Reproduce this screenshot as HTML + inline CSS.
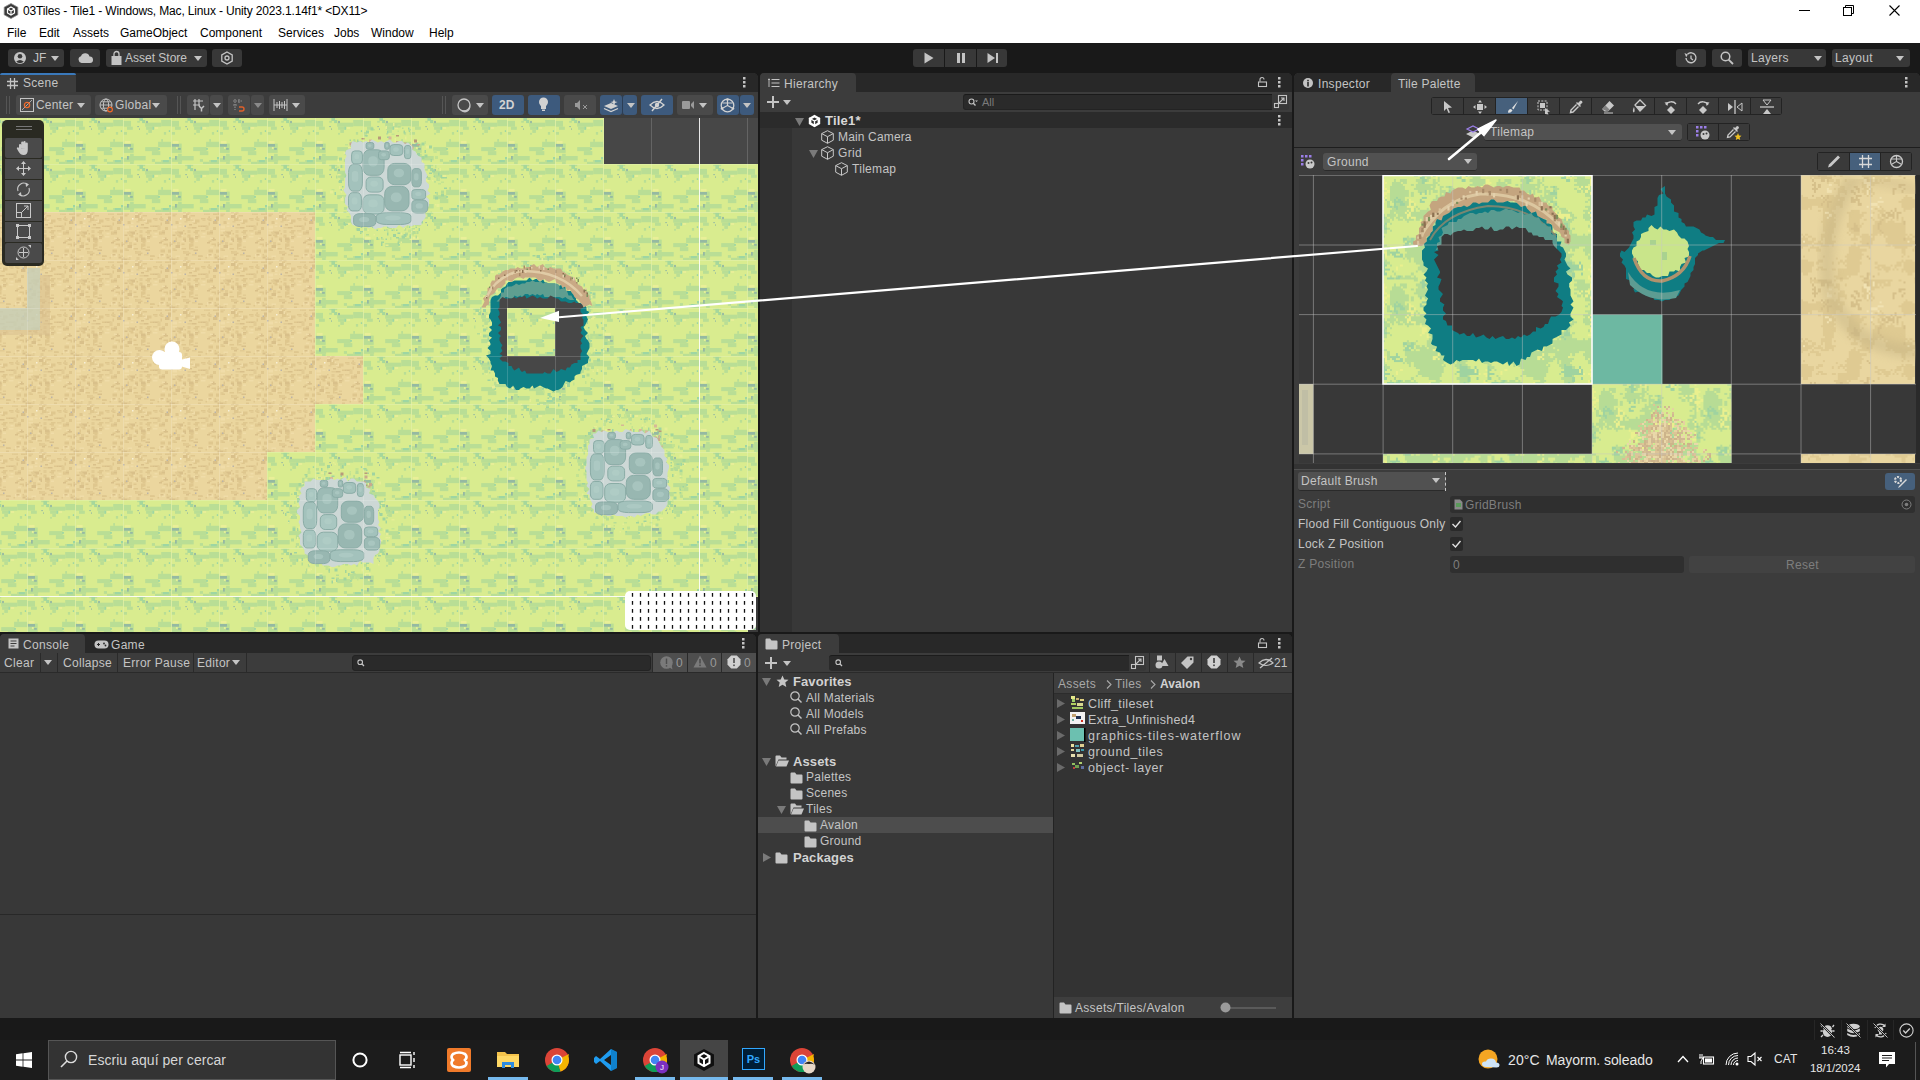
<!DOCTYPE html><html><head><meta charset="utf-8"><style>
*{margin:0;padding:0;box-sizing:border-box}
html,body{width:1920px;height:1080px;overflow:hidden;background:#191919;font-family:"Liberation Sans",sans-serif;font-size:12px;color:#c4c4c4}
.a{position:absolute}
.t{position:absolute;white-space:nowrap;line-height:1}
svg.i{position:absolute;overflow:visible}
.panel{position:absolute;background:#383838;border-radius:5px 5px 0 0;overflow:hidden}
.tabstrip{position:absolute;left:0;top:0;right:0;height:19px;background:#282828}
.tab{position:absolute;top:0;height:19px;background:#3c3c3c;border-radius:4px 4px 0 0}
.ptool{position:absolute;left:0;right:0;background:#3c3c3c}
.tbtn{position:absolute;background:#383838;border-radius:3px}
.sbtn{position:absolute;background:#4a4a4a;border-radius:3px}
.blue{background:#3d5a7d !important}
.dd{position:absolute;background:#515151;border-radius:3px}
.sf{position:absolute;background:#2a2a2a;border-radius:3px;border:1px solid #212121}
</style></head><body>
<div class="a" style="left:0px;top:0px;width:1920px;height:43px;background:#ffffff;"></div>
<svg class="i" style="left:3px;top:3px;" width="16" height="16" viewBox="0 0 16 16"><polygon points="8,0.5 14.8,4.2 14.8,11.8 8,15.5 1.2,11.8 1.2,4.2" fill="#3a3a3a" stroke="#8a8a8a" stroke-width="0.8"/><path d="M8 4 L11.5 6 L11.5 10 L8 12 L4.5 10 L4.5 6Z" fill="none" stroke="#fff" stroke-width="1.2"/><path d="M8 8 L8 12 M8 8 L11.5 6 M8 8 L4.5 6" stroke="#fff" stroke-width="1.1"/></svg>
<div class="t" style="left:23px;top:5px;font-size:12px;color:#000;font-weight:400;letter-spacing:-0.15px;">03Tiles - Tile1 - Windows, Mac, Linux - Unity 2023.1.14f1* &lt;DX11&gt;</div>
<svg class="i" style="left:1799px;top:10px;" width="11" height="1" viewBox="0 0 11 1"><rect width="11" height="1" fill="#000"/></svg>
<svg class="i" style="left:1843px;top:5px;" width="11" height="11" viewBox="0 0 11 11"><rect x="0.5" y="2.5" width="8" height="8" fill="none" stroke="#000"/><path d="M2.5 2.5V0.5H10.5V8.5H8.5" fill="none" stroke="#000"/></svg>
<svg class="i" style="left:1889px;top:5px;" width="11" height="11" viewBox="0 0 11 11"><path d="M0.5 0.5L10.5 10.5M10.5 0.5L0.5 10.5" stroke="#000" stroke-width="1.1"/></svg>
<div class="t" style="left:7px;top:27px;font-size:12px;color:#000;font-weight:400;letter-spacing:0px;">File</div>
<div class="t" style="left:39px;top:27px;font-size:12px;color:#000;font-weight:400;letter-spacing:0px;">Edit</div>
<div class="t" style="left:73px;top:27px;font-size:12px;color:#000;font-weight:400;letter-spacing:0px;">Assets</div>
<div class="t" style="left:120px;top:27px;font-size:12px;color:#000;font-weight:400;letter-spacing:0px;">GameObject</div>
<div class="t" style="left:200px;top:27px;font-size:12px;color:#000;font-weight:400;letter-spacing:0px;">Component</div>
<div class="t" style="left:278px;top:27px;font-size:12px;color:#000;font-weight:400;letter-spacing:0px;">Services</div>
<div class="t" style="left:334px;top:27px;font-size:12px;color:#000;font-weight:400;letter-spacing:0px;">Jobs</div>
<div class="t" style="left:371px;top:27px;font-size:12px;color:#000;font-weight:400;letter-spacing:0px;">Window</div>
<div class="t" style="left:429px;top:27px;font-size:12px;color:#000;font-weight:400;letter-spacing:0px;">Help</div>
<div class="a" style="left:0px;top:43px;width:1920px;height:30px;background:#191919;"></div>
<div class="tbtn" style="left:8px;top:49px;width:56px;height:18px"></div>
<div class="tbtn" style="left:70px;top:49px;width:30px;height:18px"></div>
<div class="tbtn" style="left:106px;top:49px;width:101px;height:18px"></div>
<div class="tbtn" style="left:212px;top:49px;width:30px;height:18px"></div>
<svg class="i" style="left:13px;top:51px;" width="14" height="14" viewBox="0 0 14 14"><circle cx="7" cy="7" r="6" fill="#c4c4c4"/><circle cx="7" cy="5.2" r="2.3" fill="#383838"/><path d="M3.2 10.8 Q7 7.2 10.8 10.8 Q7 13.5 3.2 10.8Z" fill="#383838"/></svg>
<div class="t" style="left:33px;top:52px;font-size:12px;color:#c4c4c4;font-weight:400;letter-spacing:0px;">JF</div>
<svg class="i" style="left:51px;top:56px;" width="8" height="5" viewBox="0 0 8 5"><path d="M0 0H8L4 5Z" fill="#c4c4c4"/></svg>
<svg class="i" style="left:78px;top:53px;" width="15" height="10" viewBox="0 0 15 10"><path d="M3.5 10 A3.5 3.5 0 0 1 3 3.2 A4.5 4.5 0 0 1 11.5 3.5 A3.2 3.2 0 0 1 12 10Z" fill="#c4c4c4"/></svg>
<svg class="i" style="left:111px;top:51px;" width="11" height="14" viewBox="0 0 11 14"><path d="M3 5V3A2.5 2.5 0 0 1 8 3V5" fill="none" stroke="#c4c4c4" stroke-width="1.3"/><rect x="0.5" y="5" width="10" height="9" fill="#c4c4c4"/></svg>
<div class="t" style="left:125px;top:52px;font-size:12px;color:#c4c4c4;font-weight:400;letter-spacing:0px;">Asset Store</div>
<svg class="i" style="left:194px;top:56px;" width="8" height="5" viewBox="0 0 8 5"><path d="M0 0H8L4 5Z" fill="#c4c4c4"/></svg>
<svg class="i" style="left:220px;top:51px;" width="14" height="14" viewBox="0 0 14 14"><polygon points="7,1 12.2,4 12.2,10 7,13 1.8,10 1.8,4" fill="none" stroke="#c4c4c4" stroke-width="1.3"/><circle cx="7" cy="7" r="2" fill="none" stroke="#c4c4c4" stroke-width="1.3"/></svg>
<div class="a" style="left:913px;top:49px;width:94px;height:18px;background:#383838;border-radius:3px"></div>
<div class="a" style="left:944px;top:49px;width:1px;height:18px;background:#191919;"></div>
<div class="a" style="left:976px;top:49px;width:1px;height:18px;background:#191919;"></div>
<svg class="i" style="left:924px;top:52px;" width="10" height="12" viewBox="0 0 10 12"><path d="M0.5 0.5L9.5 6L0.5 11.5Z" fill="#c4c4c4"/></svg>
<svg class="i" style="left:956px;top:52px;" width="10" height="12" viewBox="0 0 10 12"><rect x="1" y="1" width="3" height="10" fill="#c4c4c4"/><rect x="6" y="1" width="3" height="10" fill="#c4c4c4"/></svg>
<svg class="i" style="left:987px;top:52px;" width="12" height="12" viewBox="0 0 12 12"><path d="M0.5 1L8 6L0.5 11Z" fill="#c4c4c4"/><rect x="9" y="1" width="2" height="10" fill="#c4c4c4"/></svg>
<div class="tbtn" style="left:1676px;top:49px;width:30px;height:18px"></div>
<div class="tbtn" style="left:1712px;top:49px;width:30px;height:18px"></div>
<div class="tbtn" style="left:1748px;top:49px;width:78px;height:18px"></div>
<div class="tbtn" style="left:1832px;top:49px;width:78px;height:18px"></div>
<svg class="i" style="left:1683px;top:51px;" width="15" height="14" viewBox="0 0 15 14"><path d="M3 7 A5 5 0 1 0 4.5 3.2" fill="none" stroke="#c4c4c4" stroke-width="1.4"/><path d="M1.5 2 L4.8 3.4 L3.2 6.2Z" fill="#c4c4c4"/><path d="M8 4.5V7.5L10 9" fill="none" stroke="#c4c4c4" stroke-width="1.3"/></svg>
<svg class="i" style="left:1720px;top:51px;" width="14" height="14" viewBox="0 0 14 14"><circle cx="5.5" cy="5.5" r="4.3" fill="none" stroke="#c4c4c4" stroke-width="1.5"/><path d="M8.6 8.6L13 13" stroke="#c4c4c4" stroke-width="1.8"/></svg>
<div class="t" style="left:1751px;top:52px;font-size:12px;color:#c4c4c4;font-weight:400;letter-spacing:0.3px;">Layers</div>
<svg class="i" style="left:1814px;top:56px;" width="8" height="5" viewBox="0 0 8 5"><path d="M0 0H8L4 5Z" fill="#c4c4c4"/></svg>
<div class="t" style="left:1835px;top:52px;font-size:12px;color:#c4c4c4;font-weight:400;letter-spacing:0.3px;">Layout</div>
<svg class="i" style="left:1896px;top:56px;" width="8" height="5" viewBox="0 0 8 5"><path d="M0 0H8L4 5Z" fill="#c4c4c4"/></svg>
<div class="panel" style="left:0;top:73px;width:758px;height:559px;"><div class="tabstrip"></div></div>
<div class="a" style="left:0px;top:73px;width:76px;height:19px;background:#3c3c3c;border-radius:4px 4px 0 0"></div>
<div class="a" style="left:0px;top:73px;width:76px;height:2px;background:#3a79bb;border-radius:4px 4px 0 0"></div>
<svg class="i" style="left:7px;top:78px;" width="11" height="11" viewBox="0 0 11 11"><path d="M3.5 0V11M7.5 0V11M0 3.5H11M0 7.5H11" stroke="#c4c4c4" stroke-width="1.3"/></svg>
<div class="t" style="left:23px;top:77px;font-size:12px;color:#c4c4c4;font-weight:400;letter-spacing:0.3px;">Scene</div>
<svg class="i" style="left:743px;top:77px;" width="3" height="11" viewBox="0 0 3 11"><rect x="0" y="0" width="2.5" height="2.5" fill="#c4c4c4"/><rect x="0" y="4" width="2.5" height="2.5" fill="#c4c4c4"/><rect x="0" y="8" width="2.5" height="2.5" fill="#c4c4c4"/></svg>
<div class="a" style="left:0px;top:92px;width:758px;height:26px;background:#3c3c3c;"></div>
<div class="a" style="left:6px;top:96px;width:1px;height:18px;background:#555;"></div>
<div class="a" style="left:9px;top:96px;width:1px;height:18px;background:#555;"></div>
<div class="a" style="left:177px;top:96px;width:1px;height:18px;background:#555;"></div>
<div class="a" style="left:180px;top:96px;width:1px;height:18px;background:#555;"></div>
<div class="a" style="left:442px;top:96px;width:1px;height:18px;background:#555;"></div>
<div class="a" style="left:445px;top:96px;width:1px;height:18px;background:#555;"></div>
<div class="sbtn" style="left:16px;top:95px;width:75px;height:20px"></div>
<div class="sbtn" style="left:95px;top:95px;width:72px;height:20px"></div>
<svg class="i" style="left:20px;top:98px;" width="14" height="14" viewBox="0 0 14 14"><rect x="0.5" y="0.5" width="13" height="13" fill="none" stroke="#c4c4c4"/><path d="M2 12L12 2" stroke="#c4c4c4" stroke-width="0.8"/><circle cx="7" cy="7" r="2.6" fill="none" stroke="#f06a2a" stroke-width="1.3"/></svg>
<div class="t" style="left:36px;top:99px;font-size:12px;color:#c4c4c4;font-weight:400;letter-spacing:0.2px;">Center</div>
<svg class="i" style="left:77px;top:103px;" width="8" height="5" viewBox="0 0 8 5"><path d="M0 0H8L4 5Z" fill="#c4c4c4"/></svg>
<svg class="i" style="left:99px;top:98px;" width="15" height="15" viewBox="0 0 15 15"><circle cx="7" cy="7" r="6" fill="none" stroke="#c4c4c4" stroke-width="1"/><ellipse cx="7" cy="7" rx="2.6" ry="6" fill="none" stroke="#c4c4c4" stroke-width="1"/><path d="M1 7H13M2 3.8H12M2 10.2H12" stroke="#c4c4c4" stroke-width="0.9"/><circle cx="11" cy="11.5" r="2.4" fill="#4a4a4a" stroke="#f06a2a" stroke-width="1.2"/></svg>
<div class="t" style="left:115px;top:99px;font-size:12px;color:#c4c4c4;font-weight:400;letter-spacing:0.3px;">Global</div>
<svg class="i" style="left:152px;top:103px;" width="8" height="5" viewBox="0 0 8 5"><path d="M0 0H8L4 5Z" fill="#c4c4c4"/></svg>
<div class="sbtn" style="left:187px;top:95px;width:22px;height:20px"></div>
<div class="sbtn" style="left:210px;top:95px;width:13px;height:20px"></div>
<div class="sbtn" style="left:228px;top:95px;width:22px;height:20px"></div>
<div class="sbtn" style="left:251px;top:95px;width:13px;height:20px"></div>
<div class="sbtn" style="left:269px;top:95px;width:36px;height:20px"></div>
<svg class="i" style="left:192px;top:98px;" width="13" height="14" viewBox="0 0 13 14"><path d="M3 1V12M7 1V8M1 3H11M1 7H8" stroke="#c4c4c4" stroke-width="1.2"/><path d="M7 8L9.5 10.5L12 8M9.5 10.5V13.5" fill="none" stroke="#c4c4c4" stroke-width="1.5"/></svg>
<svg class="i" style="left:213px;top:103px;" width="8" height="5" viewBox="0 0 8 5"><path d="M0 0H8L4 5Z" fill="#c4c4c4"/></svg>
<svg class="i" style="left:232px;top:98px;" width="13" height="14" viewBox="0 0 13 14"><path d="M3 1V12M7 1V6M1 3H11M1 7H5" stroke="#8a8a8a" stroke-width="1.2" stroke-dasharray="1.5 1"/><path d="M7 9H10A2 2 0 0 1 10 13H7" fill="none" stroke="#e0602a" stroke-width="1.4"/></svg>
<svg class="i" style="left:254px;top:103px;" width="8" height="5" viewBox="0 0 8 5"><path d="M0 0H8L4 5Z" fill="#8a8a8a"/></svg>
<svg class="i" style="left:273px;top:98px;" width="15" height="14" viewBox="0 0 15 14"><path d="M1 1V13M14 1V13M1 7H14M4 4V10M6.5 3V11M9 4V10M11.5 3V11" stroke="#c4c4c4" stroke-width="1"/></svg>
<svg class="i" style="left:292px;top:103px;" width="8" height="5" viewBox="0 0 8 5"><path d="M0 0H8L4 5Z" fill="#c4c4c4"/></svg>
<div class="sbtn" style="left:452px;top:95px;width:36px;height:20px"></div>
<div class="sbtn blue" style="left:492px;top:95px;width:32px;height:20px"></div>
<div class="sbtn blue" style="left:528px;top:95px;width:32px;height:20px"></div>
<div class="sbtn" style="left:564px;top:95px;width:32px;height:20px"></div>
<div class="sbtn blue" style="left:600px;top:95px;width:22px;height:20px"></div>
<div class="sbtn blue" style="left:623px;top:95px;width:14px;height:20px"></div>
<div class="sbtn blue" style="left:641px;top:95px;width:32px;height:20px"></div>
<div class="sbtn" style="left:677px;top:95px;width:36px;height:20px"></div>
<div class="sbtn blue" style="left:717px;top:95px;width:22px;height:20px"></div>
<div class="sbtn blue" style="left:740px;top:95px;width:14px;height:20px"></div>
<div class="a" style="left:622px;top:95px;width:1px;height:20px;background:#2c3e55;"></div>
<div class="a" style="left:739px;top:95px;width:1px;height:20px;background:#2c3e55;"></div>
<svg class="i" style="left:457px;top:98px;" width="15" height="14" viewBox="0 0 15 14"><circle cx="7" cy="7" r="6" fill="none" stroke="#c4c4c4" stroke-width="1.3"/><path d="M3 11A6 6 0 0 0 13 7A4.5 4.5 0 0 1 3 11Z" fill="#c4c4c4"/></svg>
<svg class="i" style="left:476px;top:103px;" width="8" height="5" viewBox="0 0 8 5"><path d="M0 0H8L4 5Z" fill="#c4c4c4"/></svg>
<div class="t" style="left:499px;top:99px;font-size:12px;color:#d2d2d2;font-weight:700;letter-spacing:0px;">2D</div>
<svg class="i" style="left:538px;top:97px;" width="11" height="15" viewBox="0 0 11 15"><circle cx="5.5" cy="5" r="4.5" fill="#d2d2d2"/><rect x="3" y="9" width="5" height="3" fill="#d2d2d2"/><rect x="4" y="12.5" width="3" height="1.5" fill="#d2d2d2"/></svg>
<svg class="i" style="left:574px;top:99px;" width="16" height="12" viewBox="0 0 16 12"><path d="M1 4H3L6 1V11L3 8H1Z" fill="#9a9a9a"/><path d="M9 6L13 10M13 6L9 10" stroke="#9a9a9a" stroke-width="1"/></svg>
<svg class="i" style="left:603px;top:98px;" width="16" height="14" viewBox="0 0 16 14"><path d="M1 8L8 5L15 8L8 11Z" fill="#d2d2d2"/><path d="M1 10.5L8 13.5L15 10.5" fill="none" stroke="#d2d2d2" stroke-width="1.3"/><path d="M11 1L12 3.5L14.5 4L12 5L11 7.5L10 5L7.5 4L10 3.5Z" fill="#d2d2d2"/></svg>
<svg class="i" style="left:627px;top:103px;" width="8" height="5" viewBox="0 0 8 5"><path d="M0 0H8L4 5Z" fill="#c4c4c4"/></svg>
<svg class="i" style="left:649px;top:98px;" width="16" height="14" viewBox="0 0 16 14"><path d="M1 7Q8 0 15 7Q8 14 1 7Z" fill="none" stroke="#d2d2d2" stroke-width="1.3"/><circle cx="8" cy="7" r="2.2" fill="#d2d2d2"/><path d="M3 13L13 1" stroke="#d2d2d2" stroke-width="1.4"/></svg>
<svg class="i" style="left:682px;top:100px;" width="13" height="10" viewBox="0 0 13 10"><rect x="0" y="1" width="8" height="8" rx="1" fill="#9a9a9a"/><path d="M9 4L12 1V9L9 6Z" fill="#9a9a9a"/></svg>
<svg class="i" style="left:699px;top:103px;" width="8" height="5" viewBox="0 0 8 5"><path d="M0 0H8L4 5Z" fill="#c4c4c4"/></svg>
<svg class="i" style="left:720px;top:98px;" width="15" height="15" viewBox="0 0 15 15"><circle cx="7.5" cy="7.5" r="6.3" fill="none" stroke="#d2d2d2" stroke-width="1.3"/><path d="M7.5 1.5V7.5L2 10.5M7.5 7.5L13 10.5M2.5 5H12.5" fill="none" stroke="#d2d2d2" stroke-width="1.2"/><circle cx="7.5" cy="1.5" r="1.3" fill="#d2d2d2"/><circle cx="2" cy="10.5" r="1.3" fill="#d2d2d2"/><circle cx="13" cy="10.5" r="1.3" fill="#d2d2d2"/></svg>
<svg class="i" style="left:743px;top:103px;" width="8" height="5" viewBox="0 0 8 5"><path d="M0 0H8L4 5Z" fill="#c4c4c4"/></svg>
<svg class="i" style="left:0;top:118px;overflow:hidden" width="758" height="514" viewBox="0 118 758 514"><defs><pattern id="grass" patternUnits="userSpaceOnUse" x="27" y="20" width="48" height="48"><rect width="48" height="48" fill="#d9ec8f"/><rect x="14.2" y="0.9" width="8.0" height="1.3" fill="#b9de95"/><rect x="16.4" y="0.9" width="3.6" height="4.0" fill="#a6d79b"/><rect x="19.1" y="4.0" width="3.1" height="3.1" fill="#a6d79b"/><rect x="14.2" y="4.9" width="2.7" height="1.8" fill="#b9de95"/><rect x="0.9" y="4.9" width="7.1" height="5.8" fill="#b9de95"/><rect x="4.0" y="10.7" width="5.8" height="3.1" fill="#b9de95"/><rect x="22.2" y="6.7" width="16.0" height="4.0" fill="#b9de95"/><rect x="23.1" y="10.7" width="6.2" height="3.1" fill="#b9de95"/><rect x="25.3" y="13.8" width="3.6" height="3.1" fill="#b9de95"/><rect x="38.2" y="4.0" width="9.8" height="6.2" fill="#b9de95"/><rect x="29.3" y="10.7" width="1.8" height="3.1" fill="#9dd6a3"/><rect x="32.0" y="11.1" width="3.1" height="1.8" fill="#e9ef98"/><rect x="23.1" y="4.9" width="1.8" height="2.2" fill="#95b9a2"/><rect x="14.2" y="10.2" width="1.8" height="0.9" fill="#95b9a2"/><rect x="16.0" y="12.4" width="0.9" height="1.4" fill="#95b9a2"/><rect x="0.9" y="16.0" width="3.1" height="2.7" fill="#b9de95"/><rect x="23.1" y="16.9" width="1.8" height="1.8" fill="#b9de95"/><rect x="40.9" y="16.0" width="2.2" height="2.7" fill="#b9de95"/><rect x="45.8" y="14.2" width="1.3" height="1.8" fill="#9dd6a3"/><rect x="38.2" y="23.1" width="1.8" height="2.7" fill="#b9de95"/><rect x="35.1" y="25.8" width="12.9" height="5.3" fill="#b9de95"/><rect x="22.2" y="31.1" width="13.4" height="4.0" fill="#b9de95"/><rect x="28.9" y="35.1" width="8.4" height="4.0" fill="#b9de95"/><rect x="35.1" y="32.0" width="1.8" height="1.8" fill="#9dd6a3"/><rect x="0.9" y="27.6" width="9.8" height="9.3" fill="#b9de95"/><rect x="1.8" y="24.9" width="5.8" height="2.7" fill="#e9ef98"/><rect x="0.9" y="28.0" width="7.1" height="2.7" fill="#95b9a2"/><rect x="7.1" y="32.0" width="2.7" height="1.8" fill="#95b9a2"/><rect x="4.9" y="31.1" width="1.8" height="1.8" fill="#e9ef98"/><rect x="4.9" y="40.0" width="17.8" height="4.4" fill="#b9de95"/><rect x="0.9" y="42.2" width="10.2" height="3.6" fill="#b9de95"/><rect x="7.1" y="37.8" width="3.6" height="2.2" fill="#b9de95"/><rect x="4.0" y="40.0" width="1.8" height="3.6" fill="#95b9a2"/><rect x="28.9" y="43.1" width="3.1" height="2.7" fill="#b9de95"/><rect x="38.2" y="44.0" width="9.8" height="4.0" fill="#b9de95"/><rect x="40.0" y="44.0" width="5.8" height="2.2" fill="#9dd6a3"/><rect x="46.0" y="41.0" width="2.0" height="2.5" fill="#9dd6a3"/><rect x="32.0" y="45.8" width="6.2" height="2.2" fill="#b9de95"/><rect x="7.1" y="45.8" width="3.6" height="2.2" fill="#b9de95"/></pattern><pattern id="sand" patternUnits="userSpaceOnUse" x="27" y="20" width="48" height="48"><rect width="48" height="48" fill="#ebd69e"/><rect x="30.0" y="13.5" width="1.5" height="1.5" fill="#d9c08a"/><rect x="9.0" y="34.5" width="1.5" height="3" fill="#f0dca8"/><rect x="19.5" y="3.0" width="4.5" height="1.5" fill="#dfc78e"/><rect x="6.0" y="22.5" width="4.5" height="1.5" fill="#dfc78e"/><rect x="10.5" y="21.0" width="1.5" height="3" fill="#f0dca8"/><rect x="37.5" y="4.5" width="1.5" height="3" fill="#dfc78e"/><rect x="12.0" y="27.0" width="3" height="3" fill="#d9c08a"/><rect x="10.5" y="28.5" width="3" height="1.5" fill="#f0dca8"/><rect x="18.0" y="34.5" width="1.5" height="3" fill="#dfc78e"/><rect x="4.5" y="19.5" width="4.5" height="1.5" fill="#d9c08a"/><rect x="43.5" y="43.5" width="3" height="1.5" fill="#e2cb93"/><rect x="16.5" y="22.5" width="3" height="3" fill="#dfc78e"/><rect x="46.5" y="31.5" width="3" height="3" fill="#d9c08a"/><rect x="6.0" y="10.5" width="4.5" height="1.5" fill="#f0dca8"/><rect x="31.5" y="13.5" width="4.5" height="1.5" fill="#d9c08a"/><rect x="6.0" y="30.0" width="3" height="3" fill="#e2cb93"/><rect x="46.5" y="43.5" width="1.5" height="1.5" fill="#dfc78e"/><rect x="45.0" y="6.0" width="3" height="3" fill="#dfc78e"/><rect x="42.0" y="27.0" width="3" height="1.5" fill="#d9c08a"/><rect x="43.5" y="33.0" width="1.5" height="1.5" fill="#dfc78e"/><rect x="4.5" y="19.5" width="3" height="3" fill="#e2cb93"/><rect x="22.5" y="37.5" width="4.5" height="1.5" fill="#d9c08a"/><rect x="15.0" y="42.0" width="3" height="1.5" fill="#d9c08a"/><rect x="40.5" y="25.5" width="3" height="3" fill="#d9c08a"/><rect x="36.0" y="21.0" width="1.5" height="1.5" fill="#dfc78e"/><rect x="13.5" y="21.0" width="1.5" height="1.5" fill="#dfc78e"/><rect x="16.5" y="24.0" width="1.5" height="1.5" fill="#e2cb93"/><rect x="39.0" y="34.5" width="3" height="1.5" fill="#f0dca8"/><rect x="4.5" y="43.5" width="4.5" height="1.5" fill="#f0dca8"/><rect x="37.5" y="37.5" width="4.5" height="3" fill="#dfc78e"/><rect x="37.5" y="4.5" width="1.5" height="1.5" fill="#dfc78e"/><rect x="42.0" y="15.0" width="3" height="3" fill="#dfc78e"/><rect x="4.5" y="9.0" width="3" height="3" fill="#dfc78e"/><rect x="9.0" y="34.5" width="1.5" height="1.5" fill="#f0dca8"/><rect x="19.5" y="36.0" width="3" height="1.5" fill="#dfc78e"/><rect x="34.5" y="45.0" width="1.5" height="1.5" fill="#dfc78e"/><rect x="43.5" y="45.0" width="3" height="1.5" fill="#d9c08a"/><rect x="13.5" y="9.0" width="3" height="1.5" fill="#e2cb93"/><rect x="15.0" y="1.5" width="3" height="1.5" fill="#dfc78e"/><rect x="1.5" y="28.5" width="3" height="3" fill="#dfc78e"/><rect x="34.5" y="15.0" width="3" height="3" fill="#e2cb93"/><rect x="31.5" y="21.0" width="3" height="1.5" fill="#f0dca8"/><rect x="37.5" y="21.0" width="4.5" height="1.5" fill="#dfc78e"/><rect x="1.5" y="1.5" width="4.5" height="1.5" fill="#e2cb93"/><rect x="18.0" y="33.0" width="3" height="1.5" fill="#d9c08a"/><rect x="7.5" y="21.0" width="3" height="1.5" fill="#dfc78e"/><rect x="18.0" y="31.5" width="4.5" height="3" fill="#dfc78e"/><rect x="0.0" y="45.0" width="1.5" height="3" fill="#e2cb93"/><rect x="10.5" y="36.0" width="4.5" height="1.5" fill="#dfc78e"/><rect x="40.5" y="31.5" width="4.5" height="1.5" fill="#dfc78e"/><rect x="37.5" y="7.5" width="3" height="1.5" fill="#dfc78e"/><rect x="1.5" y="13.5" width="4.5" height="3" fill="#f0dca8"/><rect x="13.5" y="45.0" width="3" height="3" fill="#e2cb93"/><rect x="12.0" y="1.5" width="1.5" height="3" fill="#dfc78e"/><rect x="12.0" y="40.5" width="3" height="1.5" fill="#dfc78e"/><rect x="24.0" y="19.5" width="3" height="3" fill="#e2cb93"/><rect x="30.0" y="24.0" width="4.5" height="1.5" fill="#f0dca8"/><rect x="4.5" y="33.0" width="4.5" height="3" fill="#d9c08a"/><rect x="12.0" y="13.5" width="1.5" height="1.5" fill="#f0dca8"/><rect x="16.5" y="0.0" width="3" height="1.5" fill="#dfc78e"/><rect x="45.0" y="10.5" width="1.5" height="1.5" fill="#f0dca8"/><rect x="45.0" y="9.0" width="1.5" height="1.5" fill="#f0dca8"/><rect x="18.0" y="25.5" width="1.5" height="3" fill="#dfc78e"/><rect x="42.0" y="1.5" width="4.5" height="1.5" fill="#dfc78e"/><rect x="18.0" y="25.5" width="4.5" height="3" fill="#d9c08a"/><rect x="22.5" y="24.0" width="3" height="1.5" fill="#f0dca8"/><rect x="12.0" y="39.0" width="4.5" height="1.5" fill="#dfc78e"/><rect x="30.0" y="6.0" width="4.5" height="1.5" fill="#dfc78e"/><rect x="19.5" y="28.5" width="3" height="3" fill="#dfc78e"/><rect x="34.5" y="13.5" width="3" height="1.5" fill="#e2cb93"/><rect x="21.0" y="9.0" width="4.5" height="1.5" fill="#d9c08a"/><rect x="21.0" y="15.0" width="4.5" height="1.5" fill="#d9c08a"/><rect x="39.0" y="18.0" width="3" height="1.5" fill="#e2cb93"/><rect x="34.5" y="1.5" width="4.5" height="1.5" fill="#e2cb93"/><rect x="1.5" y="36.0" width="3" height="3" fill="#e2cb93"/><rect x="6.0" y="10.5" width="1.5" height="1.5" fill="#dfc78e"/><rect x="24.0" y="25.5" width="3" height="1.5" fill="#dfc78e"/><rect x="12.0" y="40.5" width="4.5" height="1.5" fill="#e2cb93"/><rect x="46.5" y="30.0" width="3" height="1.5" fill="#dfc78e"/><rect x="16.5" y="40.5" width="3" height="1.5" fill="#dfc78e"/><rect x="7.5" y="24.0" width="3" height="1.5" fill="#dfc78e"/><rect x="24.0" y="10.5" width="1.5" height="1.5" fill="#d9c08a"/><rect x="39.0" y="25.5" width="3" height="1.5" fill="#f0dca8"/><rect x="22.5" y="10.5" width="3" height="1.5" fill="#dfc78e"/><rect x="16.5" y="18.0" width="3" height="3" fill="#e2cb93"/><rect x="19.5" y="27.0" width="3" height="1.5" fill="#d9c08a"/><rect x="33.0" y="1.5" width="1.5" height="1.5" fill="#e2cb93"/><rect x="1.5" y="18.0" width="4.5" height="1.5" fill="#f0dca8"/><rect x="42.0" y="9.0" width="4.5" height="3" fill="#d9c08a"/><rect x="37.5" y="28.5" width="3" height="1.5" fill="#dfc78e"/><rect x="18.0" y="12.0" width="3" height="1.5" fill="#d9c08a"/><rect x="12.0" y="0.0" width="3" height="1.5" fill="#dfc78e"/><rect x="15.0" y="4.5" width="4.5" height="3" fill="#dfc78e"/><rect x="27.0" y="22.5" width="1.5" height="1.5" fill="#e2cb93"/><rect x="16.5" y="15.0" width="4.5" height="1.5" fill="#e2cb93"/><rect x="24.0" y="34.5" width="3" height="1.5" fill="#e2cb93"/><rect x="3.0" y="28.5" width="3" height="1.5" fill="#dfc78e"/><rect x="0.0" y="31.5" width="1.5" height="1.5" fill="#d9c08a"/><rect x="25.5" y="18.0" width="1.5" height="1.5" fill="#dfc78e"/><rect x="24.0" y="7.5" width="4.5" height="3" fill="#dfc78e"/><rect x="3.0" y="37.5" width="3" height="1.5" fill="#dfc78e"/><rect x="21.0" y="7.5" width="3" height="3" fill="#f0dca8"/><rect x="36.0" y="30.0" width="3" height="1.5" fill="#d9c08a"/><rect x="13.5" y="3.0" width="4.5" height="3" fill="#f0dca8"/><rect x="12.0" y="1.5" width="3" height="1.5" fill="#f0dca8"/><rect x="1.5" y="3.0" width="3" height="1.5" fill="#dfc78e"/><rect x="36.0" y="42.0" width="1.5" height="3" fill="#f0dca8"/><rect x="1.5" y="22.5" width="3" height="1.5" fill="#d9c08a"/><rect x="43.5" y="6.0" width="1.5" height="3" fill="#f0dca8"/><rect x="6.0" y="45.0" width="1.5" height="1.5" fill="#e2cb93"/><rect x="22.5" y="19.5" width="4.5" height="1.5" fill="#dfc78e"/><rect x="36.0" y="6.0" width="3" height="1.5" fill="#d9c08a"/><rect x="18.0" y="6.0" width="3" height="1.5" fill="#f0dca8"/><rect x="24.0" y="28.5" width="3" height="1.5" fill="#f0dca8"/><rect x="45.0" y="4.5" width="3" height="3" fill="#d9c08a"/><rect x="9.0" y="19.5" width="3" height="3" fill="#d9c08a"/><rect x="27.0" y="43.5" width="4.5" height="1.5" fill="#d9c08a"/><rect x="18.0" y="28.5" width="4.5" height="1.5" fill="#dfc78e"/><rect x="27.0" y="43.5" width="4.5" height="1.5" fill="#dfc78e"/><rect x="36.0" y="19.5" width="1.5" height="3" fill="#dfc78e"/><rect x="7.5" y="13.5" width="3" height="1.5" fill="#f0dca8"/><rect x="12.0" y="25.5" width="3" height="1.5" fill="#dfc78e"/><rect x="46.5" y="46.5" width="1.5" height="1.5" fill="#d9c08a"/><rect x="0.0" y="46.5" width="4.5" height="1.5" fill="#d9c08a"/><rect x="13.5" y="39.0" width="4.5" height="1.5" fill="#e2cb93"/><rect x="10.5" y="31.5" width="3" height="1.5" fill="#dfc78e"/><rect x="37.5" y="10.5" width="1.5" height="3" fill="#dfc78e"/><rect x="27.0" y="24.0" width="1.5" height="1.5" fill="#e2cb93"/><rect x="36.0" y="6.0" width="4.5" height="1.5" fill="#e2cb93"/><rect x="4.5" y="25.5" width="1.5" height="3" fill="#dfc78e"/><rect x="27.0" y="13.5" width="3" height="1.5" fill="#dfc78e"/><rect x="30.0" y="18.0" width="4.5" height="1.5" fill="#e2cb93"/><rect x="37.5" y="19.5" width="1.5" height="3" fill="#dfc78e"/><rect x="39.0" y="42.0" width="3" height="3" fill="#f0dca8"/><rect x="27.0" y="46.5" width="3" height="1.5" fill="#dfc78e"/><rect x="45.0" y="39.0" width="3" height="1.5" fill="#e2cb93"/><rect x="24.0" y="24.0" width="3" height="1.5" fill="#d9c08a"/><rect x="45.0" y="37.5" width="3" height="3" fill="#dfc78e"/><rect x="15.0" y="6.0" width="4.5" height="3" fill="#dfc78e"/><rect x="21.0" y="42.0" width="4.5" height="1.5" fill="#e2cb93"/><rect x="12.0" y="18.0" width="1.5" height="1.5" fill="#dfc78e"/><rect x="31.5" y="7.5" width="3" height="1.5" fill="#e2cb93"/><rect x="24.0" y="18.0" width="4.5" height="1.5" fill="#dfc78e"/><rect x="39.0" y="19.5" width="3" height="1.5" fill="#d9c08a"/><rect x="4.5" y="46.5" width="3" height="1.5" fill="#e2cb93"/><rect x="19.5" y="7.5" width="3" height="1.5" fill="#e2cb93"/><rect x="37.5" y="42.0" width="3" height="1.5" fill="#d9c08a"/><rect x="12.0" y="3.0" width="4.5" height="3" fill="#d9c08a"/><rect x="46.5" y="0.0" width="4.5" height="3" fill="#dfc78e"/><rect x="43.5" y="42.0" width="1.5" height="1.5" fill="#dfc78e"/><rect x="13.5" y="13.5" width="1.5" height="1.5" fill="#b9b3a8"/><rect x="43.5" y="7.5" width="1.5" height="1.5" fill="#b9b3a8"/><rect x="0.0" y="12.0" width="1.5" height="1.5" fill="#b9b3a8"/><rect x="3.0" y="28.5" width="1.5" height="1.5" fill="#b9b3a8"/><rect x="24.0" y="40.5" width="1.5" height="1.5" fill="#b9b3a8"/><rect x="9.0" y="6.0" width="1.5" height="1.5" fill="#f8f0d8"/></pattern><radialGradient id="rk" cx="50%" cy="50%" r="50%"><stop offset="0" stop-color="#a3c1bb"/><stop offset="0.8" stop-color="#a8c4be"/><stop offset="1" stop-color="#b9d2b4"/></radialGradient></defs><rect x="0" y="118" width="758" height="514" fill="url(#grass)"/><path d="M0 212H315V356H363V404H315V452H267V500H0Z" fill="url(#sand)"/><path d="M27 268H40V330H0V308H27Z" fill="#c6cdb6" opacity="0.8"/><path d="M40 275H50V335H0V330H40Z" fill="#d8bd8e" opacity="0.5"/><rect x="604" y="118" width="154" height="46" fill="#474747"/><rect x="412.5" y="231.0" width="3" height="1.5" fill="#9fd3a0"/><rect x="432.0" y="180.0" width="1.5" height="1.5" fill="#e6ee96"/><rect x="394.5" y="145.5" width="3" height="1.5" fill="#e6ee96"/><rect x="418.5" y="228.0" width="1.5" height="3" fill="#a3d59c"/><rect x="438.0" y="183.0" width="3" height="1.5" fill="#c3e391"/><rect x="432.0" y="169.5" width="3" height="1.5" fill="#b5dc96"/><rect x="417.0" y="231.0" width="1.5" height="3" fill="#b5dc96"/><rect x="414.0" y="231.0" width="3" height="1.5" fill="#c3e391"/><rect x="400.5" y="220.5" width="1.5" height="1.5" fill="#a3d59c"/><rect x="400.5" y="241.5" width="1.5" height="1.5" fill="#e6ee96"/><rect x="342.0" y="165.0" width="1.5" height="3" fill="#c3e391"/><rect x="435.0" y="156.0" width="3" height="3" fill="#c3e391"/><rect x="432.0" y="169.5" width="3" height="3" fill="#9fd3a0"/><rect x="381.0" y="241.5" width="3" height="1.5" fill="#a3d59c"/><rect x="339.0" y="186.0" width="1.5" height="3" fill="#e6ee96"/><rect x="340.5" y="165.0" width="1.5" height="3" fill="#a3d59c"/><rect x="408.0" y="144.0" width="3" height="1.5" fill="#d2b494"/><rect x="417.0" y="208.5" width="3" height="3" fill="#a3d59c"/><rect x="406.5" y="217.5" width="1.5" height="3" fill="#e6ee96"/><rect x="421.5" y="162.0" width="1.5" height="3" fill="#e6ee96"/><rect x="342.0" y="186.0" width="1.5" height="1.5" fill="#a3d59c"/><rect x="345.0" y="165.0" width="3" height="1.5" fill="#c3e391"/><rect x="406.5" y="150.0" width="3" height="1.5" fill="#9fd3a0"/><rect x="351.0" y="204.0" width="3" height="1.5" fill="#b5dc96"/><rect x="438.0" y="177.0" width="1.5" height="3" fill="#c3e391"/><rect x="418.5" y="225.0" width="1.5" height="1.5" fill="#c3e391"/><rect x="421.5" y="156.0" width="3" height="3" fill="#a3d59c"/><rect x="331.5" y="189.0" width="3" height="1.5" fill="#c3e391"/><rect x="345.0" y="174.0" width="3" height="1.5" fill="#b5dc96"/><rect x="421.5" y="172.5" width="3" height="1.5" fill="#e6ee96"/><rect x="415.5" y="142.5" width="3" height="1.5" fill="#9fd3a0"/><rect x="412.5" y="214.5" width="1.5" height="1.5" fill="#b5dc96"/><rect x="354.0" y="139.5" width="1.5" height="3" fill="#b5dc96"/><rect x="420.0" y="220.5" width="3" height="3" fill="#9fd3a0"/><rect x="424.5" y="150.0" width="1.5" height="3" fill="#a3d59c"/><rect x="402.0" y="237.0" width="1.5" height="1.5" fill="#b5dc96"/><rect x="345.0" y="222.0" width="1.5" height="1.5" fill="#c3e391"/><rect x="385.5" y="238.5" width="1.5" height="1.5" fill="#9fd3a0"/><rect x="354.0" y="213.0" width="3" height="1.5" fill="#9fd3a0"/><rect x="351.0" y="172.5" width="3" height="3" fill="#e6ee96"/><rect x="373.5" y="234.0" width="1.5" height="1.5" fill="#e6ee96"/><rect x="354.0" y="153.0" width="3" height="1.5" fill="#a3d59c"/><rect x="363.0" y="238.5" width="1.5" height="1.5" fill="#b5dc96"/><rect x="349.5" y="142.5" width="1.5" height="3" fill="#c3e391"/><rect x="340.5" y="192.0" width="1.5" height="1.5" fill="#c3e391"/><rect x="436.5" y="192.0" width="1.5" height="3" fill="#b5dc96"/><rect x="372.0" y="129.0" width="3" height="1.5" fill="#c3e391"/><rect x="352.5" y="211.5" width="1.5" height="1.5" fill="#a3d59c"/><rect x="340.5" y="190.5" width="1.5" height="3" fill="#e6ee96"/><rect x="349.5" y="144.0" width="3" height="1.5" fill="#e6ee96"/><rect x="340.5" y="189.0" width="3" height="1.5" fill="#9fd3a0"/><rect x="408.0" y="220.5" width="1.5" height="1.5" fill="#c3e391"/><rect x="351.0" y="169.5" width="3" height="3" fill="#9fd3a0"/><rect x="444.0" y="177.0" width="3" height="1.5" fill="#a3d59c"/><rect x="367.5" y="141.0" width="1.5" height="3" fill="#e6ee96"/><rect x="418.5" y="202.5" width="3" height="1.5" fill="#e6ee96"/><rect x="424.5" y="154.5" width="3" height="3" fill="#a3d59c"/><rect x="411.0" y="223.5" width="3" height="3" fill="#c3e391"/><rect x="355.5" y="153.0" width="3" height="3" fill="#a3d59c"/><rect x="432.0" y="219.0" width="1.5" height="3" fill="#a3d59c"/><rect x="408.0" y="127.5" width="1.5" height="1.5" fill="#9fd3a0"/><rect x="349.5" y="183.0" width="3" height="3" fill="#e6ee96"/><rect x="388.5" y="222.0" width="1.5" height="1.5" fill="#e6ee96"/><rect x="426.0" y="175.5" width="1.5" height="3" fill="#9fd3a0"/><rect x="411.0" y="228.0" width="1.5" height="3" fill="#c3e391"/><rect x="403.5" y="228.0" width="1.5" height="1.5" fill="#e6ee96"/><rect x="339.0" y="157.5" width="3" height="1.5" fill="#e6ee96"/><rect x="366.0" y="150.0" width="1.5" height="1.5" fill="#c3e391"/><rect x="436.5" y="204.0" width="3" height="3" fill="#e6ee96"/><rect x="364.5" y="135.0" width="3" height="1.5" fill="#a3d59c"/><rect x="361.5" y="219.0" width="1.5" height="1.5" fill="#b5dc96"/><rect x="402.0" y="220.5" width="3" height="3" fill="#a3d59c"/><rect x="363.0" y="217.5" width="3" height="3" fill="#e6ee96"/><rect x="366.0" y="135.0" width="1.5" height="1.5" fill="#a3d59c"/><rect x="391.5" y="229.5" width="3" height="1.5" fill="#9fd3a0"/><rect x="367.5" y="132.0" width="3" height="1.5" fill="#e6ee96"/><rect x="367.5" y="222.0" width="1.5" height="3" fill="#e6ee96"/><rect x="348.0" y="150.0" width="1.5" height="3" fill="#a3d59c"/><rect x="346.5" y="184.5" width="1.5" height="3" fill="#c3e391"/><rect x="369.0" y="144.0" width="1.5" height="3" fill="#d2b494"/><rect x="343.5" y="222.0" width="1.5" height="3" fill="#9fd3a0"/><rect x="406.5" y="223.5" width="3" height="1.5" fill="#b5dc96"/><rect x="409.5" y="238.5" width="3" height="1.5" fill="#e6ee96"/><rect x="393.0" y="234.0" width="3" height="3" fill="#9fd3a0"/><rect x="421.5" y="160.5" width="1.5" height="3" fill="#e6ee96"/><rect x="334.5" y="169.5" width="1.5" height="1.5" fill="#9fd3a0"/><rect x="435.0" y="151.5" width="1.5" height="1.5" fill="#b5dc96"/><rect x="397.5" y="232.5" width="3" height="1.5" fill="#9fd3a0"/><rect x="412.5" y="229.5" width="3" height="3" fill="#e6ee96"/><rect x="387.0" y="130.5" width="1.5" height="3" fill="#9fd3a0"/><rect x="405.0" y="145.5" width="3" height="1.5" fill="#c3e391"/><rect x="342.0" y="172.5" width="3" height="3" fill="#b5dc96"/><rect x="403.5" y="130.5" width="1.5" height="3" fill="#a3d59c"/><rect x="409.5" y="214.5" width="3" height="3" fill="#e6ee96"/><rect x="400.5" y="225.0" width="3" height="1.5" fill="#e6ee96"/><rect x="441.0" y="193.5" width="3" height="3" fill="#a3d59c"/><rect x="343.5" y="195.0" width="1.5" height="3" fill="#c3e391"/><rect x="387.0" y="136.5" width="3" height="1.5" fill="#9fd3a0"/><rect x="423.0" y="165.0" width="1.5" height="3" fill="#9fd3a0"/><rect x="387.0" y="225.0" width="1.5" height="3" fill="#9fd3a0"/><rect x="358.5" y="144.0" width="3" height="3" fill="#a3d59c"/><rect x="396.0" y="237.0" width="3" height="1.5" fill="#9fd3a0"/><rect x="400.5" y="222.0" width="3" height="3" fill="#b5dc96"/><rect x="435.0" y="204.0" width="1.5" height="1.5" fill="#e6ee96"/><rect x="349.5" y="156.0" width="3" height="3" fill="#e6ee96"/><rect x="354.0" y="144.0" width="1.5" height="3" fill="#9fd3a0"/><rect x="349.5" y="211.5" width="1.5" height="3" fill="#c3e391"/><rect x="396.0" y="145.5" width="3" height="1.5" fill="#c9ab8c"/><rect x="394.5" y="124.5" width="3" height="3" fill="#b5dc96"/><rect x="406.5" y="216.0" width="3" height="3" fill="#9fd3a0"/><rect x="369.0" y="241.5" width="1.5" height="1.5" fill="#c3e391"/><rect x="415.5" y="226.5" width="1.5" height="1.5" fill="#a3d59c"/><rect x="411.0" y="229.5" width="1.5" height="1.5" fill="#c3e391"/><rect x="402.0" y="235.5" width="1.5" height="1.5" fill="#e6ee96"/><rect x="394.5" y="141.0" width="1.5" height="1.5" fill="#e6ee96"/><rect x="400.5" y="232.5" width="1.5" height="3" fill="#e6ee96"/><rect x="372.0" y="226.5" width="3" height="1.5" fill="#9fd3a0"/><rect x="354.0" y="165.0" width="3" height="1.5" fill="#c3e391"/><rect x="435.0" y="196.5" width="3" height="3" fill="#9fd3a0"/><rect x="348.0" y="175.5" width="3" height="3" fill="#9fd3a0"/><rect x="361.5" y="144.0" width="3" height="1.5" fill="#d2b494"/><rect x="423.0" y="217.5" width="3" height="1.5" fill="#c3e391"/><rect x="387.0" y="141.0" width="3" height="1.5" fill="#9fd3a0"/><rect x="381.0" y="237.0" width="1.5" height="3" fill="#a3d59c"/><rect x="385.5" y="126.0" width="1.5" height="3" fill="#e6ee96"/><rect x="397.5" y="241.5" width="1.5" height="3" fill="#a3d59c"/><rect x="352.5" y="145.5" width="1.5" height="1.5" fill="#c3e391"/><rect x="351.0" y="202.5" width="1.5" height="1.5" fill="#b5dc96"/><rect x="415.5" y="235.5" width="1.5" height="3" fill="#b5dc96"/><rect x="387.0" y="229.5" width="1.5" height="3" fill="#c3e391"/><rect x="370.5" y="127.5" width="3" height="3" fill="#a3d59c"/><rect x="414.0" y="220.5" width="3" height="1.5" fill="#a3d59c"/><rect x="417.0" y="153.0" width="3" height="3" fill="#9fd3a0"/><rect x="409.5" y="132.0" width="1.5" height="3" fill="#c3e391"/><rect x="421.5" y="162.0" width="1.5" height="1.5" fill="#e6ee96"/><rect x="424.5" y="141.0" width="1.5" height="3" fill="#c3e391"/><rect x="357.0" y="139.5" width="1.5" height="3" fill="#a3d59c"/><rect x="345.0" y="223.5" width="3" height="1.5" fill="#a3d59c"/><rect x="409.5" y="213.0" width="1.5" height="3" fill="#b5dc96"/><rect x="421.5" y="214.5" width="3" height="1.5" fill="#b5dc96"/><rect x="408.0" y="229.5" width="3" height="3" fill="#c3e391"/><rect x="393.0" y="123.0" width="1.5" height="3" fill="#e6ee96"/><rect x="357.0" y="228.0" width="3" height="3" fill="#9fd3a0"/><rect x="417.0" y="153.0" width="1.5" height="3" fill="#9fd3a0"/><rect x="358.5" y="141.0" width="1.5" height="1.5" fill="#a3d59c"/><rect x="376.5" y="238.5" width="3" height="1.5" fill="#b5dc96"/><rect x="408.0" y="223.5" width="1.5" height="1.5" fill="#a3d59c"/><rect x="399.0" y="142.5" width="1.5" height="1.5" fill="#e6ee96"/><rect x="414.0" y="139.5" width="1.5" height="1.5" fill="#a3d59c"/><rect x="411.0" y="232.5" width="3" height="3" fill="#c3e391"/><rect x="396.0" y="229.5" width="1.5" height="1.5" fill="#9fd3a0"/><rect x="373.5" y="225.0" width="1.5" height="1.5" fill="#c3e391"/><rect x="345.0" y="144.0" width="3" height="1.5" fill="#c3e391"/><rect x="405.0" y="232.5" width="3" height="3" fill="#b5dc96"/><rect x="430.5" y="211.5" width="1.5" height="1.5" fill="#c3e391"/><rect x="360.0" y="157.5" width="1.5" height="3" fill="#d2b494"/><rect x="336.0" y="175.5" width="1.5" height="3" fill="#b5dc96"/><rect x="424.5" y="208.5" width="3" height="3" fill="#e6ee96"/><rect x="345.0" y="186.0" width="3" height="1.5" fill="#e6ee96"/><rect x="369.0" y="240.0" width="1.5" height="3" fill="#a3d59c"/><rect x="358.5" y="141.0" width="3" height="1.5" fill="#9fd3a0"/><rect x="354.0" y="220.5" width="1.5" height="1.5" fill="#b5dc96"/><rect x="342.0" y="196.5" width="1.5" height="3" fill="#e6ee96"/><rect x="379.5" y="226.5" width="3" height="3" fill="#e6ee96"/><rect x="348.0" y="147.0" width="3" height="1.5" fill="#e6ee96"/><rect x="349.5" y="139.5" width="1.5" height="1.5" fill="#9fd3a0"/><rect x="433.5" y="175.5" width="1.5" height="1.5" fill="#a3d59c"/><rect x="381.0" y="238.5" width="3" height="1.5" fill="#c3e391"/><rect x="348.0" y="183.0" width="1.5" height="3" fill="#e6ee96"/><rect x="352.5" y="168.0" width="1.5" height="1.5" fill="#e6ee96"/><rect x="339.0" y="180.0" width="3" height="3" fill="#a3d59c"/><rect x="441.0" y="181.5" width="3" height="1.5" fill="#c3e391"/><rect x="354.0" y="199.5" width="3" height="3" fill="#9fd3a0"/><rect x="403.5" y="234.0" width="3" height="3" fill="#9fd3a0"/><rect x="376.5" y="237.0" width="1.5" height="3" fill="#a3d59c"/><rect x="385.5" y="244.5" width="3" height="1.5" fill="#e6ee96"/><rect x="382.5" y="225.0" width="1.5" height="1.5" fill="#a3d59c"/><rect x="360.0" y="232.5" width="1.5" height="1.5" fill="#a3d59c"/><rect x="367.5" y="229.5" width="1.5" height="1.5" fill="#e6ee96"/><rect x="438.0" y="168.0" width="1.5" height="1.5" fill="#c3e391"/><rect x="429.0" y="172.5" width="3" height="1.5" fill="#9fd3a0"/><rect x="426.0" y="178.5" width="3" height="3" fill="#e6ee96"/><rect x="414.0" y="232.5" width="3" height="1.5" fill="#c3e391"/><rect x="367.5" y="145.5" width="1.5" height="1.5" fill="#e6ee96"/><rect x="420.0" y="214.5" width="3" height="3" fill="#b5dc96"/><rect x="336.0" y="166.5" width="3" height="1.5" fill="#c3e391"/><rect x="408.0" y="129.0" width="3" height="1.5" fill="#b5dc96"/><rect x="357.0" y="222.0" width="1.5" height="3" fill="#9fd3a0"/><rect x="346.5" y="216.0" width="3" height="1.5" fill="#c3e391"/><rect x="343.5" y="211.5" width="3" height="1.5" fill="#b5dc96"/><rect x="345.0" y="192.0" width="3" height="1.5" fill="#e6ee96"/><rect x="397.5" y="124.5" width="3" height="3" fill="#c3e391"/><rect x="429.0" y="145.5" width="3" height="3" fill="#a3d59c"/><rect x="409.5" y="145.5" width="3" height="3" fill="#d2b494"/><rect x="435.0" y="192.0" width="1.5" height="1.5" fill="#9fd3a0"/><rect x="433.5" y="150.0" width="3" height="3" fill="#c3e391"/><rect x="367.5" y="222.0" width="1.5" height="1.5" fill="#9fd3a0"/><rect x="409.5" y="234.0" width="1.5" height="3" fill="#b5dc96"/><rect x="354.0" y="147.0" width="3" height="3" fill="#e6ee96"/><rect x="423.0" y="214.5" width="1.5" height="3" fill="#a3d59c"/><rect x="435.0" y="165.0" width="1.5" height="3" fill="#c3e391"/><rect x="399.0" y="141.0" width="1.5" height="1.5" fill="#d2b494"/><rect x="412.5" y="231.0" width="3" height="3" fill="#b5dc96"/><rect x="343.5" y="151.5" width="1.5" height="3" fill="#e6ee96"/><rect x="379.5" y="223.5" width="3" height="1.5" fill="#e6ee96"/><rect x="366.0" y="130.5" width="3" height="3" fill="#a3d59c"/><rect x="354.0" y="202.5" width="3" height="1.5" fill="#c3e391"/><rect x="441.0" y="190.5" width="3" height="3" fill="#b5dc96"/><rect x="366.0" y="234.0" width="3" height="1.5" fill="#b5dc96"/><rect x="384.0" y="229.5" width="1.5" height="1.5" fill="#a3d59c"/><rect x="439.5" y="168.0" width="1.5" height="3" fill="#e6ee96"/><rect x="346.5" y="180.0" width="1.5" height="1.5" fill="#e6ee96"/><rect x="427.5" y="177.0" width="3" height="3" fill="#b5dc96"/><rect x="334.5" y="192.0" width="1.5" height="3" fill="#9fd3a0"/><rect x="438.0" y="172.5" width="1.5" height="3" fill="#9fd3a0"/><rect x="394.5" y="225.0" width="3" height="1.5" fill="#c3e391"/><rect x="423.0" y="184.5" width="1.5" height="1.5" fill="#9fd3a0"/><rect x="409.5" y="235.5" width="1.5" height="3" fill="#a3d59c"/><rect x="430.5" y="159.0" width="1.5" height="3" fill="#a3d59c"/><rect x="412.5" y="147.0" width="1.5" height="1.5" fill="#d2b494"/><rect x="361.5" y="147.0" width="3" height="3" fill="#c9ab8c"/><rect x="358.5" y="220.5" width="1.5" height="3" fill="#e6ee96"/><rect x="412.5" y="154.5" width="3" height="1.5" fill="#d2b494"/><rect x="337.5" y="174.0" width="3" height="1.5" fill="#e6ee96"/><rect x="360.0" y="147.0" width="1.5" height="1.5" fill="#a3d59c"/><rect x="339.0" y="157.5" width="3" height="3" fill="#a3d59c"/><rect x="340.5" y="198.0" width="3" height="3" fill="#e6ee96"/><rect x="370.5" y="144.0" width="1.5" height="3" fill="#e6ee96"/><rect x="330.0" y="190.5" width="3" height="3" fill="#e6ee96"/><rect x="381.0" y="243.0" width="1.5" height="3" fill="#9fd3a0"/><rect x="387.0" y="232.5" width="1.5" height="3" fill="#a3d59c"/><rect x="360.0" y="231.0" width="3" height="1.5" fill="#9fd3a0"/><rect x="441.0" y="177.0" width="3" height="1.5" fill="#9fd3a0"/><rect x="405.0" y="136.5" width="1.5" height="3" fill="#e6ee96"/><rect x="411.0" y="153.0" width="1.5" height="3" fill="#a3d59c"/><rect x="426.0" y="145.5" width="3" height="3" fill="#e6ee96"/><rect x="354.0" y="214.5" width="3" height="3" fill="#a3d59c"/><rect x="337.5" y="159.0" width="1.5" height="3" fill="#e6ee96"/><rect x="351.0" y="222.0" width="1.5" height="1.5" fill="#9fd3a0"/><rect x="366.0" y="151.5" width="3" height="1.5" fill="#9fd3a0"/><rect x="402.0" y="127.5" width="1.5" height="1.5" fill="#b5dc96"/><rect x="390.0" y="237.0" width="1.5" height="3" fill="#c3e391"/><rect x="408.0" y="220.5" width="1.5" height="1.5" fill="#c3e391"/><rect x="397.5" y="130.5" width="1.5" height="1.5" fill="#c3e391"/><rect x="342.0" y="189.0" width="1.5" height="1.5" fill="#e6ee96"/><rect x="397.5" y="126.0" width="3" height="1.5" fill="#b5dc96"/><rect x="394.5" y="138.0" width="1.5" height="3" fill="#e6ee96"/><rect x="406.5" y="225.0" width="1.5" height="3" fill="#c3e391"/><rect x="391.5" y="133.5" width="3" height="1.5" fill="#c3e391"/><rect x="334.5" y="208.5" width="3" height="3" fill="#a3d59c"/><rect x="357.0" y="145.5" width="3" height="3" fill="#b5dc96"/><rect x="349.5" y="219.0" width="1.5" height="3" fill="#b5dc96"/><rect x="393.0" y="228.0" width="1.5" height="3" fill="#c3e391"/><rect x="444.0" y="187.5" width="3" height="1.5" fill="#9fd3a0"/><rect x="421.5" y="142.5" width="3" height="3" fill="#a3d59c"/><rect x="418.5" y="217.5" width="3" height="1.5" fill="#a3d59c"/><rect x="402.0" y="235.5" width="3" height="3" fill="#a3d59c"/><rect x="345.0" y="181.5" width="1.5" height="1.5" fill="#e6ee96"/><rect x="438.0" y="196.5" width="3" height="1.5" fill="#b5dc96"/><rect x="376.5" y="229.5" width="1.5" height="1.5" fill="#9fd3a0"/><rect x="388.5" y="136.5" width="3" height="3" fill="#d6b898"/><rect x="369.0" y="141.0" width="3" height="1.5" fill="#d6b898"/><rect x="369.0" y="139.5" width="3" height="1.5" fill="#d6b898"/><rect x="414.0" y="139.5" width="3" height="3" fill="#b89a7a"/><rect x="378.0" y="136.5" width="3" height="3" fill="#b89a7a"/><rect x="396.0" y="142.5" width="3" height="1.5" fill="#c9ab8c"/><rect x="396.0" y="141.0" width="3" height="3" fill="#c9ab8c"/><rect x="409.5" y="147.0" width="3" height="3" fill="#b89a7a"/><rect x="361.5" y="138.0" width="3" height="1.5" fill="#b89a7a"/><rect x="417.0" y="144.0" width="3" height="1.5" fill="#c9ab8c"/><rect x="349.5" y="142.5" width="3" height="3" fill="#c9ab8c"/><rect x="399.0" y="144.0" width="3" height="3" fill="#b89a7a"/><rect x="403.5" y="142.5" width="3" height="1.5" fill="#c9ab8c"/><rect x="381.0" y="145.5" width="3" height="3" fill="#c9ab8c"/><rect x="387.0" y="144.0" width="3" height="3" fill="#c9ab8c"/><rect x="396.0" y="135.0" width="3" height="1.5" fill="#b89a7a"/><path d="M346.5 156.0 L345.0 153.0 L346.5 150.0 L351.0 148.5 L351.0 144.0 L352.5 141.0 L357.0 142.5 L360.0 141.0 L363.0 142.5 L366.0 141.0 L369.0 142.5 L372.0 139.5 L375.0 141.0 L378.0 142.5 L381.0 141.0 L384.0 142.5 L387.0 141.0 L390.0 139.5 L393.0 142.5 L396.0 142.5 L399.0 141.0 L402.0 141.0 L405.0 144.0 L408.0 142.5 L409.5 144.0 L412.5 147.0 L412.5 150.0 L415.5 151.5 L417.0 154.5 L418.5 156.0 L421.5 157.5 L421.5 162.0 L424.5 163.5 L424.5 166.5 L424.5 169.5 L426.0 172.5 L427.5 175.5 L426.0 178.5 L426.0 181.5 L429.0 184.5 L429.0 187.5 L427.5 190.5 L430.5 193.5 L426.0 196.5 L429.0 199.5 L429.0 202.5 L429.0 205.5 L427.5 208.5 L424.5 211.5 L426.0 216.0 L424.5 219.0 L421.5 222.0 L421.5 225.0 L417.0 225.0 L414.0 225.0 L411.0 226.5 L408.0 225.0 L405.0 226.5 L403.5 228.0 L399.0 225.0 L396.0 228.0 L393.0 228.0 L390.0 228.0 L387.0 226.5 L384.0 226.5 L381.0 228.0 L378.0 228.0 L375.0 229.5 L372.0 226.5 L369.0 228.0 L366.0 226.5 L363.0 226.5 L360.0 226.5 L357.0 226.5 L352.5 225.0 L351.0 222.0 L351.0 219.0 L351.0 216.0 L349.5 213.0 L346.5 210.0 L348.0 207.0 L345.0 204.0 L345.0 201.0 L345.0 198.0 L346.5 195.0 L343.5 190.5 L345.0 187.5 L345.0 184.5 L345.0 181.5 L345.0 178.5 L346.5 175.5 L345.0 172.5 L345.0 168.0 L345.0 165.0 L345.0 162.0 L345.0 159.0Z" fill="#cdd8d6"/><rect x="348.5" y="164.5" width="13.9" height="26.6" rx="4.2" ry="8.0" fill="#a3c2bc" stroke="#8aaca6" stroke-width="1"/><rect x="351.9" y="171.1" width="6.3" height="10.6" rx="2.8" fill="#b4cfc9" opacity="0.55"/><rect x="363.0" y="149.8" width="21.1" height="25.5" rx="6.3" ry="7.7" fill="#9cbbb5" stroke="#8aaca6" stroke-width="1"/><rect x="368.3" y="156.2" width="9.5" height="10.2" rx="4.2" fill="#b4cfc9" opacity="0.55"/><rect x="366.1" y="177.0" width="17.0" height="15.1" rx="5.1" ry="4.5" fill="#a9c7c1" stroke="#8aaca6" stroke-width="1"/><rect x="370.3" y="180.8" width="7.7" height="6.0" rx="3.4" fill="#b4cfc9" opacity="0.55"/><rect x="387.8" y="163.4" width="23.2" height="21.3" rx="7.0" ry="6.4" fill="#98b7b1" stroke="#8aaca6" stroke-width="1"/><rect x="393.7" y="168.8" width="10.4" height="8.5" rx="4.6" fill="#b4cfc9" opacity="0.55"/><rect x="389.9" y="144.6" width="12.9" height="10.9" rx="3.9" ry="3.3" fill="#a3c2bc" stroke="#8aaca6" stroke-width="1"/><rect x="393.1" y="147.3" width="5.8" height="4.4" rx="2.6" fill="#b4cfc9" opacity="0.55"/><rect x="378.5" y="150.9" width="10.8" height="8.8" rx="3.2" ry="2.6" fill="#9cbbb5" stroke="#8aaca6" stroke-width="1"/><rect x="381.2" y="153.1" width="4.9" height="3.5" rx="2.2" fill="#b4cfc9" opacity="0.55"/><rect x="363.0" y="194.8" width="21.1" height="19.2" rx="6.3" ry="5.8" fill="#a9c7c1" stroke="#8aaca6" stroke-width="1"/><rect x="368.3" y="199.6" width="9.5" height="7.7" rx="4.2" fill="#b4cfc9" opacity="0.55"/><rect x="384.7" y="186.4" width="24.3" height="24.5" rx="7.3" ry="7.3" fill="#98b7b1" stroke="#8aaca6" stroke-width="1"/><rect x="390.8" y="192.5" width="10.9" height="9.8" rx="4.9" fill="#b4cfc9" opacity="0.55"/><rect x="411.7" y="189.6" width="13.9" height="9.8" rx="4.2" ry="2.9" fill="#a3c2bc" stroke="#8aaca6" stroke-width="1"/><rect x="415.2" y="192.0" width="6.3" height="3.9" rx="2.8" fill="#b4cfc9" opacity="0.55"/><rect x="411.7" y="200.0" width="16.0" height="13.0" rx="4.8" ry="3.9" fill="#9cbbb5" stroke="#8aaca6" stroke-width="1"/><rect x="415.7" y="203.3" width="7.2" height="5.2" rx="3.2" fill="#b4cfc9" opacity="0.55"/><rect x="348.5" y="192.7" width="12.9" height="18.2" rx="3.9" ry="5.5" fill="#a9c7c1" stroke="#8aaca6" stroke-width="1"/><rect x="351.7" y="197.3" width="5.8" height="7.3" rx="2.6" fill="#b4cfc9" opacity="0.55"/><rect x="353.6" y="213.6" width="22.2" height="13.0" rx="6.7" ry="3.9" fill="#98b7b1" stroke="#8aaca6" stroke-width="1"/><rect x="359.2" y="216.9" width="10.0" height="5.2" rx="4.4" fill="#b4cfc9" opacity="0.55"/><rect x="376.4" y="212.6" width="34.6" height="11.9" rx="10.4" ry="3.6" fill="#a3c2bc" stroke="#8aaca6" stroke-width="1"/><rect x="385.1" y="215.6" width="15.6" height="4.8" rx="6.9" fill="#b4cfc9" opacity="0.55"/><rect x="366.1" y="142.5" width="7.7" height="6.7" rx="2.3" ry="2.0" fill="#9cbbb5" stroke="#8aaca6" stroke-width="1"/><rect x="368.0" y="144.2" width="3.5" height="2.7" rx="1.5" fill="#b4cfc9" opacity="0.55"/><rect x="351.6" y="150.9" width="10.8" height="13.0" rx="3.2" ry="3.9" fill="#a9c7c1" stroke="#8aaca6" stroke-width="1"/><rect x="354.3" y="154.1" width="4.9" height="5.2" rx="2.2" fill="#b4cfc9" opacity="0.55"/><rect x="411.7" y="168.6" width="9.7" height="18.2" rx="2.9" ry="5.5" fill="#98b7b1" stroke="#8aaca6" stroke-width="1"/><rect x="414.1" y="173.2" width="4.4" height="7.3" rx="1.9" fill="#b4cfc9" opacity="0.55"/><rect x="404.4" y="145.6" width="6.6" height="13.0" rx="2.0" ry="3.9" fill="#a3c2bc" stroke="#8aaca6" stroke-width="1"/><rect x="406.1" y="148.9" width="3.0" height="5.2" rx="1.3" fill="#b4cfc9" opacity="0.55"/><rect x="384.7" y="142.5" width="4.6" height="6.7" rx="1.4" ry="2.0" fill="#9cbbb5" stroke="#8aaca6" stroke-width="1"/><rect x="385.9" y="144.2" width="2.1" height="2.7" rx="0.9" fill="#b4cfc9" opacity="0.55"/><rect x="678.0" y="445.5" width="1.5" height="3" fill="#b5dc96"/><rect x="586.5" y="495.0" width="1.5" height="3" fill="#a3d59c"/><rect x="589.5" y="487.5" width="1.5" height="1.5" fill="#c3e391"/><rect x="672.0" y="499.5" width="1.5" height="3" fill="#c3e391"/><rect x="604.5" y="502.5" width="3" height="1.5" fill="#b5dc96"/><rect x="588.0" y="432.0" width="3" height="3" fill="#9fd3a0"/><rect x="606.0" y="435.0" width="3" height="1.5" fill="#b5dc96"/><rect x="618.0" y="423.0" width="1.5" height="1.5" fill="#c3e391"/><rect x="642.0" y="424.5" width="1.5" height="1.5" fill="#e6ee96"/><rect x="667.5" y="496.5" width="3" height="3" fill="#e6ee96"/><rect x="646.5" y="432.0" width="3" height="3" fill="#9fd3a0"/><rect x="663.0" y="442.5" width="3" height="1.5" fill="#a3d59c"/><rect x="669.0" y="507.0" width="1.5" height="3" fill="#c3e391"/><rect x="574.5" y="456.0" width="1.5" height="3" fill="#e6ee96"/><rect x="655.5" y="523.5" width="3" height="3" fill="#b5dc96"/><rect x="679.5" y="480.0" width="1.5" height="1.5" fill="#b5dc96"/><rect x="573.0" y="457.5" width="3" height="1.5" fill="#b5dc96"/><rect x="670.5" y="465.0" width="1.5" height="1.5" fill="#a3d59c"/><rect x="624.0" y="522.0" width="3" height="1.5" fill="#c3e391"/><rect x="667.5" y="499.5" width="1.5" height="3" fill="#a3d59c"/><rect x="660.0" y="496.5" width="3" height="3" fill="#b5dc96"/><rect x="603.0" y="433.5" width="3" height="1.5" fill="#a3d59c"/><rect x="609.0" y="420.0" width="3" height="3" fill="#a3d59c"/><rect x="583.5" y="502.5" width="1.5" height="3" fill="#e6ee96"/><rect x="666.0" y="505.5" width="3" height="1.5" fill="#9fd3a0"/><rect x="652.5" y="517.5" width="1.5" height="1.5" fill="#9fd3a0"/><rect x="670.5" y="433.5" width="3" height="1.5" fill="#c3e391"/><rect x="609.0" y="505.5" width="3" height="1.5" fill="#a3d59c"/><rect x="637.5" y="435.0" width="3" height="3" fill="#c9ab8c"/><rect x="670.5" y="459.0" width="3" height="1.5" fill="#9fd3a0"/><rect x="586.5" y="465.0" width="1.5" height="1.5" fill="#b5dc96"/><rect x="658.5" y="435.0" width="1.5" height="3" fill="#d2b494"/><rect x="595.5" y="445.5" width="3" height="3" fill="#9fd3a0"/><rect x="642.0" y="430.5" width="1.5" height="3" fill="#9fd3a0"/><rect x="681.0" y="487.5" width="3" height="3" fill="#c3e391"/><rect x="612.0" y="429.0" width="1.5" height="3" fill="#9fd3a0"/><rect x="663.0" y="504.0" width="3" height="3" fill="#b5dc96"/><rect x="664.5" y="474.0" width="1.5" height="3" fill="#b5dc96"/><rect x="679.5" y="487.5" width="1.5" height="3" fill="#9fd3a0"/><rect x="583.5" y="451.5" width="1.5" height="3" fill="#b5dc96"/><rect x="595.5" y="442.5" width="1.5" height="1.5" fill="#b5dc96"/><rect x="682.5" y="463.5" width="1.5" height="1.5" fill="#a3d59c"/><rect x="598.5" y="445.5" width="3" height="3" fill="#c9ab8c"/><rect x="661.5" y="445.5" width="1.5" height="1.5" fill="#d2b494"/><rect x="589.5" y="442.5" width="1.5" height="1.5" fill="#9fd3a0"/><rect x="604.5" y="505.5" width="1.5" height="3" fill="#a3d59c"/><rect x="679.5" y="469.5" width="3" height="3" fill="#a3d59c"/><rect x="588.0" y="463.5" width="3" height="3" fill="#e6ee96"/><rect x="670.5" y="433.5" width="3" height="3" fill="#a3d59c"/><rect x="670.5" y="468.0" width="3" height="3" fill="#b5dc96"/><rect x="604.5" y="507.0" width="1.5" height="1.5" fill="#e6ee96"/><rect x="610.5" y="516.0" width="3" height="3" fill="#b5dc96"/><rect x="589.5" y="480.0" width="3" height="1.5" fill="#c3e391"/><rect x="663.0" y="462.0" width="3" height="1.5" fill="#9fd3a0"/><rect x="592.5" y="499.5" width="1.5" height="3" fill="#c3e391"/><rect x="643.5" y="433.5" width="1.5" height="3" fill="#c3e391"/><rect x="673.5" y="466.5" width="3" height="3" fill="#b5dc96"/><rect x="627.0" y="526.5" width="3" height="3" fill="#c3e391"/><rect x="678.0" y="463.5" width="1.5" height="1.5" fill="#9fd3a0"/><rect x="598.5" y="448.5" width="3" height="1.5" fill="#e6ee96"/><rect x="667.5" y="451.5" width="3" height="1.5" fill="#a3d59c"/><rect x="591.0" y="435.0" width="1.5" height="1.5" fill="#e6ee96"/><rect x="658.5" y="427.5" width="3" height="3" fill="#9fd3a0"/><rect x="579.0" y="496.5" width="3" height="3" fill="#e6ee96"/><rect x="663.0" y="463.5" width="1.5" height="1.5" fill="#e6ee96"/><rect x="607.5" y="418.5" width="3" height="3" fill="#b5dc96"/><rect x="669.0" y="508.5" width="1.5" height="1.5" fill="#b5dc96"/><rect x="618.0" y="414.0" width="3" height="3" fill="#b5dc96"/><rect x="585.0" y="459.0" width="1.5" height="1.5" fill="#b5dc96"/><rect x="607.5" y="438.0" width="1.5" height="3" fill="#d2b494"/><rect x="673.5" y="492.0" width="3" height="1.5" fill="#a3d59c"/><rect x="592.5" y="445.5" width="3" height="1.5" fill="#b5dc96"/><rect x="603.0" y="441.0" width="1.5" height="3" fill="#d2b494"/><rect x="594.0" y="426.0" width="3" height="1.5" fill="#e6ee96"/><rect x="651.0" y="441.0" width="3" height="1.5" fill="#9fd3a0"/><rect x="648.0" y="435.0" width="1.5" height="1.5" fill="#d2b494"/><rect x="657.0" y="519.0" width="3" height="1.5" fill="#b5dc96"/><rect x="645.0" y="426.0" width="1.5" height="1.5" fill="#e6ee96"/><rect x="622.5" y="523.5" width="1.5" height="1.5" fill="#e6ee96"/><rect x="585.0" y="469.5" width="3" height="3" fill="#a3d59c"/><rect x="633.0" y="432.0" width="1.5" height="3" fill="#a3d59c"/><rect x="597.0" y="438.0" width="1.5" height="1.5" fill="#a3d59c"/><rect x="603.0" y="516.0" width="1.5" height="1.5" fill="#b5dc96"/><rect x="667.5" y="492.0" width="1.5" height="3" fill="#b5dc96"/><rect x="643.5" y="435.0" width="3" height="1.5" fill="#9fd3a0"/><rect x="577.5" y="484.5" width="3" height="1.5" fill="#9fd3a0"/><rect x="645.0" y="417.0" width="3" height="3" fill="#b5dc96"/><rect x="591.0" y="510.0" width="1.5" height="1.5" fill="#a3d59c"/><rect x="682.5" y="486.0" width="1.5" height="1.5" fill="#9fd3a0"/><rect x="657.0" y="430.5" width="3" height="1.5" fill="#9fd3a0"/><rect x="595.5" y="495.0" width="3" height="1.5" fill="#9fd3a0"/><rect x="592.5" y="445.5" width="1.5" height="1.5" fill="#9fd3a0"/><rect x="669.0" y="438.0" width="1.5" height="3" fill="#e6ee96"/><rect x="577.5" y="480.0" width="3" height="1.5" fill="#b5dc96"/><rect x="622.5" y="513.0" width="1.5" height="3" fill="#e6ee96"/><rect x="579.0" y="498.0" width="1.5" height="3" fill="#a3d59c"/><rect x="625.5" y="531.0" width="1.5" height="1.5" fill="#a3d59c"/><rect x="585.0" y="475.5" width="3" height="3" fill="#c3e391"/><rect x="582.0" y="459.0" width="3" height="3" fill="#b5dc96"/><rect x="585.0" y="442.5" width="1.5" height="1.5" fill="#b5dc96"/><rect x="657.0" y="499.5" width="3" height="1.5" fill="#c3e391"/><rect x="604.5" y="504.0" width="3" height="3" fill="#9fd3a0"/><rect x="582.0" y="448.5" width="1.5" height="3" fill="#c3e391"/><rect x="670.5" y="441.0" width="1.5" height="1.5" fill="#9fd3a0"/><rect x="621.0" y="417.0" width="3" height="1.5" fill="#c3e391"/><rect x="654.0" y="499.5" width="3" height="1.5" fill="#9fd3a0"/><rect x="591.0" y="462.0" width="1.5" height="3" fill="#a3d59c"/><rect x="663.0" y="438.0" width="3" height="3" fill="#b5dc96"/><rect x="583.5" y="444.0" width="3" height="3" fill="#9fd3a0"/><rect x="589.5" y="466.5" width="3" height="3" fill="#e6ee96"/><rect x="637.5" y="433.5" width="3" height="1.5" fill="#a3d59c"/><rect x="654.0" y="442.5" width="3" height="1.5" fill="#c9ab8c"/><rect x="622.5" y="528.0" width="1.5" height="1.5" fill="#a3d59c"/><rect x="601.5" y="438.0" width="3" height="1.5" fill="#a3d59c"/><rect x="670.5" y="462.0" width="1.5" height="1.5" fill="#a3d59c"/><rect x="660.0" y="489.0" width="3" height="1.5" fill="#a3d59c"/><rect x="625.5" y="433.5" width="3" height="3" fill="#c3e391"/><rect x="664.5" y="433.5" width="3" height="1.5" fill="#a3d59c"/><rect x="633.0" y="432.0" width="1.5" height="1.5" fill="#b5dc96"/><rect x="672.0" y="510.0" width="1.5" height="3" fill="#a3d59c"/><rect x="582.0" y="463.5" width="1.5" height="1.5" fill="#e6ee96"/><rect x="591.0" y="459.0" width="3" height="1.5" fill="#9fd3a0"/><rect x="591.0" y="454.5" width="1.5" height="3" fill="#e6ee96"/><rect x="630.0" y="414.0" width="1.5" height="3" fill="#e6ee96"/><rect x="601.5" y="504.0" width="3" height="3" fill="#9fd3a0"/><rect x="613.5" y="525.0" width="1.5" height="1.5" fill="#c3e391"/><rect x="679.5" y="492.0" width="3" height="3" fill="#c3e391"/><rect x="661.5" y="448.5" width="1.5" height="1.5" fill="#b5dc96"/><rect x="643.5" y="523.5" width="1.5" height="3" fill="#e6ee96"/><rect x="594.0" y="456.0" width="1.5" height="3" fill="#9fd3a0"/><rect x="648.0" y="427.5" width="1.5" height="3" fill="#a3d59c"/><rect x="642.0" y="433.5" width="3" height="1.5" fill="#c9ab8c"/><rect x="612.0" y="415.5" width="3" height="1.5" fill="#e6ee96"/><rect x="639.0" y="511.5" width="1.5" height="3" fill="#a3d59c"/><rect x="624.0" y="414.0" width="1.5" height="3" fill="#c3e391"/><rect x="667.5" y="478.5" width="3" height="1.5" fill="#e6ee96"/><rect x="579.0" y="447.0" width="3" height="1.5" fill="#a3d59c"/><rect x="586.5" y="448.5" width="1.5" height="1.5" fill="#c3e391"/><rect x="645.0" y="420.0" width="3" height="1.5" fill="#c3e391"/><rect x="663.0" y="499.5" width="3" height="3" fill="#e6ee96"/><rect x="663.0" y="495.0" width="1.5" height="3" fill="#9fd3a0"/><rect x="601.5" y="523.5" width="3" height="3" fill="#b5dc96"/><rect x="613.5" y="528.0" width="1.5" height="1.5" fill="#a3d59c"/><rect x="646.5" y="505.5" width="3" height="1.5" fill="#b5dc96"/><rect x="636.0" y="522.0" width="3" height="1.5" fill="#a3d59c"/><rect x="604.5" y="510.0" width="1.5" height="3" fill="#b5dc96"/><rect x="604.5" y="516.0" width="1.5" height="3" fill="#c3e391"/><rect x="628.5" y="432.0" width="3" height="1.5" fill="#c9ab8c"/><rect x="649.5" y="522.0" width="3" height="1.5" fill="#c3e391"/><rect x="597.0" y="447.0" width="3" height="3" fill="#e6ee96"/><rect x="591.0" y="445.5" width="1.5" height="3" fill="#d2b494"/><rect x="666.0" y="475.5" width="1.5" height="1.5" fill="#b5dc96"/><rect x="613.5" y="522.0" width="3" height="1.5" fill="#b5dc96"/><rect x="679.5" y="472.5" width="3" height="3" fill="#c3e391"/><rect x="633.0" y="429.0" width="1.5" height="3" fill="#9fd3a0"/><rect x="654.0" y="510.0" width="3" height="1.5" fill="#9fd3a0"/><rect x="661.5" y="511.5" width="1.5" height="3" fill="#c3e391"/><rect x="666.0" y="450.0" width="1.5" height="1.5" fill="#c3e391"/><rect x="618.0" y="436.5" width="1.5" height="1.5" fill="#9fd3a0"/><rect x="592.5" y="456.0" width="3" height="3" fill="#e6ee96"/><rect x="664.5" y="505.5" width="3" height="1.5" fill="#c3e391"/><rect x="576.0" y="474.0" width="3" height="3" fill="#c3e391"/><rect x="624.0" y="415.5" width="3" height="3" fill="#c3e391"/><rect x="664.5" y="465.0" width="1.5" height="1.5" fill="#c3e391"/><rect x="595.5" y="517.5" width="3" height="1.5" fill="#b5dc96"/><rect x="652.5" y="430.5" width="1.5" height="3" fill="#e6ee96"/><rect x="643.5" y="520.5" width="3" height="1.5" fill="#9fd3a0"/><rect x="640.5" y="418.5" width="1.5" height="1.5" fill="#9fd3a0"/><rect x="615.0" y="508.5" width="1.5" height="1.5" fill="#e6ee96"/><rect x="666.0" y="477.0" width="3" height="1.5" fill="#e6ee96"/><rect x="583.5" y="472.5" width="3" height="3" fill="#c3e391"/><rect x="648.0" y="432.0" width="1.5" height="1.5" fill="#e6ee96"/><rect x="591.0" y="463.5" width="3" height="1.5" fill="#e6ee96"/><rect x="640.5" y="513.0" width="1.5" height="3" fill="#c3e391"/><rect x="586.5" y="471.0" width="1.5" height="1.5" fill="#b5dc96"/><rect x="646.5" y="433.5" width="3" height="3" fill="#c3e391"/><rect x="676.5" y="463.5" width="1.5" height="1.5" fill="#9fd3a0"/><rect x="630.0" y="423.0" width="1.5" height="1.5" fill="#c3e391"/><rect x="673.5" y="453.0" width="1.5" height="1.5" fill="#c3e391"/><rect x="583.5" y="462.0" width="1.5" height="3" fill="#a3d59c"/><rect x="592.5" y="480.0" width="3" height="1.5" fill="#9fd3a0"/><rect x="585.0" y="474.0" width="3" height="1.5" fill="#b5dc96"/><rect x="619.5" y="514.5" width="3" height="1.5" fill="#e6ee96"/><rect x="679.5" y="492.0" width="1.5" height="1.5" fill="#a3d59c"/><rect x="603.0" y="423.0" width="3" height="3" fill="#c3e391"/><rect x="592.5" y="481.5" width="1.5" height="3" fill="#b5dc96"/><rect x="595.5" y="445.5" width="1.5" height="3" fill="#a3d59c"/><rect x="606.0" y="525.0" width="1.5" height="3" fill="#b5dc96"/><rect x="586.5" y="441.0" width="1.5" height="1.5" fill="#e6ee96"/><rect x="630.0" y="429.0" width="1.5" height="1.5" fill="#d2b494"/><rect x="583.5" y="504.0" width="3" height="3" fill="#a3d59c"/><rect x="598.5" y="427.5" width="3" height="3" fill="#9fd3a0"/><rect x="606.0" y="510.0" width="3" height="1.5" fill="#a3d59c"/><rect x="667.5" y="435.0" width="1.5" height="1.5" fill="#c3e391"/><rect x="658.5" y="433.5" width="1.5" height="1.5" fill="#c3e391"/><rect x="613.5" y="433.5" width="3" height="3" fill="#a3d59c"/><rect x="657.0" y="438.0" width="3" height="3" fill="#c9ab8c"/><rect x="591.0" y="448.5" width="3" height="3" fill="#d2b494"/><rect x="603.0" y="510.0" width="3" height="1.5" fill="#b5dc96"/><rect x="601.5" y="508.5" width="3" height="1.5" fill="#b5dc96"/><rect x="672.0" y="444.0" width="3" height="3" fill="#c3e391"/><rect x="619.5" y="531.0" width="1.5" height="1.5" fill="#e6ee96"/><rect x="628.5" y="430.5" width="3" height="3" fill="#d2b494"/><rect x="655.5" y="442.5" width="3" height="3" fill="#e6ee96"/><rect x="588.0" y="505.5" width="3" height="1.5" fill="#e6ee96"/><rect x="679.5" y="486.0" width="1.5" height="3" fill="#b5dc96"/><rect x="682.5" y="459.0" width="3" height="3" fill="#a3d59c"/><rect x="585.0" y="490.5" width="1.5" height="1.5" fill="#a3d59c"/><rect x="631.5" y="513.0" width="1.5" height="3" fill="#9fd3a0"/><rect x="679.5" y="478.5" width="1.5" height="3" fill="#e6ee96"/><rect x="675.0" y="468.0" width="3" height="3" fill="#b5dc96"/><rect x="582.0" y="493.5" width="1.5" height="1.5" fill="#e6ee96"/><rect x="658.5" y="501.0" width="1.5" height="3" fill="#e6ee96"/><rect x="586.5" y="460.5" width="1.5" height="3" fill="#9fd3a0"/><rect x="679.5" y="475.5" width="1.5" height="3" fill="#e6ee96"/><rect x="604.5" y="442.5" width="1.5" height="3" fill="#a3d59c"/><rect x="654.0" y="436.5" width="3" height="3" fill="#c9ab8c"/><rect x="591.0" y="435.0" width="3" height="3" fill="#9fd3a0"/><rect x="627.0" y="516.0" width="1.5" height="1.5" fill="#e6ee96"/><rect x="603.0" y="511.5" width="1.5" height="1.5" fill="#a3d59c"/><rect x="655.5" y="516.0" width="3" height="3" fill="#a3d59c"/><rect x="673.5" y="496.5" width="3" height="3" fill="#a3d59c"/><rect x="652.5" y="442.5" width="1.5" height="1.5" fill="#9fd3a0"/><rect x="595.5" y="502.5" width="1.5" height="1.5" fill="#e6ee96"/><rect x="604.5" y="444.0" width="1.5" height="1.5" fill="#e6ee96"/><rect x="583.5" y="495.0" width="3" height="1.5" fill="#a3d59c"/><rect x="592.5" y="483.0" width="3" height="1.5" fill="#c3e391"/><rect x="576.0" y="493.5" width="1.5" height="3" fill="#c3e391"/><rect x="663.0" y="447.0" width="1.5" height="1.5" fill="#b5dc96"/><rect x="672.0" y="474.0" width="1.5" height="3" fill="#a3d59c"/><rect x="606.0" y="418.5" width="3" height="3" fill="#9fd3a0"/><rect x="630.0" y="516.0" width="1.5" height="1.5" fill="#e6ee96"/><rect x="592.5" y="465.0" width="3" height="3" fill="#e6ee96"/><rect x="585.0" y="435.0" width="1.5" height="1.5" fill="#a3d59c"/><rect x="666.0" y="508.5" width="1.5" height="1.5" fill="#b5dc96"/><rect x="645.0" y="522.0" width="1.5" height="1.5" fill="#e6ee96"/><rect x="663.0" y="460.5" width="3" height="1.5" fill="#a3d59c"/><rect x="643.5" y="418.5" width="3" height="1.5" fill="#9fd3a0"/><rect x="666.0" y="480.0" width="3" height="3" fill="#9fd3a0"/><rect x="585.0" y="460.5" width="1.5" height="3" fill="#9fd3a0"/><rect x="679.5" y="454.5" width="3" height="3" fill="#e6ee96"/><rect x="660.0" y="517.5" width="3" height="1.5" fill="#e6ee96"/><rect x="606.0" y="517.5" width="3" height="3" fill="#b5dc96"/><rect x="631.5" y="426.0" width="1.5" height="3" fill="#c3e391"/><rect x="663.0" y="478.5" width="1.5" height="1.5" fill="#b5dc96"/><rect x="679.5" y="477.0" width="3" height="1.5" fill="#c3e391"/><rect x="582.0" y="483.0" width="3" height="1.5" fill="#9fd3a0"/><rect x="675.0" y="474.0" width="1.5" height="1.5" fill="#e6ee96"/><rect x="630.0" y="511.5" width="1.5" height="3" fill="#b5dc96"/><rect x="663.0" y="463.5" width="3" height="3" fill="#e6ee96"/><rect x="666.0" y="489.0" width="3" height="1.5" fill="#c3e391"/><rect x="594.0" y="457.5" width="1.5" height="1.5" fill="#b5dc96"/><rect x="664.5" y="427.5" width="3" height="3" fill="#e6ee96"/><rect x="651.0" y="429.0" width="3" height="3" fill="#e6ee96"/><rect x="651.0" y="423.0" width="3" height="1.5" fill="#b5dc96"/><rect x="637.5" y="520.5" width="1.5" height="1.5" fill="#c3e391"/><rect x="655.5" y="502.5" width="1.5" height="3" fill="#a3d59c"/><rect x="655.5" y="511.5" width="3" height="3" fill="#9fd3a0"/><rect x="607.5" y="420.0" width="3" height="1.5" fill="#e6ee96"/><rect x="603.0" y="510.0" width="1.5" height="3" fill="#a3d59c"/><rect x="627.0" y="436.5" width="3" height="1.5" fill="#b89a7a"/><rect x="639.0" y="438.0" width="3" height="3" fill="#d6b898"/><rect x="658.5" y="430.5" width="3" height="1.5" fill="#b89a7a"/><rect x="642.0" y="433.5" width="3" height="3" fill="#d6b898"/><rect x="637.5" y="432.0" width="3" height="3" fill="#b89a7a"/><rect x="639.0" y="429.0" width="3" height="3" fill="#d6b898"/><rect x="645.0" y="430.5" width="3" height="3" fill="#d6b898"/><rect x="621.0" y="424.5" width="3" height="1.5" fill="#d6b898"/><rect x="607.5" y="433.5" width="3" height="1.5" fill="#d6b898"/><rect x="607.5" y="429.0" width="3" height="1.5" fill="#b89a7a"/><rect x="642.0" y="433.5" width="3" height="1.5" fill="#c9ab8c"/><rect x="654.0" y="424.5" width="3" height="3" fill="#d6b898"/><rect x="646.5" y="438.0" width="3" height="1.5" fill="#b89a7a"/><rect x="655.5" y="429.0" width="3" height="1.5" fill="#b89a7a"/><rect x="601.5" y="430.5" width="3" height="1.5" fill="#c9ab8c"/><rect x="592.5" y="429.0" width="3" height="3" fill="#b89a7a"/><path d="M588.0 445.5 L589.5 444.0 L589.5 439.5 L594.0 438.0 L592.5 433.5 L595.5 433.5 L598.5 430.5 L601.5 432.0 L604.5 430.5 L607.5 432.0 L610.5 432.0 L613.5 432.0 L616.5 430.5 L619.5 432.0 L622.5 432.0 L625.5 429.0 L630.0 430.5 L633.0 432.0 L636.0 432.0 L639.0 432.0 L642.0 430.5 L645.0 433.5 L649.5 430.5 L651.0 433.5 L652.5 436.5 L657.0 438.0 L658.5 441.0 L660.0 444.0 L661.5 447.0 L664.5 450.0 L664.5 453.0 L664.5 456.0 L667.5 459.0 L666.0 462.0 L669.0 465.0 L669.0 468.0 L667.5 472.5 L667.5 475.5 L667.5 478.5 L667.5 481.5 L667.5 484.5 L670.5 487.5 L669.0 492.0 L669.0 493.5 L670.5 498.0 L667.5 501.0 L667.5 504.0 L666.0 507.0 L663.0 510.0 L661.5 511.5 L658.5 511.5 L655.5 514.5 L652.5 514.5 L649.5 513.0 L646.5 513.0 L643.5 514.5 L640.5 516.0 L637.5 514.5 L634.5 517.5 L631.5 516.0 L628.5 516.0 L625.5 517.5 L622.5 516.0 L619.5 516.0 L616.5 516.0 L613.5 514.5 L610.5 516.0 L607.5 516.0 L604.5 514.5 L601.5 514.5 L598.5 511.5 L594.0 513.0 L594.0 510.0 L591.0 507.0 L592.5 504.0 L591.0 501.0 L589.5 498.0 L589.5 495.0 L586.5 493.5 L589.5 489.0 L586.5 486.0 L588.0 483.0 L586.5 480.0 L586.5 477.0 L586.5 474.0 L586.5 471.0 L585.0 468.0 L586.5 465.0 L586.5 460.5 L586.5 457.5 L588.0 454.5 L588.0 451.5 L588.0 448.5Z" fill="#cdd8d6"/><rect x="590.4" y="453.9" width="13.7" height="26.0" rx="4.1" ry="7.8" fill="#a3c2bc" stroke="#8aaca6" stroke-width="1"/><rect x="593.8" y="460.4" width="6.2" height="10.4" rx="2.7" fill="#b4cfc9" opacity="0.55"/><rect x="604.7" y="439.6" width="20.9" height="25.0" rx="6.3" ry="7.5" fill="#9cbbb5" stroke="#8aaca6" stroke-width="1"/><rect x="610.0" y="445.8" width="9.4" height="10.0" rx="4.2" fill="#b4cfc9" opacity="0.55"/><rect x="607.8" y="466.2" width="16.8" height="14.7" rx="5.0" ry="4.4" fill="#a9c7c1" stroke="#8aaca6" stroke-width="1"/><rect x="612.0" y="469.8" width="7.6" height="5.9" rx="3.4" fill="#b4cfc9" opacity="0.55"/><rect x="629.3" y="452.9" width="22.9" height="20.9" rx="6.9" ry="6.3" fill="#98b7b1" stroke="#8aaca6" stroke-width="1"/><rect x="635.1" y="458.1" width="10.3" height="8.3" rx="4.6" fill="#b4cfc9" opacity="0.55"/><rect x="631.4" y="434.4" width="12.7" height="10.6" rx="3.8" ry="3.2" fill="#a3c2bc" stroke="#8aaca6" stroke-width="1"/><rect x="634.6" y="437.1" width="5.7" height="4.3" rx="2.5" fill="#b4cfc9" opacity="0.55"/><rect x="620.1" y="440.6" width="10.7" height="8.6" rx="3.2" ry="2.6" fill="#9cbbb5" stroke="#8aaca6" stroke-width="1"/><rect x="622.8" y="442.7" width="4.8" height="3.4" rx="2.1" fill="#b4cfc9" opacity="0.55"/><rect x="604.7" y="483.5" width="20.9" height="18.8" rx="6.3" ry="5.6" fill="#a9c7c1" stroke="#8aaca6" stroke-width="1"/><rect x="610.0" y="488.3" width="9.4" height="7.5" rx="4.2" fill="#b4cfc9" opacity="0.55"/><rect x="626.3" y="475.4" width="24.0" height="23.9" rx="7.2" ry="7.2" fill="#98b7b1" stroke="#8aaca6" stroke-width="1"/><rect x="632.3" y="481.3" width="10.8" height="9.6" rx="4.8" fill="#b4cfc9" opacity="0.55"/><rect x="652.9" y="478.4" width="13.7" height="9.6" rx="4.1" ry="2.9" fill="#a3c2bc" stroke="#8aaca6" stroke-width="1"/><rect x="656.3" y="480.8" width="6.2" height="3.8" rx="2.7" fill="#b4cfc9" opacity="0.55"/><rect x="652.9" y="488.7" width="15.8" height="12.7" rx="4.7" ry="3.8" fill="#9cbbb5" stroke="#8aaca6" stroke-width="1"/><rect x="656.8" y="491.8" width="7.1" height="5.1" rx="3.2" fill="#b4cfc9" opacity="0.55"/><rect x="590.4" y="481.5" width="12.7" height="17.8" rx="3.8" ry="5.3" fill="#a9c7c1" stroke="#8aaca6" stroke-width="1"/><rect x="593.6" y="486.0" width="5.7" height="7.1" rx="2.5" fill="#b4cfc9" opacity="0.55"/><rect x="595.5" y="502.0" width="21.9" height="12.7" rx="6.6" ry="3.8" fill="#98b7b1" stroke="#8aaca6" stroke-width="1"/><rect x="601.0" y="505.1" width="9.9" height="5.1" rx="4.4" fill="#b4cfc9" opacity="0.55"/><rect x="618.1" y="500.9" width="34.2" height="11.7" rx="10.3" ry="3.5" fill="#a3c2bc" stroke="#8aaca6" stroke-width="1"/><rect x="626.6" y="503.9" width="15.4" height="4.7" rx="6.8" fill="#b4cfc9" opacity="0.55"/><rect x="607.8" y="432.4" width="7.6" height="6.5" rx="2.3" ry="2.0" fill="#9cbbb5" stroke="#8aaca6" stroke-width="1"/><rect x="609.7" y="434.0" width="3.4" height="2.6" rx="1.5" fill="#b4cfc9" opacity="0.55"/><rect x="593.5" y="440.6" width="10.7" height="12.7" rx="3.2" ry="3.8" fill="#a9c7c1" stroke="#8aaca6" stroke-width="1"/><rect x="596.1" y="443.8" width="4.8" height="5.1" rx="2.1" fill="#b4cfc9" opacity="0.55"/><rect x="652.9" y="458.0" width="9.6" height="17.8" rx="2.9" ry="5.3" fill="#98b7b1" stroke="#8aaca6" stroke-width="1"/><rect x="655.3" y="462.4" width="4.3" height="7.1" rx="1.9" fill="#b4cfc9" opacity="0.55"/><rect x="645.7" y="435.5" width="6.6" height="12.7" rx="2.0" ry="3.8" fill="#a3c2bc" stroke="#8aaca6" stroke-width="1"/><rect x="647.4" y="438.6" width="3.0" height="5.1" rx="1.3" fill="#b4cfc9" opacity="0.55"/><rect x="626.3" y="432.4" width="4.5" height="6.5" rx="1.4" ry="2.0" fill="#9cbbb5" stroke="#8aaca6" stroke-width="1"/><rect x="627.4" y="434.0" width="2.0" height="2.6" rx="0.9" fill="#b4cfc9" opacity="0.55"/><rect x="301.5" y="562.5" width="1.5" height="3" fill="#b5dc96"/><rect x="316.5" y="492.0" width="3" height="1.5" fill="#d2b494"/><rect x="325.5" y="565.5" width="1.5" height="1.5" fill="#e6ee96"/><rect x="289.5" y="516.0" width="3" height="1.5" fill="#e6ee96"/><rect x="297.0" y="505.5" width="1.5" height="1.5" fill="#e6ee96"/><rect x="306.0" y="493.5" width="1.5" height="1.5" fill="#9fd3a0"/><rect x="313.5" y="493.5" width="1.5" height="1.5" fill="#c3e391"/><rect x="333.0" y="462.0" width="1.5" height="1.5" fill="#e6ee96"/><rect x="355.5" y="481.5" width="3" height="3" fill="#c3e391"/><rect x="355.5" y="472.5" width="3" height="1.5" fill="#c3e391"/><rect x="358.5" y="477.0" width="1.5" height="3" fill="#a3d59c"/><rect x="360.0" y="480.0" width="1.5" height="3" fill="#c3e391"/><rect x="381.0" y="502.5" width="3" height="1.5" fill="#e6ee96"/><rect x="360.0" y="486.0" width="1.5" height="1.5" fill="#a3d59c"/><rect x="346.5" y="562.5" width="1.5" height="1.5" fill="#9fd3a0"/><rect x="304.5" y="478.5" width="3" height="3" fill="#e6ee96"/><rect x="325.5" y="567.0" width="3" height="3" fill="#c3e391"/><rect x="300.0" y="535.5" width="3" height="3" fill="#b5dc96"/><rect x="325.5" y="556.5" width="1.5" height="1.5" fill="#e6ee96"/><rect x="361.5" y="568.5" width="1.5" height="3" fill="#e6ee96"/><rect x="310.5" y="499.5" width="1.5" height="1.5" fill="#e6ee96"/><rect x="333.0" y="580.5" width="3" height="1.5" fill="#e6ee96"/><rect x="379.5" y="553.5" width="1.5" height="3" fill="#e6ee96"/><rect x="378.0" y="564.0" width="1.5" height="1.5" fill="#e6ee96"/><rect x="388.5" y="510.0" width="1.5" height="1.5" fill="#a3d59c"/><rect x="313.5" y="495.0" width="1.5" height="1.5" fill="#c9ab8c"/><rect x="336.0" y="574.5" width="3" height="1.5" fill="#b5dc96"/><rect x="300.0" y="532.5" width="3" height="3" fill="#9fd3a0"/><rect x="331.5" y="577.5" width="3" height="1.5" fill="#9fd3a0"/><rect x="306.0" y="517.5" width="1.5" height="1.5" fill="#9fd3a0"/><rect x="315.0" y="562.5" width="1.5" height="3" fill="#b5dc96"/><rect x="291.0" y="538.5" width="3" height="3" fill="#b5dc96"/><rect x="319.5" y="574.5" width="3" height="3" fill="#a3d59c"/><rect x="372.0" y="538.5" width="1.5" height="3" fill="#b5dc96"/><rect x="303.0" y="516.0" width="1.5" height="3" fill="#a3d59c"/><rect x="328.5" y="570.0" width="1.5" height="3" fill="#b5dc96"/><rect x="376.5" y="517.5" width="1.5" height="1.5" fill="#e6ee96"/><rect x="327.0" y="468.0" width="1.5" height="1.5" fill="#c3e391"/><rect x="352.5" y="480.0" width="3" height="1.5" fill="#b5dc96"/><rect x="342.0" y="465.0" width="1.5" height="3" fill="#9fd3a0"/><rect x="324.0" y="472.5" width="1.5" height="3" fill="#b5dc96"/><rect x="333.0" y="472.5" width="1.5" height="1.5" fill="#e6ee96"/><rect x="378.0" y="543.0" width="1.5" height="1.5" fill="#c3e391"/><rect x="301.5" y="558.0" width="1.5" height="3" fill="#a3d59c"/><rect x="297.0" y="528.0" width="1.5" height="3" fill="#a3d59c"/><rect x="307.5" y="549.0" width="1.5" height="1.5" fill="#9fd3a0"/><rect x="309.0" y="538.5" width="1.5" height="1.5" fill="#c3e391"/><rect x="316.5" y="561.0" width="3" height="1.5" fill="#c3e391"/><rect x="366.0" y="489.0" width="3" height="1.5" fill="#c9ab8c"/><rect x="291.0" y="516.0" width="3" height="3" fill="#b5dc96"/><rect x="355.5" y="471.0" width="3" height="3" fill="#b5dc96"/><rect x="378.0" y="505.5" width="1.5" height="1.5" fill="#9fd3a0"/><rect x="372.0" y="486.0" width="1.5" height="3" fill="#a3d59c"/><rect x="313.5" y="546.0" width="1.5" height="3" fill="#b5dc96"/><rect x="346.5" y="559.5" width="1.5" height="1.5" fill="#b5dc96"/><rect x="292.5" y="526.5" width="3" height="1.5" fill="#b5dc96"/><rect x="295.5" y="513.0" width="1.5" height="1.5" fill="#c3e391"/><rect x="288.0" y="520.5" width="1.5" height="3" fill="#9fd3a0"/><rect x="373.5" y="510.0" width="3" height="1.5" fill="#e6ee96"/><rect x="370.5" y="498.0" width="3" height="1.5" fill="#9fd3a0"/><rect x="385.5" y="532.5" width="3" height="3" fill="#e6ee96"/><rect x="310.5" y="568.5" width="1.5" height="1.5" fill="#e6ee96"/><rect x="291.0" y="493.5" width="1.5" height="1.5" fill="#b5dc96"/><rect x="391.5" y="519.0" width="3" height="1.5" fill="#e6ee96"/><rect x="366.0" y="552.0" width="3" height="3" fill="#e6ee96"/><rect x="324.0" y="471.0" width="3" height="1.5" fill="#b5dc96"/><rect x="306.0" y="568.5" width="1.5" height="3" fill="#b5dc96"/><rect x="298.5" y="483.0" width="3" height="3" fill="#a3d59c"/><rect x="331.5" y="475.5" width="3" height="1.5" fill="#9fd3a0"/><rect x="321.0" y="472.5" width="1.5" height="1.5" fill="#e6ee96"/><rect x="309.0" y="487.5" width="1.5" height="1.5" fill="#c3e391"/><rect x="376.5" y="489.0" width="1.5" height="3" fill="#e6ee96"/><rect x="360.0" y="483.0" width="1.5" height="1.5" fill="#9fd3a0"/><rect x="384.0" y="529.5" width="3" height="3" fill="#e6ee96"/><rect x="294.0" y="516.0" width="3" height="3" fill="#b5dc96"/><rect x="304.5" y="541.5" width="3" height="3" fill="#9fd3a0"/><rect x="348.0" y="573.0" width="1.5" height="3" fill="#9fd3a0"/><rect x="385.5" y="537.0" width="3" height="1.5" fill="#e6ee96"/><rect x="387.0" y="514.5" width="1.5" height="1.5" fill="#b5dc96"/><rect x="378.0" y="481.5" width="3" height="3" fill="#e6ee96"/><rect x="382.5" y="550.5" width="3" height="1.5" fill="#b5dc96"/><rect x="361.5" y="481.5" width="3" height="1.5" fill="#c9ab8c"/><rect x="361.5" y="481.5" width="1.5" height="1.5" fill="#a3d59c"/><rect x="379.5" y="513.0" width="3" height="1.5" fill="#c3e391"/><rect x="352.5" y="573.0" width="3" height="1.5" fill="#b5dc96"/><rect x="324.0" y="564.0" width="3" height="3" fill="#c3e391"/><rect x="297.0" y="499.5" width="3" height="3" fill="#9fd3a0"/><rect x="306.0" y="475.5" width="1.5" height="1.5" fill="#a3d59c"/><rect x="328.5" y="483.0" width="1.5" height="1.5" fill="#c3e391"/><rect x="369.0" y="496.5" width="1.5" height="3" fill="#c3e391"/><rect x="295.5" y="513.0" width="1.5" height="1.5" fill="#c3e391"/><rect x="370.5" y="547.5" width="3" height="1.5" fill="#9fd3a0"/><rect x="304.5" y="474.0" width="3" height="1.5" fill="#a3d59c"/><rect x="291.0" y="516.0" width="1.5" height="1.5" fill="#a3d59c"/><rect x="315.0" y="556.5" width="1.5" height="3" fill="#e6ee96"/><rect x="369.0" y="558.0" width="1.5" height="1.5" fill="#c3e391"/><rect x="303.0" y="507.0" width="1.5" height="3" fill="#9fd3a0"/><rect x="372.0" y="543.0" width="1.5" height="1.5" fill="#9fd3a0"/><rect x="361.5" y="558.0" width="3" height="1.5" fill="#9fd3a0"/><rect x="351.0" y="558.0" width="1.5" height="1.5" fill="#9fd3a0"/><rect x="367.5" y="549.0" width="1.5" height="1.5" fill="#b5dc96"/><rect x="286.5" y="511.5" width="3" height="1.5" fill="#9fd3a0"/><rect x="366.0" y="495.0" width="1.5" height="3" fill="#b5dc96"/><rect x="294.0" y="552.0" width="3" height="1.5" fill="#9fd3a0"/><rect x="324.0" y="477.0" width="1.5" height="3" fill="#e6ee96"/><rect x="343.5" y="577.5" width="3" height="3" fill="#a3d59c"/><rect x="300.0" y="522.0" width="3" height="3" fill="#a3d59c"/><rect x="295.5" y="546.0" width="1.5" height="1.5" fill="#b5dc96"/><rect x="351.0" y="571.5" width="3" height="1.5" fill="#9fd3a0"/><rect x="334.5" y="463.5" width="1.5" height="1.5" fill="#e6ee96"/><rect x="379.5" y="528.0" width="3" height="3" fill="#c3e391"/><rect x="318.0" y="561.0" width="1.5" height="1.5" fill="#b5dc96"/><rect x="285.0" y="513.0" width="1.5" height="3" fill="#a3d59c"/><rect x="385.5" y="529.5" width="3" height="3" fill="#9fd3a0"/><rect x="370.5" y="493.5" width="3" height="1.5" fill="#e6ee96"/><rect x="375.0" y="508.5" width="3" height="3" fill="#a3d59c"/><rect x="372.0" y="537.0" width="3" height="1.5" fill="#c3e391"/><rect x="340.5" y="474.0" width="1.5" height="3" fill="#a3d59c"/><rect x="304.5" y="528.0" width="1.5" height="1.5" fill="#9fd3a0"/><rect x="322.5" y="478.5" width="1.5" height="3" fill="#c3e391"/><rect x="322.5" y="556.5" width="3" height="3" fill="#a3d59c"/><rect x="321.0" y="489.0" width="3" height="1.5" fill="#c9ab8c"/><rect x="312.0" y="556.5" width="3" height="1.5" fill="#b5dc96"/><rect x="309.0" y="553.5" width="1.5" height="1.5" fill="#b5dc96"/><rect x="321.0" y="468.0" width="1.5" height="3" fill="#a3d59c"/><rect x="378.0" y="505.5" width="3" height="3" fill="#9fd3a0"/><rect x="367.5" y="472.5" width="3" height="1.5" fill="#e6ee96"/><rect x="328.5" y="472.5" width="3" height="1.5" fill="#a3d59c"/><rect x="298.5" y="487.5" width="3" height="3" fill="#e6ee96"/><rect x="376.5" y="477.0" width="3" height="1.5" fill="#a3d59c"/><rect x="303.0" y="546.0" width="3" height="3" fill="#b5dc96"/><rect x="330.0" y="481.5" width="3" height="3" fill="#9fd3a0"/><rect x="327.0" y="465.0" width="1.5" height="1.5" fill="#a3d59c"/><rect x="303.0" y="510.0" width="3" height="1.5" fill="#b5dc96"/><rect x="366.0" y="567.0" width="3" height="3" fill="#a3d59c"/><rect x="367.5" y="472.5" width="1.5" height="1.5" fill="#9fd3a0"/><rect x="334.5" y="568.5" width="3" height="3" fill="#9fd3a0"/><rect x="337.5" y="577.5" width="1.5" height="1.5" fill="#e6ee96"/><rect x="325.5" y="477.0" width="3" height="3" fill="#9fd3a0"/><rect x="328.5" y="477.0" width="3" height="3" fill="#9fd3a0"/><rect x="310.5" y="552.0" width="3" height="3" fill="#a3d59c"/><rect x="348.0" y="573.0" width="1.5" height="1.5" fill="#9fd3a0"/><rect x="303.0" y="508.5" width="3" height="1.5" fill="#e6ee96"/><rect x="366.0" y="574.5" width="3" height="1.5" fill="#c3e391"/><rect x="321.0" y="472.5" width="3" height="1.5" fill="#e6ee96"/><rect x="331.5" y="580.5" width="1.5" height="3" fill="#9fd3a0"/><rect x="352.5" y="576.0" width="3" height="1.5" fill="#b5dc96"/><rect x="345.0" y="570.0" width="1.5" height="3" fill="#a3d59c"/><rect x="310.5" y="487.5" width="3" height="3" fill="#c9ab8c"/><rect x="298.5" y="526.5" width="1.5" height="3" fill="#e6ee96"/><rect x="301.5" y="487.5" width="3" height="1.5" fill="#b5dc96"/><rect x="327.0" y="465.0" width="3" height="3" fill="#a3d59c"/><rect x="375.0" y="555.0" width="1.5" height="1.5" fill="#a3d59c"/><rect x="348.0" y="480.0" width="3" height="1.5" fill="#a3d59c"/><rect x="309.0" y="564.0" width="1.5" height="1.5" fill="#e6ee96"/><rect x="364.5" y="478.5" width="1.5" height="1.5" fill="#c3e391"/><rect x="319.5" y="562.5" width="3" height="1.5" fill="#e6ee96"/><rect x="369.0" y="549.0" width="3" height="1.5" fill="#b5dc96"/><rect x="378.0" y="555.0" width="3" height="1.5" fill="#a3d59c"/><rect x="351.0" y="577.5" width="1.5" height="3" fill="#b5dc96"/><rect x="366.0" y="562.5" width="3" height="1.5" fill="#a3d59c"/><rect x="307.5" y="568.5" width="3" height="3" fill="#e6ee96"/><rect x="306.0" y="541.5" width="1.5" height="1.5" fill="#c3e391"/><rect x="303.0" y="510.0" width="3" height="3" fill="#a3d59c"/><rect x="378.0" y="558.0" width="1.5" height="3" fill="#c3e391"/><rect x="372.0" y="537.0" width="3" height="1.5" fill="#b5dc96"/><rect x="349.5" y="472.5" width="1.5" height="3" fill="#c3e391"/><rect x="369.0" y="492.0" width="3" height="3" fill="#b5dc96"/><rect x="391.5" y="528.0" width="3" height="1.5" fill="#c3e391"/><rect x="349.5" y="471.0" width="1.5" height="1.5" fill="#c3e391"/><rect x="355.5" y="483.0" width="3" height="1.5" fill="#d2b494"/><rect x="288.0" y="522.0" width="1.5" height="1.5" fill="#e6ee96"/><rect x="357.0" y="577.5" width="1.5" height="3" fill="#c3e391"/><rect x="298.5" y="490.5" width="3" height="3" fill="#c3e391"/><rect x="316.5" y="472.5" width="3" height="1.5" fill="#a3d59c"/><rect x="301.5" y="483.0" width="1.5" height="1.5" fill="#e6ee96"/><rect x="324.0" y="483.0" width="3" height="1.5" fill="#d2b494"/><rect x="354.0" y="576.0" width="1.5" height="3" fill="#c3e391"/><rect x="304.5" y="535.5" width="3" height="1.5" fill="#c3e391"/><rect x="307.5" y="541.5" width="3" height="1.5" fill="#9fd3a0"/><rect x="360.0" y="577.5" width="3" height="1.5" fill="#9fd3a0"/><rect x="354.0" y="558.0" width="3" height="1.5" fill="#b5dc96"/><rect x="363.0" y="553.5" width="1.5" height="1.5" fill="#b5dc96"/><rect x="318.0" y="489.0" width="3" height="3" fill="#c9ab8c"/><rect x="370.5" y="540.0" width="3" height="1.5" fill="#a3d59c"/><rect x="375.0" y="510.0" width="3" height="3" fill="#c3e391"/><rect x="336.0" y="577.5" width="3" height="1.5" fill="#b5dc96"/><rect x="373.5" y="480.0" width="1.5" height="3" fill="#c3e391"/><rect x="345.0" y="564.0" width="3" height="1.5" fill="#b5dc96"/><rect x="321.0" y="556.5" width="3" height="3" fill="#c3e391"/><rect x="321.0" y="486.0" width="1.5" height="1.5" fill="#b5dc96"/><rect x="309.0" y="496.5" width="3" height="3" fill="#d2b494"/><rect x="303.0" y="526.5" width="1.5" height="1.5" fill="#b5dc96"/><rect x="300.0" y="541.5" width="3" height="1.5" fill="#b5dc96"/><rect x="294.0" y="501.0" width="1.5" height="3" fill="#c3e391"/><rect x="348.0" y="561.0" width="3" height="1.5" fill="#c3e391"/><rect x="307.5" y="471.0" width="3" height="3" fill="#c3e391"/><rect x="300.0" y="546.0" width="1.5" height="1.5" fill="#b5dc96"/><rect x="309.0" y="496.5" width="3" height="3" fill="#b5dc96"/><rect x="289.5" y="507.0" width="3" height="1.5" fill="#b5dc96"/><rect x="327.0" y="565.5" width="3" height="1.5" fill="#c3e391"/><rect x="310.5" y="499.5" width="1.5" height="3" fill="#9fd3a0"/><rect x="384.0" y="552.0" width="1.5" height="1.5" fill="#c3e391"/><rect x="379.5" y="540.0" width="3" height="1.5" fill="#e6ee96"/><rect x="376.5" y="553.5" width="3" height="1.5" fill="#c3e391"/><rect x="388.5" y="537.0" width="1.5" height="1.5" fill="#e6ee96"/><rect x="375.0" y="495.0" width="1.5" height="3" fill="#9fd3a0"/><rect x="301.5" y="538.5" width="3" height="3" fill="#b5dc96"/><rect x="303.0" y="492.0" width="3" height="3" fill="#b5dc96"/><rect x="340.5" y="478.5" width="3" height="3" fill="#9fd3a0"/><rect x="376.5" y="534.0" width="1.5" height="1.5" fill="#9fd3a0"/><rect x="346.5" y="475.5" width="1.5" height="3" fill="#9fd3a0"/><rect x="292.5" y="528.0" width="3" height="3" fill="#9fd3a0"/><rect x="384.0" y="498.0" width="1.5" height="3" fill="#9fd3a0"/><rect x="322.5" y="555.0" width="1.5" height="3" fill="#9fd3a0"/><rect x="295.5" y="492.0" width="1.5" height="1.5" fill="#c3e391"/><rect x="370.5" y="493.5" width="3" height="3" fill="#9fd3a0"/><rect x="300.0" y="511.5" width="1.5" height="3" fill="#b5dc96"/><rect x="363.0" y="468.0" width="3" height="1.5" fill="#a3d59c"/><rect x="316.5" y="486.0" width="1.5" height="3" fill="#e6ee96"/><rect x="297.0" y="537.0" width="1.5" height="3" fill="#e6ee96"/><rect x="361.5" y="555.0" width="1.5" height="1.5" fill="#9fd3a0"/><rect x="318.0" y="477.0" width="3" height="1.5" fill="#b5dc96"/><rect x="369.0" y="568.5" width="1.5" height="3" fill="#b5dc96"/><rect x="315.0" y="480.0" width="3" height="3" fill="#9fd3a0"/><rect x="385.5" y="520.5" width="1.5" height="3" fill="#a3d59c"/><rect x="294.0" y="492.0" width="3" height="3" fill="#a3d59c"/><rect x="387.0" y="540.0" width="1.5" height="1.5" fill="#a3d59c"/><rect x="372.0" y="490.5" width="3" height="1.5" fill="#9fd3a0"/><rect x="358.5" y="558.0" width="3" height="3" fill="#c3e391"/><rect x="379.5" y="513.0" width="3" height="3" fill="#9fd3a0"/><rect x="370.5" y="561.0" width="1.5" height="3" fill="#e6ee96"/><rect x="369.0" y="487.5" width="3" height="3" fill="#c3e391"/><rect x="366.0" y="469.5" width="1.5" height="1.5" fill="#9fd3a0"/><rect x="300.0" y="523.5" width="1.5" height="1.5" fill="#c3e391"/><rect x="372.0" y="472.5" width="3" height="3" fill="#9fd3a0"/><rect x="304.5" y="516.0" width="1.5" height="3" fill="#c3e391"/><rect x="330.0" y="567.0" width="1.5" height="1.5" fill="#e6ee96"/><rect x="297.0" y="496.5" width="3" height="3" fill="#9fd3a0"/><rect x="315.0" y="552.0" width="1.5" height="3" fill="#9fd3a0"/><rect x="376.5" y="502.5" width="3" height="1.5" fill="#a3d59c"/><rect x="385.5" y="510.0" width="3" height="1.5" fill="#b5dc96"/><rect x="376.5" y="510.0" width="1.5" height="1.5" fill="#e6ee96"/><rect x="309.0" y="544.5" width="1.5" height="3" fill="#9fd3a0"/><rect x="306.0" y="538.5" width="3" height="3" fill="#c3e391"/><rect x="355.5" y="468.0" width="3" height="3" fill="#c3e391"/><rect x="349.5" y="561.0" width="3" height="1.5" fill="#c3e391"/><rect x="309.0" y="555.0" width="3" height="3" fill="#a3d59c"/><rect x="304.5" y="513.0" width="1.5" height="1.5" fill="#b5dc96"/><rect x="375.0" y="535.5" width="3" height="3" fill="#b5dc96"/><rect x="331.5" y="483.0" width="1.5" height="3" fill="#c3e391"/><rect x="384.0" y="498.0" width="1.5" height="3" fill="#b5dc96"/><rect x="297.0" y="496.5" width="3" height="1.5" fill="#e6ee96"/><rect x="382.5" y="517.5" width="3" height="3" fill="#9fd3a0"/><rect x="334.5" y="559.5" width="1.5" height="3" fill="#9fd3a0"/><rect x="307.5" y="541.5" width="1.5" height="1.5" fill="#c3e391"/><rect x="328.5" y="568.5" width="1.5" height="3" fill="#a3d59c"/><rect x="336.0" y="579.0" width="1.5" height="3" fill="#9fd3a0"/><rect x="309.0" y="540.0" width="3" height="1.5" fill="#e6ee96"/><rect x="318.0" y="481.5" width="3" height="3" fill="#c3e391"/><rect x="327.0" y="484.5" width="3" height="1.5" fill="#c9ab8c"/><rect x="363.0" y="481.5" width="3" height="3" fill="#c9ab8c"/><rect x="336.0" y="481.5" width="3" height="3" fill="#d6b898"/><rect x="348.0" y="486.0" width="3" height="3" fill="#d6b898"/><rect x="367.5" y="486.0" width="3" height="1.5" fill="#c9ab8c"/><rect x="364.5" y="475.5" width="3" height="3" fill="#c9ab8c"/><rect x="364.5" y="472.5" width="3" height="1.5" fill="#b89a7a"/><rect x="327.0" y="480.0" width="3" height="3" fill="#d6b898"/><rect x="369.0" y="483.0" width="3" height="3" fill="#c9ab8c"/><rect x="345.0" y="486.0" width="3" height="3" fill="#b89a7a"/><rect x="364.5" y="484.5" width="3" height="1.5" fill="#b89a7a"/><rect x="328.5" y="472.5" width="3" height="1.5" fill="#b89a7a"/><rect x="340.5" y="472.5" width="3" height="3" fill="#b89a7a"/><rect x="330.0" y="477.0" width="3" height="3" fill="#d6b898"/><rect x="334.5" y="484.5" width="3" height="1.5" fill="#c9ab8c"/><rect x="331.5" y="484.5" width="3" height="3" fill="#b89a7a"/><path d="M301.5 493.5 L300.0 490.5 L301.5 487.5 L304.5 486.0 L304.5 481.5 L307.5 481.5 L310.5 481.5 L313.5 478.5 L316.5 480.0 L319.5 480.0 L322.5 480.0 L325.5 480.0 L328.5 480.0 L331.5 478.5 L334.5 480.0 L337.5 478.5 L340.5 480.0 L345.0 477.0 L348.0 481.5 L351.0 478.5 L354.0 478.5 L357.0 481.5 L360.0 481.5 L363.0 481.5 L366.0 483.0 L366.0 487.5 L370.5 489.0 L369.0 493.5 L373.5 495.0 L375.0 498.0 L378.0 501.0 L379.5 504.0 L379.5 507.0 L378.0 510.0 L378.0 513.0 L378.0 516.0 L378.0 519.0 L379.5 522.0 L378.0 525.0 L381.0 528.0 L378.0 531.0 L381.0 534.0 L379.5 537.0 L381.0 540.0 L381.0 543.0 L379.5 546.0 L379.5 550.5 L378.0 553.5 L375.0 555.0 L373.5 558.0 L373.5 564.0 L370.5 562.5 L366.0 562.5 L363.0 562.5 L360.0 561.0 L357.0 565.5 L354.0 564.0 L351.0 565.5 L348.0 564.0 L343.5 564.0 L340.5 565.5 L337.5 565.5 L334.5 567.0 L331.5 567.0 L328.5 565.5 L325.5 565.5 L322.5 565.5 L321.0 561.0 L316.5 564.0 L313.5 561.0 L310.5 561.0 L309.0 561.0 L309.0 558.0 L307.5 555.0 L304.5 553.5 L304.5 550.5 L303.0 547.5 L300.0 544.5 L300.0 541.5 L300.0 538.5 L298.5 535.5 L301.5 532.5 L300.0 528.0 L300.0 525.0 L298.5 522.0 L300.0 519.0 L300.0 516.0 L297.0 513.0 L297.0 510.0 L300.0 507.0 L298.5 502.5 L300.0 499.5 L298.5 496.5Z" fill="#cdd8d6"/><rect x="303.3" y="502.2" width="13.4" height="26.3" rx="4.0" ry="7.9" fill="#a3c2bc" stroke="#8aaca6" stroke-width="1"/><rect x="306.6" y="508.7" width="6.0" height="10.5" rx="2.7" fill="#b4cfc9" opacity="0.55"/><rect x="317.3" y="487.7" width="20.4" height="25.2" rx="6.1" ry="7.6" fill="#9cbbb5" stroke="#8aaca6" stroke-width="1"/><rect x="322.4" y="494.0" width="9.2" height="10.1" rx="4.1" fill="#b4cfc9" opacity="0.55"/><rect x="320.3" y="514.6" width="16.4" height="14.9" rx="4.9" ry="4.5" fill="#a9c7c1" stroke="#8aaca6" stroke-width="1"/><rect x="324.4" y="518.3" width="7.4" height="6.0" rx="3.3" fill="#b4cfc9" opacity="0.55"/><rect x="341.3" y="501.1" width="22.4" height="21.1" rx="6.7" ry="6.3" fill="#98b7b1" stroke="#8aaca6" stroke-width="1"/><rect x="346.9" y="506.4" width="10.1" height="8.4" rx="4.5" fill="#b4cfc9" opacity="0.55"/><rect x="343.3" y="482.5" width="12.4" height="10.8" rx="3.7" ry="3.2" fill="#a3c2bc" stroke="#8aaca6" stroke-width="1"/><rect x="346.4" y="485.2" width="5.6" height="4.3" rx="2.5" fill="#b4cfc9" opacity="0.55"/><rect x="332.3" y="488.7" width="10.4" height="8.7" rx="3.1" ry="2.6" fill="#9cbbb5" stroke="#8aaca6" stroke-width="1"/><rect x="334.9" y="490.9" width="4.7" height="3.5" rx="2.1" fill="#b4cfc9" opacity="0.55"/><rect x="317.3" y="532.2" width="20.4" height="19.0" rx="6.1" ry="5.7" fill="#a9c7c1" stroke="#8aaca6" stroke-width="1"/><rect x="322.4" y="536.9" width="9.2" height="7.6" rx="4.1" fill="#b4cfc9" opacity="0.55"/><rect x="338.3" y="523.9" width="23.4" height="24.2" rx="7.0" ry="7.3" fill="#98b7b1" stroke="#8aaca6" stroke-width="1"/><rect x="344.1" y="529.9" width="10.5" height="9.7" rx="4.7" fill="#b4cfc9" opacity="0.55"/><rect x="364.3" y="527.0" width="13.4" height="9.7" rx="4.0" ry="2.9" fill="#a3c2bc" stroke="#8aaca6" stroke-width="1"/><rect x="367.6" y="529.4" width="6.0" height="3.9" rx="2.7" fill="#b4cfc9" opacity="0.55"/><rect x="364.3" y="537.3" width="15.4" height="12.8" rx="4.6" ry="3.8" fill="#9cbbb5" stroke="#8aaca6" stroke-width="1"/><rect x="368.1" y="540.6" width="6.9" height="5.1" rx="3.1" fill="#b4cfc9" opacity="0.55"/><rect x="303.3" y="530.1" width="12.4" height="18.0" rx="3.7" ry="5.4" fill="#a9c7c1" stroke="#8aaca6" stroke-width="1"/><rect x="306.4" y="534.6" width="5.6" height="7.2" rx="2.5" fill="#b4cfc9" opacity="0.55"/><rect x="308.3" y="550.8" width="21.4" height="12.8" rx="6.4" ry="3.8" fill="#98b7b1" stroke="#8aaca6" stroke-width="1"/><rect x="313.6" y="554.0" width="9.6" height="5.1" rx="4.3" fill="#b4cfc9" opacity="0.55"/><rect x="330.3" y="549.8" width="33.4" height="11.8" rx="10.0" ry="3.5" fill="#a3c2bc" stroke="#8aaca6" stroke-width="1"/><rect x="338.6" y="552.7" width="15.0" height="4.7" rx="6.7" fill="#b4cfc9" opacity="0.55"/><rect x="320.3" y="480.4" width="7.4" height="6.6" rx="2.2" ry="2.0" fill="#9cbbb5" stroke="#8aaca6" stroke-width="1"/><rect x="322.1" y="482.1" width="3.3" height="2.6" rx="1.5" fill="#b4cfc9" opacity="0.55"/><rect x="306.3" y="488.7" width="10.4" height="12.8" rx="3.1" ry="3.8" fill="#a9c7c1" stroke="#8aaca6" stroke-width="1"/><rect x="308.9" y="491.9" width="4.7" height="5.1" rx="2.1" fill="#b4cfc9" opacity="0.55"/><rect x="364.3" y="506.3" width="9.4" height="18.0" rx="2.8" ry="5.4" fill="#98b7b1" stroke="#8aaca6" stroke-width="1"/><rect x="366.6" y="510.8" width="4.2" height="7.2" rx="1.9" fill="#b4cfc9" opacity="0.55"/><rect x="357.3" y="483.6" width="6.4" height="12.8" rx="1.9" ry="3.8" fill="#a3c2bc" stroke="#8aaca6" stroke-width="1"/><rect x="358.9" y="486.8" width="2.9" height="5.1" rx="1.3" fill="#b4cfc9" opacity="0.55"/><rect x="338.3" y="480.4" width="4.4" height="6.6" rx="1.3" ry="2.0" fill="#9cbbb5" stroke="#8aaca6" stroke-width="1"/><rect x="339.4" y="482.1" width="2.0" height="2.6" rx="0.9" fill="#b4cfc9" opacity="0.55"/><rect x="555.0" y="271.5" width="1.5" height="1.5" fill="#a3d59c"/><rect x="520.5" y="403.5" width="1.5" height="1.5" fill="#e6ee96"/><rect x="481.5" y="306.0" width="3" height="1.5" fill="#b5dc96"/><rect x="567.0" y="273.0" width="3" height="1.5" fill="#a3d59c"/><rect x="514.5" y="379.5" width="3" height="3" fill="#e6ee96"/><rect x="552.0" y="387.0" width="1.5" height="3" fill="#b5dc96"/><rect x="490.5" y="292.5" width="1.5" height="3" fill="#b5dc96"/><rect x="567.0" y="285.0" width="1.5" height="1.5" fill="#c3e391"/><rect x="529.5" y="399.0" width="1.5" height="3" fill="#e6ee96"/><rect x="582.0" y="309.0" width="1.5" height="1.5" fill="#c3e391"/><rect x="489.0" y="301.5" width="3" height="1.5" fill="#a3d59c"/><rect x="583.5" y="312.0" width="1.5" height="3" fill="#c3e391"/><rect x="541.5" y="265.5" width="3" height="1.5" fill="#9fd3a0"/><rect x="501.0" y="270.0" width="1.5" height="3" fill="#b5dc96"/><rect x="492.0" y="319.5" width="3" height="3" fill="#c3e391"/><rect x="495.0" y="304.5" width="1.5" height="1.5" fill="#c3e391"/><rect x="522.0" y="273.0" width="1.5" height="3" fill="#c3e391"/><rect x="586.5" y="321.0" width="1.5" height="3" fill="#a3d59c"/><rect x="553.5" y="402.0" width="1.5" height="1.5" fill="#a3d59c"/><rect x="604.5" y="342.0" width="3" height="3" fill="#a3d59c"/><rect x="486.0" y="334.5" width="3" height="3" fill="#b5dc96"/><rect x="523.5" y="388.5" width="1.5" height="1.5" fill="#c3e391"/><rect x="498.0" y="300.0" width="1.5" height="1.5" fill="#b5dc96"/><rect x="592.5" y="370.5" width="1.5" height="1.5" fill="#e6ee96"/><rect x="547.5" y="273.0" width="3" height="3" fill="#c3e391"/><rect x="579.0" y="283.5" width="1.5" height="3" fill="#c3e391"/><rect x="567.0" y="280.5" width="3" height="3" fill="#b5dc96"/><rect x="592.5" y="292.5" width="3" height="3" fill="#9fd3a0"/><rect x="483.0" y="328.5" width="3" height="3" fill="#9fd3a0"/><rect x="585.0" y="303.0" width="1.5" height="1.5" fill="#b5dc96"/><rect x="498.0" y="385.5" width="1.5" height="1.5" fill="#b5dc96"/><rect x="474.0" y="316.5" width="1.5" height="1.5" fill="#e6ee96"/><rect x="531.0" y="387.0" width="1.5" height="3" fill="#9fd3a0"/><rect x="591.0" y="366.0" width="3" height="3" fill="#b5dc96"/><rect x="501.0" y="273.0" width="1.5" height="3" fill="#b5dc96"/><rect x="537.0" y="273.0" width="1.5" height="3" fill="#c3e391"/><rect x="585.0" y="331.5" width="1.5" height="3" fill="#a3d59c"/><rect x="565.5" y="261.0" width="1.5" height="1.5" fill="#a3d59c"/><rect x="603.0" y="352.5" width="1.5" height="1.5" fill="#c3e391"/><rect x="534.0" y="271.5" width="3" height="3" fill="#e6ee96"/><rect x="487.5" y="342.0" width="3" height="3" fill="#e6ee96"/><rect x="532.5" y="255.0" width="3" height="1.5" fill="#a3d59c"/><rect x="552.0" y="397.5" width="3" height="3" fill="#9fd3a0"/><rect x="592.5" y="316.5" width="3" height="1.5" fill="#e6ee96"/><rect x="537.0" y="403.5" width="3" height="1.5" fill="#a3d59c"/><rect x="565.5" y="271.5" width="3" height="3" fill="#c3e391"/><rect x="477.0" y="333.0" width="3" height="1.5" fill="#b5dc96"/><rect x="529.5" y="387.0" width="3" height="3" fill="#b5dc96"/><rect x="486.0" y="357.0" width="3" height="1.5" fill="#c3e391"/><rect x="513.0" y="262.5" width="3" height="3" fill="#e6ee96"/><rect x="483.0" y="334.5" width="3" height="3" fill="#a3d59c"/><rect x="576.0" y="282.0" width="1.5" height="3" fill="#9fd3a0"/><rect x="591.0" y="309.0" width="1.5" height="1.5" fill="#c3e391"/><rect x="487.5" y="379.5" width="3" height="1.5" fill="#9fd3a0"/><rect x="508.5" y="376.5" width="1.5" height="1.5" fill="#c3e391"/><rect x="594.0" y="349.5" width="3" height="1.5" fill="#9fd3a0"/><rect x="583.5" y="283.5" width="1.5" height="3" fill="#a3d59c"/><rect x="495.0" y="354.0" width="1.5" height="3" fill="#e6ee96"/><rect x="544.5" y="400.5" width="1.5" height="3" fill="#e6ee96"/><rect x="591.0" y="378.0" width="1.5" height="1.5" fill="#b5dc96"/><rect x="588.0" y="352.5" width="3" height="3" fill="#c3e391"/><rect x="475.5" y="312.0" width="3" height="1.5" fill="#e6ee96"/><rect x="481.5" y="292.5" width="1.5" height="1.5" fill="#b5dc96"/><rect x="568.5" y="265.5" width="3" height="3" fill="#9fd3a0"/><rect x="592.5" y="352.5" width="1.5" height="3" fill="#b5dc96"/><rect x="498.0" y="276.0" width="1.5" height="1.5" fill="#c3e391"/><rect x="484.5" y="312.0" width="3" height="3" fill="#c3e391"/><rect x="579.0" y="363.0" width="1.5" height="3" fill="#c3e391"/><rect x="558.0" y="268.5" width="3" height="3" fill="#9fd3a0"/><rect x="588.0" y="307.5" width="1.5" height="1.5" fill="#9fd3a0"/><rect x="603.0" y="351.0" width="1.5" height="1.5" fill="#e6ee96"/><rect x="495.0" y="355.5" width="3" height="1.5" fill="#a3d59c"/><rect x="489.0" y="288.0" width="3" height="3" fill="#a3d59c"/><rect x="543.0" y="402.0" width="3" height="3" fill="#b5dc96"/><rect x="490.5" y="292.5" width="3" height="3" fill="#c3e391"/><rect x="565.5" y="375.0" width="1.5" height="1.5" fill="#b5dc96"/><rect x="592.5" y="336.0" width="3" height="3" fill="#c3e391"/><rect x="474.0" y="325.5" width="1.5" height="3" fill="#c3e391"/><rect x="603.0" y="348.0" width="1.5" height="1.5" fill="#c3e391"/><rect x="543.0" y="253.5" width="3" height="1.5" fill="#9fd3a0"/><rect x="591.0" y="318.0" width="3" height="1.5" fill="#e6ee96"/><rect x="567.0" y="381.0" width="3" height="3" fill="#a3d59c"/><rect x="529.5" y="273.0" width="3" height="1.5" fill="#b5dc96"/><rect x="523.5" y="262.5" width="3" height="3" fill="#b5dc96"/><rect x="552.0" y="391.5" width="3" height="1.5" fill="#b5dc96"/><rect x="571.5" y="264.0" width="3" height="1.5" fill="#a3d59c"/><rect x="480.0" y="310.5" width="1.5" height="1.5" fill="#b5dc96"/><rect x="582.0" y="375.0" width="3" height="3" fill="#a3d59c"/><rect x="579.0" y="369.0" width="1.5" height="1.5" fill="#a3d59c"/><rect x="547.5" y="258.0" width="1.5" height="3" fill="#9fd3a0"/><rect x="489.0" y="372.0" width="1.5" height="1.5" fill="#b5dc96"/><rect x="588.0" y="343.5" width="1.5" height="1.5" fill="#c3e391"/><rect x="483.0" y="309.0" width="3" height="1.5" fill="#e6ee96"/><rect x="565.5" y="382.5" width="1.5" height="1.5" fill="#a3d59c"/><rect x="588.0" y="358.5" width="3" height="3" fill="#9fd3a0"/><rect x="573.0" y="382.5" width="1.5" height="3" fill="#c3e391"/><rect x="571.5" y="279.0" width="3" height="1.5" fill="#9fd3a0"/><rect x="588.0" y="327.0" width="1.5" height="1.5" fill="#9fd3a0"/><rect x="601.5" y="327.0" width="3" height="3" fill="#b5dc96"/><rect x="549.0" y="393.0" width="1.5" height="3" fill="#b5dc96"/><rect x="480.0" y="363.0" width="3" height="1.5" fill="#9fd3a0"/><rect x="517.5" y="396.0" width="1.5" height="1.5" fill="#9fd3a0"/><rect x="592.5" y="303.0" width="3" height="3" fill="#b5dc96"/><rect x="585.0" y="381.0" width="1.5" height="3" fill="#c3e391"/><rect x="564.0" y="279.0" width="1.5" height="1.5" fill="#e6ee96"/><rect x="603.0" y="336.0" width="1.5" height="3" fill="#c3e391"/><rect x="603.0" y="312.0" width="3" height="3" fill="#c3e391"/><rect x="597.0" y="369.0" width="1.5" height="3" fill="#e6ee96"/><rect x="486.0" y="327.0" width="1.5" height="3" fill="#b5dc96"/><rect x="496.5" y="381.0" width="3" height="3" fill="#e6ee96"/><rect x="541.5" y="258.0" width="1.5" height="3" fill="#e6ee96"/><rect x="591.0" y="295.5" width="3" height="3" fill="#e6ee96"/><rect x="559.5" y="393.0" width="1.5" height="1.5" fill="#b5dc96"/><rect x="546.0" y="270.0" width="3" height="3" fill="#9fd3a0"/><rect x="549.0" y="396.0" width="3" height="1.5" fill="#a3d59c"/><rect x="547.5" y="268.5" width="1.5" height="1.5" fill="#e6ee96"/><rect x="489.0" y="361.5" width="1.5" height="1.5" fill="#c3e391"/><rect x="552.0" y="265.5" width="3" height="1.5" fill="#e6ee96"/><rect x="552.0" y="261.0" width="1.5" height="1.5" fill="#e6ee96"/><rect x="589.5" y="309.0" width="1.5" height="3" fill="#a3d59c"/><rect x="559.5" y="397.5" width="1.5" height="1.5" fill="#c3e391"/><rect x="592.5" y="301.5" width="3" height="3" fill="#c3e391"/><rect x="490.5" y="340.5" width="1.5" height="3" fill="#9fd3a0"/><rect x="531.0" y="385.5" width="1.5" height="3" fill="#e6ee96"/><rect x="583.5" y="309.0" width="1.5" height="3" fill="#9fd3a0"/><rect x="589.5" y="298.5" width="1.5" height="1.5" fill="#a3d59c"/><rect x="579.0" y="370.5" width="3" height="3" fill="#b5dc96"/><rect x="487.5" y="361.5" width="1.5" height="3" fill="#9fd3a0"/><rect x="604.5" y="330.0" width="1.5" height="1.5" fill="#b5dc96"/><rect x="523.5" y="381.0" width="3" height="3" fill="#9fd3a0"/><rect x="585.0" y="364.5" width="1.5" height="3" fill="#e6ee96"/><rect x="511.5" y="271.5" width="1.5" height="1.5" fill="#9fd3a0"/><rect x="537.0" y="273.0" width="1.5" height="3" fill="#a3d59c"/><rect x="487.5" y="319.5" width="1.5" height="3" fill="#b5dc96"/><rect x="555.0" y="388.5" width="3" height="1.5" fill="#e6ee96"/><rect x="489.0" y="358.5" width="1.5" height="1.5" fill="#9fd3a0"/><rect x="511.5" y="262.5" width="1.5" height="1.5" fill="#e6ee96"/><rect x="588.0" y="306.0" width="3" height="1.5" fill="#a3d59c"/><rect x="492.0" y="385.5" width="1.5" height="1.5" fill="#b5dc96"/><rect x="594.0" y="349.5" width="1.5" height="1.5" fill="#9fd3a0"/><rect x="571.5" y="288.0" width="3" height="1.5" fill="#c3e391"/><rect x="586.5" y="373.5" width="3" height="3" fill="#b5dc96"/><rect x="597.0" y="325.5" width="1.5" height="3" fill="#a3d59c"/><rect x="492.0" y="378.0" width="1.5" height="3" fill="#b5dc96"/><rect x="597.0" y="358.5" width="3" height="3" fill="#a3d59c"/><rect x="486.0" y="315.0" width="3" height="3" fill="#e6ee96"/><rect x="480.0" y="333.0" width="1.5" height="3" fill="#e6ee96"/><rect x="499.5" y="373.5" width="3" height="3" fill="#a3d59c"/><rect x="546.0" y="405.0" width="3" height="3" fill="#a3d59c"/><rect x="592.5" y="295.5" width="3" height="3" fill="#b5dc96"/><rect x="543.0" y="390.0" width="1.5" height="3" fill="#c3e391"/><rect x="564.0" y="379.5" width="1.5" height="3" fill="#a3d59c"/><rect x="546.0" y="403.5" width="3" height="3" fill="#c3e391"/><rect x="565.5" y="384.0" width="1.5" height="3" fill="#e6ee96"/><rect x="498.0" y="273.0" width="3" height="1.5" fill="#b5dc96"/><rect x="480.0" y="294.0" width="3" height="3" fill="#c3e391"/><rect x="486.0" y="327.0" width="1.5" height="1.5" fill="#c3e391"/><rect x="558.0" y="403.5" width="1.5" height="3" fill="#a3d59c"/><rect x="580.5" y="271.5" width="1.5" height="3" fill="#a3d59c"/><rect x="492.0" y="345.0" width="1.5" height="3" fill="#e6ee96"/><rect x="598.5" y="334.5" width="3" height="1.5" fill="#9fd3a0"/><rect x="513.0" y="385.5" width="1.5" height="3" fill="#c3e391"/><rect x="588.0" y="309.0" width="3" height="3" fill="#b5dc96"/><rect x="597.0" y="363.0" width="3" height="3" fill="#b5dc96"/><rect x="480.0" y="307.5" width="1.5" height="1.5" fill="#9fd3a0"/><rect x="586.5" y="334.5" width="3" height="3" fill="#b5dc96"/><rect x="483.0" y="309.0" width="3" height="3" fill="#9fd3a0"/><rect x="498.0" y="369.0" width="3" height="1.5" fill="#c3e391"/><rect x="525.0" y="388.5" width="1.5" height="1.5" fill="#b5dc96"/><rect x="502.5" y="289.5" width="3" height="3" fill="#9fd3a0"/><rect x="547.5" y="393.0" width="3" height="3" fill="#a3d59c"/><rect x="585.0" y="361.5" width="1.5" height="3" fill="#e6ee96"/><rect x="583.5" y="349.5" width="3" height="1.5" fill="#e6ee96"/><rect x="543.0" y="387.0" width="1.5" height="1.5" fill="#a3d59c"/><rect x="525.0" y="271.5" width="3" height="3" fill="#c3e391"/><rect x="547.5" y="397.5" width="1.5" height="1.5" fill="#a3d59c"/><rect x="486.0" y="373.5" width="1.5" height="1.5" fill="#e6ee96"/><rect x="588.0" y="337.5" width="1.5" height="3" fill="#a3d59c"/><rect x="567.0" y="384.0" width="3" height="3" fill="#a3d59c"/><rect x="508.5" y="285.0" width="3" height="1.5" fill="#c3e391"/><rect x="541.5" y="274.5" width="1.5" height="3" fill="#c3e391"/><rect x="556.5" y="388.5" width="3" height="3" fill="#9fd3a0"/><rect x="594.0" y="348.0" width="1.5" height="3" fill="#e6ee96"/><rect x="574.5" y="280.5" width="1.5" height="1.5" fill="#b5dc96"/><rect x="570.0" y="276.0" width="1.5" height="1.5" fill="#b5dc96"/><rect x="487.5" y="337.5" width="1.5" height="3" fill="#9fd3a0"/><rect x="592.5" y="316.5" width="1.5" height="1.5" fill="#e6ee96"/><rect x="586.5" y="367.5" width="3" height="3" fill="#b5dc96"/><rect x="498.0" y="270.0" width="1.5" height="1.5" fill="#e6ee96"/><rect x="582.0" y="361.5" width="1.5" height="3" fill="#b5dc96"/><rect x="486.0" y="319.5" width="3" height="1.5" fill="#c3e391"/><rect x="567.0" y="270.0" width="1.5" height="1.5" fill="#e6ee96"/><rect x="579.0" y="298.5" width="1.5" height="3" fill="#b5dc96"/><rect x="537.0" y="255.0" width="3" height="3" fill="#9fd3a0"/><rect x="570.0" y="276.0" width="3" height="3" fill="#c3e391"/><rect x="535.5" y="276.0" width="3" height="1.5" fill="#9fd3a0"/><rect x="583.5" y="357.0" width="3" height="1.5" fill="#9fd3a0"/><rect x="492.0" y="385.5" width="3" height="3" fill="#e6ee96"/><rect x="493.5" y="357.0" width="1.5" height="3" fill="#c3e391"/><rect x="495.0" y="289.5" width="3" height="3" fill="#e6ee96"/><path d="M490.5 309.0 L490.5 312.0 L489.0 315.0 L489.0 318.0 L490.5 319.5 L492.0 322.5 L492.0 325.5 L489.0 327.0 L492.0 330.0 L489.0 333.0 L489.0 336.0 L492.0 337.5 L489.0 340.5 L490.5 343.5 L490.5 345.0 L487.5 348.0 L490.5 351.0 L490.5 354.0 L486.0 355.5 L489.0 358.5 L490.5 361.5 L490.5 363.0 L492.0 366.0 L490.5 370.5 L493.5 370.5 L495.0 373.5 L495.0 376.5 L498.0 378.0 L498.0 381.0 L499.5 384.0 L502.5 384.0 L505.5 384.0 L507.0 387.0 L510.0 388.5 L513.0 385.5 L516.0 390.0 L519.0 390.0 L520.5 388.5 L523.5 387.0 L526.5 388.5 L529.5 388.5 L532.5 385.5 L534.0 388.5 L537.0 387.0 L540.0 385.5 L543.0 387.0 L546.0 388.5 L547.5 388.5 L550.5 390.0 L553.5 391.5 L556.5 390.0 L558.0 390.0 L561.0 388.5 L562.5 387.0 L564.0 384.0 L565.5 381.0 L570.0 382.5 L571.5 381.0 L574.5 379.5 L574.5 376.5 L576.0 375.0 L580.5 373.5 L580.5 372.0 L582.0 369.0 L582.0 366.0 L585.0 364.5 L588.0 363.0 L588.0 360.0 L589.5 357.0 L586.5 354.0 L588.0 351.0 L589.5 348.0 L589.5 346.5 L589.5 343.5 L588.0 340.5 L586.5 339.0 L585.0 336.0 L588.0 333.0 L585.0 330.0 L583.5 327.0 L585.0 325.5 L586.5 322.5 L588.0 319.5 L586.5 316.5 L586.5 315.0 L589.5 312.0 L586.5 310.5 L586.5 307.5 L585.0 304.5 L583.5 303.0 L579.0 303.0 L577.5 301.5 L576.0 300.0 L576.0 295.5 L573.0 294.0 L571.5 291.0 L570.0 291.0 L565.5 291.0 L565.5 286.5 L564.0 285.0 L561.0 285.0 L558.0 286.5 L555.0 283.5 L552.0 283.5 L550.5 283.5 L547.5 283.5 L544.5 282.0 L543.0 279.0 L540.0 282.0 L537.0 279.0 L535.5 279.0 L532.5 280.5 L529.5 277.5 L526.5 280.5 L525.0 280.5 L522.0 280.5 L519.0 280.5 L516.0 280.5 L514.5 280.5 L511.5 282.0 L508.5 282.0 L507.0 283.5 L505.5 286.5 L502.5 288.0 L501.0 289.5 L501.0 292.5 L498.0 295.5 L495.0 295.5 L492.0 297.0 L490.5 300.0 L490.5 301.5 L490.5 304.5 L490.5 307.5Z" fill="#0e7f86"/><path d="M481.5 307.5 L483.0 304.5 L484.5 301.5 L483.0 298.5 L486.0 295.5 L487.5 294.0 L487.5 291.0 L487.5 288.0 L490.5 286.5 L490.5 283.5 L492.0 280.5 L495.0 280.5 L495.0 276.0 L496.5 274.5 L499.5 274.5 L501.0 273.0 L502.5 271.5 L505.5 270.0 L508.5 270.0 L510.0 268.5 L513.0 268.5 L516.0 268.5 L517.5 267.0 L520.5 268.5 L523.5 268.5 L526.5 267.0 L529.5 267.0 L531.0 265.5 L534.0 264.0 L537.0 267.0 L540.0 265.5 L543.0 264.0 L544.5 267.0 L547.5 268.5 L550.5 267.0 L553.5 268.5 L556.5 268.5 L558.0 268.5 L561.0 268.5 L562.5 271.5 L565.5 273.0 L567.0 274.5 L570.0 276.0 L573.0 277.5 L574.5 277.5 L576.0 282.0 L577.5 283.5 L579.0 285.0 L582.0 286.5 L583.5 289.5 L586.5 291.0 L588.0 294.0 L589.5 295.5 L589.5 298.5 L591.0 301.5 L592.5 306.0 L589.5 304.5 L586.5 306.0 L583.5 307.5 L582.0 304.5 L580.5 303.0 L579.0 300.0 L576.0 298.5 L574.5 297.0 L573.0 294.0 L571.5 292.5 L570.0 289.5 L567.0 291.0 L565.5 286.5 L562.5 288.0 L561.0 285.0 L558.0 283.5 L556.5 283.5 L555.0 279.0 L552.0 280.5 L549.0 282.0 L546.0 280.5 L544.5 279.0 L541.5 280.5 L538.5 280.5 L535.5 277.5 L534.0 277.5 L531.0 277.5 L528.0 277.5 L525.0 277.5 L523.5 279.0 L520.5 277.5 L517.5 277.5 L514.5 279.0 L511.5 282.0 L508.5 280.5 L505.5 280.5 L505.5 283.5 L504.0 285.0 L501.0 288.0 L498.0 288.0 L496.5 289.5 L495.0 292.5 L493.5 294.0 L490.5 295.5 L489.0 298.5 L489.0 301.5 L489.0 304.5 L486.0 306.0 L486.0 307.5Z" fill="#c9a985"/><path d="M486 298 Q496 276 520 271 Q560 270 582 296" fill="none" stroke="#e0cba6" stroke-width="2.5"/><rect x="489.0" y="286.5" width="1.5" height="1.5" fill="#7d8f5c"/><rect x="586.5" y="294.0" width="1.5" height="3" fill="#7d8f5c"/><rect x="531.0" y="267.0" width="1.5" height="1.5" fill="#e3d0ac"/><rect x="576.0" y="277.5" width="1.5" height="1.5" fill="#7d8f5c"/><rect x="571.5" y="277.5" width="1.5" height="1.5" fill="#7d8f5c"/><rect x="564.0" y="274.5" width="1.5" height="3" fill="#e3d0ac"/><rect x="519.0" y="273.0" width="1.5" height="3" fill="#a88a68"/><rect x="514.5" y="270.0" width="1.5" height="3" fill="#a88a68"/><rect x="585.0" y="289.5" width="1.5" height="1.5" fill="#7d8f5c"/><rect x="526.5" y="268.5" width="1.5" height="1.5" fill="#7d8f5c"/><rect x="525.0" y="270.0" width="1.5" height="3" fill="#e3d0ac"/><rect x="573.0" y="277.5" width="1.5" height="3" fill="#e3d0ac"/><rect x="529.5" y="268.5" width="1.5" height="1.5" fill="#e3d0ac"/><rect x="529.5" y="267.0" width="1.5" height="3" fill="#a88a68"/><rect x="570.0" y="277.5" width="1.5" height="3" fill="#a88a68"/><rect x="540.0" y="270.0" width="1.5" height="1.5" fill="#8c7052"/><rect x="523.5" y="265.5" width="1.5" height="3" fill="#a88a68"/><rect x="486.0" y="295.5" width="1.5" height="3" fill="#8c7052"/><rect x="585.0" y="288.0" width="1.5" height="1.5" fill="#e3d0ac"/><rect x="519.0" y="270.0" width="1.5" height="1.5" fill="#a88a68"/><rect x="547.5" y="268.5" width="1.5" height="1.5" fill="#7d8f5c"/><rect x="562.5" y="274.5" width="1.5" height="3" fill="#e3d0ac"/><rect x="576.0" y="282.0" width="1.5" height="1.5" fill="#a88a68"/><rect x="492.0" y="286.5" width="1.5" height="3" fill="#a88a68"/><rect x="577.5" y="279.0" width="1.5" height="3" fill="#7d8f5c"/><rect x="555.0" y="270.0" width="1.5" height="3" fill="#a88a68"/><rect x="586.5" y="292.5" width="1.5" height="1.5" fill="#8c7052"/><rect x="564.0" y="274.5" width="1.5" height="3" fill="#8c7052"/><rect x="564.0" y="274.5" width="1.5" height="1.5" fill="#7d8f5c"/><rect x="583.5" y="289.5" width="1.5" height="3" fill="#8c7052"/><rect x="504.0" y="274.5" width="1.5" height="1.5" fill="#8c7052"/><rect x="490.5" y="286.5" width="1.5" height="1.5" fill="#e3d0ac"/><rect x="486.0" y="295.5" width="1.5" height="1.5" fill="#e3d0ac"/><rect x="538.5" y="265.5" width="1.5" height="3" fill="#e3d0ac"/><rect x="511.5" y="273.0" width="1.5" height="1.5" fill="#e3d0ac"/><rect x="516.0" y="270.0" width="1.5" height="1.5" fill="#8c7052"/><rect x="562.5" y="273.0" width="1.5" height="1.5" fill="#8c7052"/><rect x="498.0" y="277.5" width="1.5" height="1.5" fill="#8c7052"/><rect x="522.0" y="270.0" width="1.5" height="3" fill="#8c7052"/><rect x="543.0" y="267.0" width="1.5" height="3" fill="#e3d0ac"/><path d="M496.5 301.5 L498.0 300.0 L499.5 298.5 L501.0 295.5 L501.0 292.5 L504.0 292.5 L504.0 289.5 L505.5 288.0 L508.5 286.5 L511.5 286.5 L514.5 285.0 L516.0 283.5 L519.0 285.0 L522.0 283.5 L525.0 283.5 L526.5 282.0 L529.5 282.0 L532.5 280.5 L535.5 282.0 L538.5 282.0 L540.0 280.5 L543.0 283.5 L546.0 282.0 L549.0 283.5 L550.5 283.5 L553.5 283.5 L556.5 283.5 L559.5 285.0 L559.5 289.5 L564.0 288.0 L565.5 289.5 L567.0 291.0 L568.5 295.5 L571.5 295.5 L573.0 298.5 L574.5 300.0 L577.5 300.0 L576.0 300.0 L573.0 300.0 L570.0 300.0 L567.0 298.5 L565.5 297.0 L562.5 298.5 L559.5 297.0 L558.0 297.0 L555.0 297.0 L552.0 297.0 L550.5 297.0 L547.5 297.0 L544.5 297.0 L543.0 294.0 L540.0 295.5 L537.0 294.0 L535.5 295.5 L532.5 294.0 L529.5 295.5 L528.0 294.0 L525.0 294.0 L522.0 297.0 L520.5 295.5 L517.5 297.0 L514.5 295.5 L513.0 298.5 L510.0 298.5 L507.0 297.0 L505.5 297.0 L502.5 300.0 L499.5 301.5Z" fill="#5f9e90"/><path d="M499.5 300.0 L502.5 297.0 L505.5 298.5 L508.5 298.5 L511.5 298.5 L514.5 297.0 L516.0 298.5 L519.0 297.0 L522.0 297.0 L525.0 295.5 L526.5 298.5 L529.5 297.0 L532.5 295.5 L535.5 297.0 L537.0 298.5 L540.0 297.0 L543.0 298.5 L546.0 298.5 L547.5 298.5 L550.5 295.5 L553.5 297.0 L556.5 298.5 L558.0 298.5 L561.0 301.5 L562.5 301.5 L565.5 301.5 L568.5 303.0 L571.5 303.0 L574.5 301.5 L576.0 303.0 L579.0 303.0 L582.0 304.5 L583.5 307.5 L580.5 309.0 L580.5 312.0 L583.5 315.0 L582.0 318.0 L583.5 319.5 L583.5 322.5 L583.5 325.5 L580.5 327.0 L582.0 330.0 L580.5 333.0 L583.5 336.0 L582.0 337.5 L580.5 340.5 L582.0 343.5 L580.5 345.0 L580.5 348.0 L582.0 351.0 L580.5 354.0 L580.5 355.5 L580.5 360.0 L577.5 360.0 L577.5 363.0 L574.5 363.0 L571.5 364.5 L570.0 367.5 L567.0 367.5 L565.5 370.5 L561.0 369.0 L559.5 370.5 L556.5 372.0 L553.5 369.0 L550.5 373.5 L547.5 373.5 L544.5 372.0 L543.0 373.5 L540.0 373.5 L537.0 373.5 L535.5 373.5 L532.5 373.5 L529.5 373.5 L526.5 373.5 L525.0 370.5 L522.0 372.0 L520.5 370.5 L519.0 367.5 L514.5 370.5 L513.0 369.0 L511.5 366.0 L508.5 366.0 L508.5 363.0 L505.5 361.5 L502.5 361.5 L499.5 358.5 L502.5 355.5 L499.5 354.0 L502.5 351.0 L501.0 348.0 L502.5 345.0 L501.0 343.5 L499.5 340.5 L499.5 337.5 L501.0 336.0 L498.0 333.0 L501.0 330.0 L501.0 327.0 L498.0 325.5 L501.0 322.5 L499.5 319.5 L498.0 316.5 L499.5 315.0 L499.5 312.0 L498.0 309.0 L499.5 307.5 L499.5 304.5 L499.5 301.5Z" fill="#474747"/><rect x="507" y="308" width="48" height="48" fill="url(#grass)"/><path d="M27.5 118V632M75.5 118V632M123.5 118V632M171.5 118V632M219.5 118V632M267.5 118V632M315.5 118V632M363.5 118V632M411.5 118V632M459.5 118V632M507.5 118V632M555.5 118V632M603.5 118V632M651.5 118V632M699.5 118V632M747.5 118V632M0 164.5H756M0 212.5H756M0 260.5H756M0 308.5H756M0 356.5H756M0 404.5H756M0 452.5H756M0 500.5H756M0 548.5H756M0 596.5H756" stroke="#ffffff" stroke-opacity="0.16" stroke-width="1"/><path d="M699.5 118V591M0 596.5H625" stroke="#ffffff" stroke-opacity="0.85" stroke-width="1"/><rect x="625" y="591" width="131" height="39" rx="5" fill="#ffffff"/><path d="M632.5 593v3.8M632.5 601v3.8M632.5 609v3.8M632.5 617v3.8M632.5 625v3.8M640.5 593v3.8M640.5 601v3.8M640.5 609v3.8M640.5 617v3.8M640.5 625v3.8M648.5 593v3.8M648.5 601v3.8M648.5 609v3.8M648.5 617v3.8M648.5 625v3.8M656.5 593v3.8M656.5 601v3.8M656.5 609v3.8M656.5 617v3.8M656.5 625v3.8M664.5 593v3.8M664.5 601v3.8M664.5 609v3.8M664.5 617v3.8M664.5 625v3.8M672.5 593v3.8M672.5 601v3.8M672.5 609v3.8M672.5 617v3.8M672.5 625v3.8M680.5 593v3.8M680.5 601v3.8M680.5 609v3.8M680.5 617v3.8M680.5 625v3.8M688.5 593v3.8M688.5 601v3.8M688.5 609v3.8M688.5 617v3.8M688.5 625v3.8M696.5 593v3.8M696.5 601v3.8M696.5 609v3.8M696.5 617v3.8M696.5 625v3.8M704.5 593v3.8M704.5 601v3.8M704.5 609v3.8M704.5 617v3.8M704.5 625v3.8M712.5 593v3.8M712.5 601v3.8M712.5 609v3.8M712.5 617v3.8M712.5 625v3.8M720.5 593v3.8M720.5 601v3.8M720.5 609v3.8M720.5 617v3.8M720.5 625v3.8M728.5 593v3.8M728.5 601v3.8M728.5 609v3.8M728.5 617v3.8M728.5 625v3.8M736.5 593v3.8M736.5 601v3.8M736.5 609v3.8M736.5 617v3.8M736.5 625v3.8M744.5 593v3.8M744.5 601v3.8M744.5 609v3.8M744.5 617v3.8M744.5 625v3.8M752.5 593v3.8M752.5 601v3.8M752.5 609v3.8M752.5 617v3.8M752.5 625v3.8" stroke="#111" stroke-width="1.3"/><g fill="#fff"><circle cx="159.5" cy="357.5" r="7.5"/><circle cx="172" cy="349" r="7.5"/><rect x="159" y="352" width="23" height="17.5" rx="3"/><path d="M180 360L190 357.5V369L180 366Z"/></g></svg>
<div class="a" style="left:756px;top:597px;width:2px;height:35px;background:#3a3a3a;"></div>
<div class="a" style="left:748px;top:630px;width:10px;height:2px;background:#3a3a3a;"></div>
<div class="a" style="left:2px;top:120px;width:42px;height:146px;background:#2a2a22;border-radius:5px"></div>
<div class="a" style="left:16px;top:126px;width:16px;height:1px;background:#777;"></div>
<div class="a" style="left:16px;top:129px;width:16px;height:1px;background:#777;"></div>
<div class="a" style="left:5px;top:138px;width:37px;height:20px;background:#4a4a4a;border-radius:2px"></div>
<div class="a" style="left:5px;top:159px;width:37px;height:20px;background:#4a4a4a;"></div>
<div class="a" style="left:5px;top:180px;width:37px;height:20px;background:#4a4a4a;"></div>
<div class="a" style="left:5px;top:201px;width:37px;height:20px;background:#4a4a4a;"></div>
<div class="a" style="left:5px;top:222px;width:37px;height:20px;background:#4a4a4a;"></div>
<div class="a" style="left:5px;top:243px;width:37px;height:20px;background:#4a4a4a;border-radius:2px"></div>
<svg class="i" style="left:16px;top:140px;" width="15" height="16" viewBox="0 0 15 16"><path d="M3 9V5A1.1 1.1 0 0 1 5.2 5V8M5.2 8V2.5A1.1 1.1 0 0 1 7.4 2.5V8M7.4 8V2A1.1 1.1 0 0 1 9.6 2V8M9.6 8V3.5A1.1 1.1 0 0 1 11.8 3.5V10Q11.8 15 7.5 15Q4.5 15 2.5 11.5L0.8 8.5A1.1 1.1 0 0 1 2.6 7.5L3 8.2Z" fill="#c8c8c8"/></svg>
<svg class="i" style="left:16px;top:161px;" width="15" height="15" viewBox="0 0 15 15"><path d="M7.5 1V14M1 7.5H14" stroke="#c8c8c8" stroke-width="1"/><path d="M7.5 0L5 3H10ZM7.5 15L5 12H10ZM0 7.5L3 5V10ZM15 7.5L12 5V10Z" fill="#c8c8c8"/></svg>
<svg class="i" style="left:16px;top:182px;" width="15" height="15" viewBox="0 0 15 15"><path d="M11.5 2.5A6 6 0 0 0 2 9M3.5 12.5A6 6 0 0 0 13 6" fill="none" stroke="#c8c8c8" stroke-width="1.1"/><path d="M9.5 0.5L13 2.5L10 5Z M5.5 14.5L2 12.5L5 10Z" fill="#c8c8c8"/></svg>
<svg class="i" style="left:16px;top:203px;" width="15" height="15" viewBox="0 0 15 15"><rect x="0.5" y="0.5" width="14" height="14" fill="none" stroke="#c8c8c8"/><rect x="0.5" y="9.5" width="5" height="5" fill="none" stroke="#c8c8c8"/><path d="M6 9L12 3M8 3H12V7" fill="none" stroke="#c8c8c8"/></svg>
<svg class="i" style="left:16px;top:224px;" width="15" height="15" viewBox="0 0 15 15"><rect x="1.5" y="1.5" width="12" height="12" fill="none" stroke="#c8c8c8" stroke-width="1"/><rect x="0" y="0" width="3" height="3" fill="#c8c8c8"/><rect x="12" y="0" width="3" height="3" fill="#c8c8c8"/><rect x="0" y="12" width="3" height="3" fill="#c8c8c8"/><rect x="12" y="12" width="3" height="3" fill="#c8c8c8"/></svg>
<svg class="i" style="left:16px;top:245px;" width="15" height="15" viewBox="0 0 15 15"><circle cx="7.5" cy="7.5" r="5.5" fill="none" stroke="#c8c8c8"/><path d="M7.5 3V12M3 7.5H12" stroke="#c8c8c8"/><path d="M0 15L3 15L0 12Z M15 0L12 0L15 3Z" fill="#c8c8c8"/></svg>
<div class="panel" style="left:760px;top:73px;width:532px;height:559px;"><div class="tabstrip"></div></div>
<div class="a" style="left:760px;top:73px;width:96px;height:19px;background:#3c3c3c;border-radius:4px 4px 0 0"></div>
<svg class="i" style="left:768px;top:78px;" width="12" height="10" viewBox="0 0 12 10"><path d="M3.5 1.5H11.5M3.5 5H11.5M3.5 8.5H11.5" stroke="#c4c4c4" stroke-width="1.2"/><path d="M1 0.5V9M0 1.5H2" stroke="#c4c4c4" stroke-width="0.9"/></svg>
<div class="t" style="left:784px;top:78px;font-size:12px;color:#c4c4c4;font-weight:400;letter-spacing:0.3px;">Hierarchy</div>
<svg class="i" style="left:1258px;top:77px;" width="9" height="10" viewBox="0 0 9 10"><path d="M2 4.5V2.5A2 2 0 0 1 6 2.5" fill="none" stroke="#c4c4c4" stroke-width="1.1"/><rect x="0.5" y="5" width="8" height="4.5" fill="none" stroke="#c4c4c4" stroke-width="1.1"/></svg>
<svg class="i" style="left:1278px;top:77px;" width="3" height="11" viewBox="0 0 3 11"><rect width="2.5" height="2.5" fill="#c4c4c4"/><rect y="4" width="2.5" height="2.5" fill="#c4c4c4"/><rect y="8" width="2.5" height="2.5" fill="#c4c4c4"/></svg>
<div class="a" style="left:760px;top:92px;width:532px;height:20px;background:#3c3c3c;"></div>
<svg class="i" style="left:767px;top:96px;" width="12" height="12" viewBox="0 0 12 12"><path d="M6 0V12M0 6H12" stroke="#c4c4c4" stroke-width="2"/></svg>
<svg class="i" style="left:783px;top:100px;" width="8" height="5" viewBox="0 0 8 5"><path d="M0 0H8L4 5Z" fill="#c4c4c4"/></svg>
<div class="a" style="left:963px;top:94px;width:313px;height:16px;background:#2a2a2a;border:1px solid #232323;border-radius:3px;border-top-color:#1a1a1a"></div>
<svg class="i" style="left:968px;top:98px;" width="10" height="8" viewBox="0 0 10 8"><circle cx="3.5" cy="3.5" r="2.5" fill="none" stroke="#c4c4c4" stroke-width="1.1"/><path d="M5.3 5.3L7.5 7.5" stroke="#c4c4c4" stroke-width="1.3"/><path d="M7 2.5H10L8.5 4Z" fill="#c4c4c4"/></svg>
<div class="t" style="left:982px;top:97px;font-size:11px;color:#7a7a7a;font-weight:400;letter-spacing:0px;">All</div>
<div class="a" style="left:1272px;top:94px;width:17px;height:16px;background:#383838;border-radius:0 3px 3px 0"></div>
<svg class="i" style="left:1274px;top:95px;" width="13" height="13" viewBox="0 0 13 13"><rect x="4.5" y="0.5" width="8" height="8" fill="none" stroke="#c4c4c4" stroke-width="1.1"/><rect x="0.5" y="8.5" width="4" height="4" fill="none" stroke="#c4c4c4" stroke-width="1.1"/><path d="M4.5 8.5L10 3M7 3H10V6" fill="none" stroke="#c4c4c4" stroke-width="1.1"/></svg>
<div class="a" style="left:760px;top:112px;width:532px;height:16px;background:#2b2b2b;"></div>
<div class="a" style="left:760px;top:128px;width:32px;height:504px;background:#313131;"></div>
<svg class="i" style="left:795px;top:118px;" width="9" height="8" viewBox="0 0 9 8"><path d="M0 0H9L4.5 8Z" fill="#7a7a7a"/></svg>
<svg class="i" style="left:808px;top:114px;" width="13" height="14" viewBox="0 0 13 14"><path d="M6.5 0.8L12.2 4V10L6.5 13.2L0.8 10V4Z" fill="#fff"/><path d="M6.5 3.5L9.6 5.3V8.7L6.5 10.5L3.4 8.7V5.3Z" fill="#2b2b2b"/><path d="M6.5 7V13M6.5 7L12 4M6.5 7L1 4" stroke="#fff" stroke-width="1.4"/></svg>
<div class="t" style="left:825px;top:114px;font-size:13px;color:#d9d9d9;font-weight:700;letter-spacing:0.2px;">Tile1*</div>
<svg class="i" style="left:1278px;top:115px;" width="3" height="11" viewBox="0 0 3 11"><rect width="2.5" height="2.5" fill="#c4c4c4"/><rect y="4" width="2.5" height="2.5" fill="#c4c4c4"/><rect y="8" width="2.5" height="2.5" fill="#c4c4c4"/></svg>
<svg class="i" style="left:821px;top:130px;" width="13" height="14" viewBox="0 0 13 14"><path d="M6.5 0.7L12.3 3.6V10.2L6.5 13.3L0.7 10.2V3.6Z M0.7 3.6L6.5 6.7L12.3 3.6 M6.5 6.7V13.3" fill="none" stroke="#c8c8c8" stroke-width="1"/></svg>
<div class="t" style="left:838px;top:131px;font-size:12px;color:#c4c4c4;font-weight:400;letter-spacing:0.15px;">Main Camera</div>
<svg class="i" style="left:809px;top:150px;" width="9" height="8" viewBox="0 0 9 8"><path d="M0 0H9L4.5 8Z" fill="#7a7a7a"/></svg>
<svg class="i" style="left:821px;top:146px;" width="13" height="14" viewBox="0 0 13 14"><path d="M6.5 0.7L12.3 3.6V10.2L6.5 13.3L0.7 10.2V3.6Z M0.7 3.6L6.5 6.7L12.3 3.6 M6.5 6.7V13.3" fill="none" stroke="#c8c8c8" stroke-width="1"/></svg>
<div class="t" style="left:838px;top:147px;font-size:12px;color:#c4c4c4;font-weight:400;letter-spacing:0.3px;">Grid</div>
<svg class="i" style="left:835px;top:162px;" width="13" height="14" viewBox="0 0 13 14"><path d="M6.5 0.7L12.3 3.6V10.2L6.5 13.3L0.7 10.2V3.6Z M0.7 3.6L6.5 6.7L12.3 3.6 M6.5 6.7V13.3" fill="none" stroke="#c8c8c8" stroke-width="1"/></svg>
<div class="t" style="left:852px;top:163px;font-size:12px;color:#c4c4c4;font-weight:400;letter-spacing:0.3px;">Tilemap</div>
<div class="panel" style="left:1294px;top:73px;width:626px;height:945px;background:#3c3c3c"><div class="tabstrip"></div></div>
<div class="a" style="left:1391px;top:73px;width:84px;height:19px;background:#3c3c3c;border-radius:4px 4px 0 0"></div>
<svg class="i" style="left:1303px;top:78px;" width="10" height="10" viewBox="0 0 10 10"><circle cx="5" cy="5" r="5" fill="#c4c4c4"/><rect x="4.2" y="4" width="1.6" height="4.5" fill="#282828"/><rect x="4.2" y="1.8" width="1.6" height="1.5" fill="#282828"/></svg>
<div class="t" style="left:1318px;top:78px;font-size:12px;color:#c4c4c4;font-weight:400;letter-spacing:0.3px;">Inspector</div>
<div class="t" style="left:1398px;top:78px;font-size:12px;color:#c4c4c4;font-weight:400;letter-spacing:0.25px;">Tile Palette</div>
<svg class="i" style="left:1905px;top:77px;" width="3" height="11" viewBox="0 0 3 11"><rect width="2.5" height="2.5" fill="#c4c4c4"/><rect y="4" width="2.5" height="2.5" fill="#c4c4c4"/><rect y="8" width="2.5" height="2.5" fill="#c4c4c4"/></svg>
<div class="a" style="left:1294px;top:92px;width:626px;height:55px;background:#3c3c3c;"></div>
<div class="a" style="left:1294px;top:147px;width:626px;height:1px;background:#1e1e1e;"></div>
<div class="a" style="left:1431px;top:97px;width:351px;height:18px;background:#232323;border-radius:3px"></div>
<div class="a" style="left:1432px;top:98px;width:31px;height:16px;background:#3a3a3a;"></div>
<svg class="i" style="left:1440px;top:99px;" width="16" height="16" viewBox="0 0 16 16"><path d="M4 2L12 8.5L8 9L10 13.5L8.5 14L6.5 9.5L4 12Z" fill="#c8c8c8"/></svg>
<div class="a" style="left:1464px;top:98px;width:31px;height:16px;background:#3a3a3a;"></div>
<svg class="i" style="left:1472px;top:99px;" width="16" height="16" viewBox="0 0 16 16"><path d="M8 1L6 3.5H10ZM8 15L6 12.5H10ZM1 8L3.5 6V10ZM15 8L12.5 6V10Z" fill="#c8c8c8"/><rect x="5" y="5" width="6" height="6" fill="#c8c8c8"/></svg>
<div class="a" style="left:1496px;top:98px;width:31px;height:16px;background:#46607c;"></div>
<svg class="i" style="left:1504px;top:99px;" width="16" height="16" viewBox="0 0 16 16"><path d="M14 2L8 9L9.5 10.5Z" fill="#e0e0e0"/><path d="M7 10Q4 10 4 13.5Q6.5 14.5 8.5 11.5Z" fill="#e0e0e0"/></svg>
<div class="a" style="left:1528px;top:98px;width:31px;height:16px;background:#3a3a3a;"></div>
<svg class="i" style="left:1536px;top:99px;" width="16" height="16" viewBox="0 0 16 16"><rect x="2" y="2" width="9" height="9" fill="none" stroke="#c8c8c8" stroke-dasharray="2 1.3"/><rect x="4" y="4" width="5" height="5" fill="#c8c8c8"/><path d="M9 9L14 12.5L11.5 13L12.5 15.5L9 15Z" fill="#c8c8c8"/></svg>
<div class="a" style="left:1560px;top:98px;width:31px;height:16px;background:#3a3a3a;"></div>
<svg class="i" style="left:1568px;top:99px;" width="16" height="16" viewBox="0 0 16 16"><path d="M12.5 1.5A2 2 0 0 1 14.5 3.5L12 6L13 7L12 8L8 4L9 3L10 4Z" fill="#c8c8c8"/><path d="M8.5 5.5L3 11L2.5 13.5L5 13L10.5 7.5" fill="none" stroke="#c8c8c8" stroke-width="1.4"/></svg>
<div class="a" style="left:1592px;top:98px;width:31px;height:16px;background:#3a3a3a;"></div>
<svg class="i" style="left:1600px;top:99px;" width="16" height="16" viewBox="0 0 16 16"><path d="M9.5 2L14 6.5L8 12.5H4.5L2 10Z" fill="#c8c8c8"/><path d="M2 10L5.5 6.5L9.5 10.5L7.5 12.5" fill="#3a3a3a" opacity="0.5"/><path d="M4 14H13" stroke="#c8c8c8"/></svg>
<div class="a" style="left:1623px;top:98px;width:31px;height:16px;background:#3a3a3a;"></div>
<svg class="i" style="left:1631px;top:99px;" width="16" height="16" viewBox="0 0 16 16"><path d="M4 6L9 1L14.5 6.5L9 12Z" fill="none" stroke="#c8c8c8" stroke-width="1.3"/><path d="M5 7H14L9 12Z" fill="#c8c8c8"/><path d="M3 8Q1 12 2.5 13.5Q4.5 13 3 8Z" fill="#c8c8c8"/></svg>
<div class="a" style="left:1655px;top:98px;width:31px;height:16px;background:#3a3a3a;"></div>
<svg class="i" style="left:1663px;top:99px;" width="16" height="16" viewBox="0 0 16 16"><path d="M3 6A6 6 0 0 1 13 5" fill="none" stroke="#c8c8c8" stroke-width="1.3"/><path d="M1.5 3.5L4.5 7L5 3Z" fill="#c8c8c8"/><path d="M8 7L12 11L8 15L4 11Z" fill="#c8c8c8"/></svg>
<div class="a" style="left:1687px;top:98px;width:31px;height:16px;background:#3a3a3a;"></div>
<svg class="i" style="left:1695px;top:99px;" width="16" height="16" viewBox="0 0 16 16"><path d="M13 6A6 6 0 0 0 3 5" fill="none" stroke="#c8c8c8" stroke-width="1.3"/><path d="M14.5 3.5L11.5 7L11 3Z" fill="#c8c8c8"/><path d="M8 7L12 11L8 15L4 11Z" fill="#c8c8c8"/></svg>
<div class="a" style="left:1719px;top:98px;width:31px;height:16px;background:#3a3a3a;"></div>
<svg class="i" style="left:1727px;top:99px;" width="16" height="16" viewBox="0 0 16 16"><path d="M8 1V15" stroke="#c8c8c8" stroke-width="1.3"/><path d="M1 4L6 8L1 12Z" fill="#c8c8c8"/><path d="M15 4L10 8L15 12Z" fill="none" stroke="#c8c8c8"/></svg>
<div class="a" style="left:1751px;top:98px;width:30px;height:16px;background:#3a3a3a;"></div>
<svg class="i" style="left:1759px;top:99px;" width="16" height="16" viewBox="0 0 16 16"><path d="M1 8H15" stroke="#c8c8c8" stroke-width="1.3"/><path d="M4 1H12L8 6Z" fill="none" stroke="#c8c8c8"/><path d="M4 15H12L8 10Z" fill="#c8c8c8"/></svg>
<svg class="i" style="left:1465px;top:124px;" width="16" height="16" viewBox="0 0 16 16"><path d="M1 10L8 13.5L15 10L8 6.5Z" fill="#c8c8c8"/><path d="M2 5L8 2L14 5L8 8Z" fill="#3c3c3c" stroke="#9b7fe8" stroke-width="1.2"/></svg>
<div class="a" style="left:1484px;top:124px;width:198px;height:17px;background:#515151;border-radius:3px;border-bottom:1px solid #2a2a2a"></div>
<div class="t" style="left:1490px;top:126px;font-size:12px;color:#c4c4c4;font-weight:400;letter-spacing:0.3px;">Tilemap</div>
<svg class="i" style="left:1668px;top:130px;" width="8" height="5" viewBox="0 0 8 5"><path d="M0 0H8L4 5Z" fill="#c4c4c4"/></svg>
<div class="a" style="left:1687px;top:123px;width:63px;height:18px;background:#232323;border-radius:3px"></div>
<div class="a" style="left:1688px;top:124px;width:30px;height:16px;background:#3a3a3a;"></div>
<div class="a" style="left:1719px;top:124px;width:30px;height:16px;background:#3a3a3a;"></div>
<svg class="i" style="left:1695px;top:125px;" width="16" height="15" viewBox="0 0 16 15"><g fill="#9b7fe8"><rect x="1" y="1" width="2.5" height="2.5"/><rect x="5" y="1" width="2.5" height="2.5"/><rect x="9" y="1" width="2.5" height="2.5"/><rect x="1" y="5" width="2.5" height="2.5"/><rect x="1" y="9" width="2.5" height="2.5"/></g><circle cx="10" cy="10" r="4.5" fill="#c8c8c8"/><circle cx="8.5" cy="9" r="1" fill="#3a3a3a"/><circle cx="11.5" cy="8.5" r="1" fill="#3a3a3a"/></svg>
<svg class="i" style="left:1726px;top:125px;" width="16" height="15" viewBox="0 0 16 15"><path d="M11 1A2 2 0 0 1 13 3L11 5L12 6L11 7L7 3L8 2L9 3Z" fill="#c8c8c8"/><path d="M7.5 4.5L2 10L1.5 12.5L4 12L9.5 6.5" fill="none" stroke="#c8c8c8" stroke-width="1.3"/><path d="M12 8L13 10.5L15.5 10.8L13.6 12.5L14.2 15L12 13.7L9.8 15L10.4 12.5L8.5 10.8L11 10.5Z" fill="#f0c020"/></svg>
<svg class="i" style="left:1300px;top:154px;" width="16" height="15" viewBox="0 0 16 15"><g fill="#9b7fe8"><rect x="1" y="1" width="2.5" height="2.5"/><rect x="5" y="1" width="2.5" height="2.5"/><rect x="9" y="1" width="2.5" height="2.5"/><rect x="1" y="5" width="2.5" height="2.5"/><rect x="1" y="9" width="2.5" height="2.5"/></g><circle cx="10" cy="10" r="4.5" fill="#c8c8c8"/><circle cx="8.5" cy="9" r="1" fill="#383838"/><circle cx="11.5" cy="8.5" r="1" fill="#383838"/></svg>
<div class="a" style="left:1323px;top:153px;width:154px;height:18px;background:#515151;border-radius:3px;border-bottom:1px solid #2a2a2a"></div>
<div class="t" style="left:1327px;top:156px;font-size:12px;color:#c4c4c4;font-weight:400;letter-spacing:0.3px;">Ground</div>
<svg class="i" style="left:1464px;top:159px;" width="8" height="5" viewBox="0 0 8 5"><path d="M0 0H8L4 5Z" fill="#c4c4c4"/></svg>
<div class="a" style="left:1817px;top:152px;width:95px;height:19px;background:#232323;border-radius:3px"></div>
<div class="a" style="left:1818px;top:153px;width:31px;height:17px;background:#3a3a3a;"></div>
<div class="a" style="left:1850px;top:153px;width:30px;height:17px;background:#46607c;"></div>
<div class="a" style="left:1881px;top:153px;width:30px;height:17px;background:#3a3a3a;"></div>
<svg class="i" style="left:1826px;top:154px;" width="15" height="15" viewBox="0 0 15 15"><path d="M12 1.5L14 3.5L5 12.5L2 13.5L3 10.5Z" fill="#c8c8c8"/></svg>
<svg class="i" style="left:1858px;top:154px;" width="15" height="15" viewBox="0 0 15 15"><path d="M4.5 1V14M10.5 1V14M1 4.5H14M1 10.5H14" stroke="#d8d8d8" stroke-width="1.3"/></svg>
<svg class="i" style="left:1889px;top:154px;" width="15" height="15" viewBox="0 0 15 15"><circle cx="7.5" cy="7.5" r="6" fill="none" stroke="#c8c8c8" stroke-width="1.3"/><path d="M7.5 1.5V7.5L2.3 10.5M7.5 7.5L12.7 10.5M2 5H13" fill="none" stroke="#c8c8c8" stroke-width="1.1"/></svg>
<svg class="i" style="left:1299px;top:175px;overflow:hidden" width="621" height="288" viewBox="1299 175 621 288"><defs><pattern id="pgrass" patternUnits="userSpaceOnUse" x="1383" y="175" width="104.48" height="104.48"><g shape-rendering="crispEdges"><rect width="104.48" height="104.48" fill="#d8ec8f"/><rect x="30.47" y="0.00" width="4.35" height="2.18" fill="#b7dc95"/><rect x="39.18" y="0.00" width="15.24" height="2.18" fill="#b7dc95"/><rect x="87.06" y="0.00" width="10.88" height="2.18" fill="#b7dc95"/><rect x="37.00" y="2.18" width="2.18" height="2.18" fill="#b7dc95"/><rect x="43.53" y="2.18" width="4.35" height="2.18" fill="#b7dc95"/><rect x="54.41" y="2.18" width="2.18" height="2.18" fill="#b7dc95"/><rect x="89.24" y="2.18" width="8.71" height="2.18" fill="#b7dc95"/><rect x="10.88" y="4.35" width="2.18" height="2.18" fill="#b7dc95"/><rect x="17.41" y="4.35" width="6.53" height="2.18" fill="#b7dc95"/><rect x="32.65" y="4.35" width="13.06" height="2.18" fill="#b7dc95"/><rect x="50.06" y="4.35" width="2.18" height="2.18" fill="#b7dc95"/><rect x="54.41" y="4.35" width="2.18" height="2.18" fill="#b7dc95"/><rect x="87.06" y="4.35" width="15.24" height="2.18" fill="#b7dc95"/><rect x="8.71" y="6.53" width="8.71" height="2.18" fill="#b7dc95"/><rect x="19.59" y="6.53" width="4.35" height="2.18" fill="#b7dc95"/><rect x="34.83" y="6.53" width="4.35" height="2.18" fill="#b7dc95"/><rect x="50.06" y="6.53" width="4.35" height="2.18" fill="#b7dc95"/><rect x="89.24" y="6.53" width="13.06" height="2.18" fill="#b7dc95"/><rect x="8.71" y="8.71" width="10.88" height="2.18" fill="#b7dc95"/><rect x="28.30" y="8.71" width="2.18" height="2.18" fill="#b7dc95"/><rect x="32.65" y="8.71" width="19.59" height="2.18" fill="#b7dc95"/><rect x="54.41" y="8.71" width="2.18" height="2.18" fill="#b7dc95"/><rect x="87.06" y="8.71" width="13.06" height="2.18" fill="#b7dc95"/><rect x="102.30" y="8.71" width="2.18" height="2.18" fill="#b7dc95"/><rect x="6.53" y="10.88" width="15.24" height="2.18" fill="#b7dc95"/><rect x="32.65" y="10.88" width="15.24" height="2.18" fill="#b7dc95"/><rect x="50.06" y="10.88" width="2.18" height="2.18" fill="#b7dc95"/><rect x="56.59" y="10.88" width="4.35" height="2.18" fill="#b7dc95"/><rect x="63.12" y="10.88" width="6.53" height="2.18" fill="#b7dc95"/><rect x="91.42" y="10.88" width="13.06" height="2.18" fill="#b7dc95"/><rect x="6.53" y="13.06" width="15.24" height="2.18" fill="#b7dc95"/><rect x="30.47" y="13.06" width="21.77" height="2.18" fill="#b7dc95"/><rect x="56.59" y="13.06" width="2.18" height="2.18" fill="#b7dc95"/><rect x="65.30" y="13.06" width="6.53" height="2.18" fill="#b7dc95"/><rect x="87.06" y="13.06" width="2.18" height="2.18" fill="#b7dc95"/><rect x="91.42" y="13.06" width="13.06" height="2.18" fill="#b7dc95"/><rect x="6.53" y="15.24" width="19.59" height="2.18" fill="#b7dc95"/><rect x="34.83" y="15.24" width="8.71" height="2.18" fill="#b7dc95"/><rect x="45.71" y="15.24" width="2.18" height="2.18" fill="#b7dc95"/><rect x="50.06" y="15.24" width="4.35" height="2.18" fill="#b7dc95"/><rect x="56.59" y="15.24" width="6.53" height="2.18" fill="#b7dc95"/><rect x="65.30" y="15.24" width="4.35" height="2.18" fill="#b7dc95"/><rect x="89.24" y="15.24" width="4.35" height="2.18" fill="#b7dc95"/><rect x="95.77" y="15.24" width="8.71" height="2.18" fill="#b7dc95"/><rect x="6.53" y="17.41" width="19.59" height="2.18" fill="#b7dc95"/><rect x="28.30" y="17.41" width="2.18" height="2.18" fill="#b7dc95"/><rect x="37.00" y="17.41" width="2.18" height="2.18" fill="#b7dc95"/><rect x="41.36" y="17.41" width="2.18" height="2.18" fill="#b7dc95"/><rect x="45.71" y="17.41" width="2.18" height="2.18" fill="#b7dc95"/><rect x="56.59" y="17.41" width="2.18" height="2.18" fill="#b7dc95"/><rect x="60.94" y="17.41" width="2.18" height="2.18" fill="#b7dc95"/><rect x="97.95" y="17.41" width="6.53" height="2.18" fill="#b7dc95"/><rect x="6.53" y="19.59" width="19.59" height="2.18" fill="#b7dc95"/><rect x="28.30" y="19.59" width="2.18" height="2.18" fill="#b7dc95"/><rect x="52.24" y="19.59" width="2.18" height="2.18" fill="#b7dc95"/><rect x="56.59" y="19.59" width="13.06" height="2.18" fill="#b7dc95"/><rect x="97.95" y="19.59" width="6.53" height="2.18" fill="#b7dc95"/><rect x="6.53" y="21.77" width="15.24" height="2.18" fill="#b7dc95"/><rect x="52.24" y="21.77" width="13.06" height="2.18" fill="#b7dc95"/><rect x="102.30" y="21.77" width="2.18" height="2.18" fill="#b7dc95"/><rect x="2.18" y="23.94" width="2.18" height="2.18" fill="#b7dc95"/><rect x="6.53" y="23.94" width="15.24" height="2.18" fill="#b7dc95"/><rect x="23.94" y="23.94" width="4.35" height="2.18" fill="#b7dc95"/><rect x="50.06" y="23.94" width="6.53" height="2.18" fill="#b7dc95"/><rect x="58.77" y="23.94" width="6.53" height="2.18" fill="#b7dc95"/><rect x="100.12" y="23.94" width="4.35" height="2.18" fill="#b7dc95"/><rect x="4.35" y="26.12" width="2.18" height="2.18" fill="#b7dc95"/><rect x="8.71" y="26.12" width="21.77" height="2.18" fill="#b7dc95"/><rect x="47.89" y="26.12" width="13.06" height="2.18" fill="#b7dc95"/><rect x="63.12" y="26.12" width="6.53" height="2.18" fill="#b7dc95"/><rect x="97.95" y="26.12" width="2.18" height="2.18" fill="#b7dc95"/><rect x="102.30" y="26.12" width="2.18" height="2.18" fill="#b7dc95"/><rect x="4.35" y="28.30" width="2.18" height="2.18" fill="#b7dc95"/><rect x="10.88" y="28.30" width="6.53" height="2.18" fill="#b7dc95"/><rect x="19.59" y="28.30" width="13.06" height="2.18" fill="#b7dc95"/><rect x="52.24" y="28.30" width="6.53" height="2.18" fill="#b7dc95"/><rect x="60.94" y="28.30" width="2.18" height="2.18" fill="#b7dc95"/><rect x="65.30" y="28.30" width="4.35" height="2.18" fill="#b7dc95"/><rect x="102.30" y="28.30" width="2.18" height="2.18" fill="#b7dc95"/><rect x="4.35" y="30.47" width="26.12" height="2.18" fill="#b7dc95"/><rect x="32.65" y="30.47" width="2.18" height="2.18" fill="#b7dc95"/><rect x="47.89" y="30.47" width="13.06" height="2.18" fill="#b7dc95"/><rect x="63.12" y="30.47" width="4.35" height="2.18" fill="#b7dc95"/><rect x="69.65" y="30.47" width="2.18" height="2.18" fill="#b7dc95"/><rect x="97.95" y="30.47" width="6.53" height="2.18" fill="#b7dc95"/><rect x="8.71" y="32.65" width="23.94" height="2.18" fill="#b7dc95"/><rect x="34.83" y="32.65" width="2.18" height="2.18" fill="#b7dc95"/><rect x="43.53" y="32.65" width="2.18" height="2.18" fill="#b7dc95"/><rect x="47.89" y="32.65" width="13.06" height="2.18" fill="#b7dc95"/><rect x="67.47" y="32.65" width="2.18" height="2.18" fill="#b7dc95"/><rect x="71.83" y="32.65" width="6.53" height="2.18" fill="#b7dc95"/><rect x="100.12" y="32.65" width="4.35" height="2.18" fill="#b7dc95"/><rect x="6.53" y="34.83" width="26.12" height="2.18" fill="#b7dc95"/><rect x="37.00" y="34.83" width="21.77" height="2.18" fill="#b7dc95"/><rect x="65.30" y="34.83" width="2.18" height="2.18" fill="#b7dc95"/><rect x="74.00" y="34.83" width="8.71" height="2.18" fill="#b7dc95"/><rect x="95.77" y="34.83" width="8.71" height="2.18" fill="#b7dc95"/><rect x="6.53" y="37.00" width="4.35" height="2.18" fill="#b7dc95"/><rect x="13.06" y="37.00" width="45.71" height="2.18" fill="#b7dc95"/><rect x="69.65" y="37.00" width="15.24" height="2.18" fill="#b7dc95"/><rect x="97.95" y="37.00" width="6.53" height="2.18" fill="#b7dc95"/><rect x="0.00" y="39.18" width="2.18" height="2.18" fill="#b7dc95"/><rect x="4.35" y="39.18" width="8.71" height="2.18" fill="#b7dc95"/><rect x="15.24" y="39.18" width="50.06" height="2.18" fill="#b7dc95"/><rect x="69.65" y="39.18" width="17.41" height="2.18" fill="#b7dc95"/><rect x="95.77" y="39.18" width="8.71" height="2.18" fill="#b7dc95"/><rect x="0.00" y="41.36" width="4.35" height="2.18" fill="#b7dc95"/><rect x="6.53" y="41.36" width="4.35" height="2.18" fill="#b7dc95"/><rect x="13.06" y="41.36" width="4.35" height="2.18" fill="#b7dc95"/><rect x="19.59" y="41.36" width="41.36" height="2.18" fill="#b7dc95"/><rect x="67.47" y="41.36" width="15.24" height="2.18" fill="#b7dc95"/><rect x="84.89" y="41.36" width="4.35" height="2.18" fill="#b7dc95"/><rect x="95.77" y="41.36" width="8.71" height="2.18" fill="#b7dc95"/><rect x="0.00" y="43.53" width="6.53" height="2.18" fill="#b7dc95"/><rect x="8.71" y="43.53" width="2.18" height="2.18" fill="#b7dc95"/><rect x="15.24" y="43.53" width="4.35" height="2.18" fill="#b7dc95"/><rect x="21.77" y="43.53" width="8.71" height="2.18" fill="#b7dc95"/><rect x="32.65" y="43.53" width="4.35" height="2.18" fill="#b7dc95"/><rect x="39.18" y="43.53" width="21.77" height="2.18" fill="#b7dc95"/><rect x="74.00" y="43.53" width="13.06" height="2.18" fill="#b7dc95"/><rect x="97.95" y="43.53" width="6.53" height="2.18" fill="#b7dc95"/><rect x="0.00" y="45.71" width="6.53" height="2.18" fill="#b7dc95"/><rect x="23.94" y="45.71" width="2.18" height="2.18" fill="#b7dc95"/><rect x="45.71" y="45.71" width="13.06" height="2.18" fill="#b7dc95"/><rect x="69.65" y="45.71" width="2.18" height="2.18" fill="#b7dc95"/><rect x="74.00" y="45.71" width="10.88" height="2.18" fill="#b7dc95"/><rect x="102.30" y="45.71" width="2.18" height="2.18" fill="#b7dc95"/><rect x="0.00" y="47.89" width="4.35" height="2.18" fill="#b7dc95"/><rect x="6.53" y="47.89" width="2.18" height="2.18" fill="#b7dc95"/><rect x="47.89" y="47.89" width="13.06" height="2.18" fill="#b7dc95"/><rect x="74.00" y="47.89" width="4.35" height="2.18" fill="#b7dc95"/><rect x="80.53" y="47.89" width="2.18" height="2.18" fill="#b7dc95"/><rect x="102.30" y="47.89" width="2.18" height="2.18" fill="#b7dc95"/><rect x="0.00" y="50.06" width="4.35" height="2.18" fill="#b7dc95"/><rect x="45.71" y="50.06" width="15.24" height="2.18" fill="#b7dc95"/><rect x="71.83" y="50.06" width="2.18" height="2.18" fill="#b7dc95"/><rect x="76.18" y="50.06" width="6.53" height="2.18" fill="#b7dc95"/><rect x="100.12" y="50.06" width="4.35" height="2.18" fill="#b7dc95"/><rect x="0.00" y="52.24" width="6.53" height="2.18" fill="#b7dc95"/><rect x="47.89" y="52.24" width="13.06" height="2.18" fill="#b7dc95"/><rect x="69.65" y="52.24" width="6.53" height="2.18" fill="#b7dc95"/><rect x="84.89" y="52.24" width="2.18" height="2.18" fill="#b7dc95"/><rect x="0.00" y="54.41" width="4.35" height="2.18" fill="#b7dc95"/><rect x="6.53" y="54.41" width="2.18" height="2.18" fill="#b7dc95"/><rect x="45.71" y="54.41" width="17.41" height="2.18" fill="#b7dc95"/><rect x="74.00" y="54.41" width="10.88" height="2.18" fill="#b7dc95"/><rect x="100.12" y="54.41" width="4.35" height="2.18" fill="#b7dc95"/><rect x="0.00" y="56.59" width="4.35" height="2.18" fill="#b7dc95"/><rect x="47.89" y="56.59" width="13.06" height="2.18" fill="#b7dc95"/><rect x="63.12" y="56.59" width="2.18" height="2.18" fill="#b7dc95"/><rect x="67.47" y="56.59" width="2.18" height="2.18" fill="#b7dc95"/><rect x="71.83" y="56.59" width="13.06" height="2.18" fill="#b7dc95"/><rect x="45.71" y="58.77" width="15.24" height="2.18" fill="#b7dc95"/><rect x="63.12" y="58.77" width="2.18" height="2.18" fill="#b7dc95"/><rect x="69.65" y="58.77" width="2.18" height="2.18" fill="#b7dc95"/><rect x="74.00" y="58.77" width="15.24" height="2.18" fill="#b7dc95"/><rect x="95.77" y="58.77" width="2.18" height="2.18" fill="#b7dc95"/><rect x="100.12" y="58.77" width="4.35" height="2.18" fill="#b7dc95"/><rect x="0.00" y="60.94" width="2.18" height="2.18" fill="#b7dc95"/><rect x="23.94" y="60.94" width="2.18" height="2.18" fill="#b7dc95"/><rect x="32.65" y="60.94" width="2.18" height="2.18" fill="#b7dc95"/><rect x="43.53" y="60.94" width="60.94" height="2.18" fill="#b7dc95"/><rect x="23.94" y="63.12" width="4.35" height="2.18" fill="#b7dc95"/><rect x="30.47" y="63.12" width="2.18" height="2.18" fill="#b7dc95"/><rect x="43.53" y="63.12" width="19.59" height="2.18" fill="#b7dc95"/><rect x="65.30" y="63.12" width="39.18" height="2.18" fill="#b7dc95"/><rect x="19.59" y="65.30" width="2.18" height="2.18" fill="#b7dc95"/><rect x="23.94" y="65.30" width="2.18" height="2.18" fill="#b7dc95"/><rect x="32.65" y="65.30" width="4.35" height="2.18" fill="#b7dc95"/><rect x="39.18" y="65.30" width="2.18" height="2.18" fill="#b7dc95"/><rect x="43.53" y="65.30" width="60.94" height="2.18" fill="#b7dc95"/><rect x="23.94" y="67.47" width="2.18" height="2.18" fill="#b7dc95"/><rect x="32.65" y="67.47" width="10.88" height="2.18" fill="#b7dc95"/><rect x="45.71" y="67.47" width="19.59" height="2.18" fill="#b7dc95"/><rect x="67.47" y="67.47" width="37.00" height="2.18" fill="#b7dc95"/><rect x="0.00" y="69.65" width="4.35" height="2.18" fill="#b7dc95"/><rect x="19.59" y="69.65" width="8.71" height="2.18" fill="#b7dc95"/><rect x="30.47" y="69.65" width="2.18" height="2.18" fill="#b7dc95"/><rect x="37.00" y="69.65" width="32.65" height="2.18" fill="#b7dc95"/><rect x="71.83" y="69.65" width="32.65" height="2.18" fill="#b7dc95"/><rect x="4.35" y="71.83" width="2.18" height="2.18" fill="#b7dc95"/><rect x="21.77" y="71.83" width="69.65" height="2.18" fill="#b7dc95"/><rect x="97.95" y="71.83" width="6.53" height="2.18" fill="#b7dc95"/><rect x="4.35" y="74.00" width="2.18" height="2.18" fill="#b7dc95"/><rect x="21.77" y="74.00" width="39.18" height="2.18" fill="#b7dc95"/><rect x="67.47" y="74.00" width="15.24" height="2.18" fill="#b7dc95"/><rect x="84.89" y="74.00" width="2.18" height="2.18" fill="#b7dc95"/><rect x="95.77" y="74.00" width="8.71" height="2.18" fill="#b7dc95"/><rect x="0.00" y="76.18" width="2.18" height="2.18" fill="#b7dc95"/><rect x="4.35" y="76.18" width="2.18" height="2.18" fill="#b7dc95"/><rect x="23.94" y="76.18" width="39.18" height="2.18" fill="#b7dc95"/><rect x="65.30" y="76.18" width="17.41" height="2.18" fill="#b7dc95"/><rect x="97.95" y="76.18" width="6.53" height="2.18" fill="#b7dc95"/><rect x="0.00" y="78.36" width="2.18" height="2.18" fill="#b7dc95"/><rect x="4.35" y="78.36" width="2.18" height="2.18" fill="#b7dc95"/><rect x="21.77" y="78.36" width="45.71" height="2.18" fill="#b7dc95"/><rect x="69.65" y="78.36" width="17.41" height="2.18" fill="#b7dc95"/><rect x="97.95" y="78.36" width="2.18" height="2.18" fill="#b7dc95"/><rect x="102.30" y="78.36" width="2.18" height="2.18" fill="#b7dc95"/><rect x="0.00" y="80.53" width="4.35" height="2.18" fill="#b7dc95"/><rect x="21.77" y="80.53" width="43.53" height="2.18" fill="#b7dc95"/><rect x="69.65" y="80.53" width="2.18" height="2.18" fill="#b7dc95"/><rect x="74.00" y="80.53" width="10.88" height="2.18" fill="#b7dc95"/><rect x="100.12" y="80.53" width="4.35" height="2.18" fill="#b7dc95"/><rect x="0.00" y="82.71" width="2.18" height="2.18" fill="#b7dc95"/><rect x="19.59" y="82.71" width="2.18" height="2.18" fill="#b7dc95"/><rect x="23.94" y="82.71" width="4.35" height="2.18" fill="#b7dc95"/><rect x="30.47" y="82.71" width="30.47" height="2.18" fill="#b7dc95"/><rect x="69.65" y="82.71" width="2.18" height="2.18" fill="#b7dc95"/><rect x="74.00" y="82.71" width="8.71" height="2.18" fill="#b7dc95"/><rect x="100.12" y="82.71" width="4.35" height="2.18" fill="#b7dc95"/><rect x="0.00" y="84.89" width="4.35" height="2.18" fill="#b7dc95"/><rect x="26.12" y="84.89" width="2.18" height="2.18" fill="#b7dc95"/><rect x="30.47" y="84.89" width="28.30" height="2.18" fill="#b7dc95"/><rect x="60.94" y="84.89" width="2.18" height="2.18" fill="#b7dc95"/><rect x="71.83" y="84.89" width="13.06" height="2.18" fill="#b7dc95"/><rect x="2.18" y="87.06" width="4.35" height="2.18" fill="#b7dc95"/><rect x="32.65" y="87.06" width="28.30" height="2.18" fill="#b7dc95"/><rect x="74.00" y="87.06" width="8.71" height="2.18" fill="#b7dc95"/><rect x="84.89" y="87.06" width="2.18" height="2.18" fill="#b7dc95"/><rect x="6.53" y="89.24" width="2.18" height="2.18" fill="#b7dc95"/><rect x="37.00" y="89.24" width="23.94" height="2.18" fill="#b7dc95"/><rect x="76.18" y="89.24" width="13.06" height="2.18" fill="#b7dc95"/><rect x="34.83" y="91.42" width="26.12" height="2.18" fill="#b7dc95"/><rect x="74.00" y="91.42" width="10.88" height="2.18" fill="#b7dc95"/><rect x="4.35" y="93.59" width="2.18" height="2.18" fill="#b7dc95"/><rect x="34.83" y="93.59" width="23.94" height="2.18" fill="#b7dc95"/><rect x="71.83" y="93.59" width="2.18" height="2.18" fill="#b7dc95"/><rect x="76.18" y="93.59" width="8.71" height="2.18" fill="#b7dc95"/><rect x="87.06" y="93.59" width="2.18" height="2.18" fill="#b7dc95"/><rect x="8.71" y="95.77" width="2.18" height="2.18" fill="#b7dc95"/><rect x="32.65" y="95.77" width="2.18" height="2.18" fill="#b7dc95"/><rect x="39.18" y="95.77" width="19.59" height="2.18" fill="#b7dc95"/><rect x="76.18" y="95.77" width="10.88" height="2.18" fill="#b7dc95"/><rect x="10.88" y="97.95" width="2.18" height="2.18" fill="#b7dc95"/><rect x="28.30" y="97.95" width="2.18" height="2.18" fill="#b7dc95"/><rect x="45.71" y="97.95" width="10.88" height="2.18" fill="#b7dc95"/><rect x="74.00" y="97.95" width="10.88" height="2.18" fill="#b7dc95"/><rect x="6.53" y="100.12" width="2.18" height="2.18" fill="#b7dc95"/><rect x="13.06" y="100.12" width="6.53" height="2.18" fill="#b7dc95"/><rect x="21.77" y="100.12" width="6.53" height="2.18" fill="#b7dc95"/><rect x="30.47" y="100.12" width="2.18" height="2.18" fill="#b7dc95"/><rect x="52.24" y="100.12" width="6.53" height="2.18" fill="#b7dc95"/><rect x="76.18" y="100.12" width="8.71" height="2.18" fill="#b7dc95"/><rect x="102.30" y="100.12" width="2.18" height="2.18" fill="#b7dc95"/><rect x="8.71" y="102.30" width="26.12" height="2.18" fill="#b7dc95"/><rect x="47.89" y="102.30" width="8.71" height="2.18" fill="#b7dc95"/><rect x="76.18" y="102.30" width="10.88" height="2.18" fill="#b7dc95"/><rect x="100.12" y="102.30" width="4.35" height="2.18" fill="#b7dc95"/><rect x="39.18" y="0.00" width="2.18" height="2.18" fill="#9fd3a0"/><rect x="76.18" y="0.00" width="2.18" height="2.18" fill="#9fd3a0"/><rect x="82.71" y="0.00" width="2.18" height="2.18" fill="#9fd3a0"/><rect x="37.00" y="2.18" width="4.35" height="2.18" fill="#9fd3a0"/><rect x="74.00" y="2.18" width="6.53" height="2.18" fill="#9fd3a0"/><rect x="39.18" y="4.35" width="4.35" height="2.18" fill="#9fd3a0"/><rect x="78.36" y="4.35" width="4.35" height="2.18" fill="#9fd3a0"/><rect x="39.18" y="6.53" width="2.18" height="2.18" fill="#9fd3a0"/><rect x="65.30" y="10.88" width="2.18" height="2.18" fill="#9fd3a0"/><rect x="41.36" y="15.24" width="2.18" height="2.18" fill="#9fd3a0"/><rect x="65.30" y="15.24" width="2.18" height="2.18" fill="#9fd3a0"/><rect x="37.00" y="17.41" width="2.18" height="2.18" fill="#9fd3a0"/><rect x="41.36" y="17.41" width="2.18" height="2.18" fill="#9fd3a0"/><rect x="63.12" y="17.41" width="6.53" height="2.18" fill="#9fd3a0"/><rect x="13.06" y="21.77" width="2.18" height="2.18" fill="#9fd3a0"/><rect x="39.18" y="21.77" width="4.35" height="2.18" fill="#9fd3a0"/><rect x="67.47" y="21.77" width="2.18" height="2.18" fill="#9fd3a0"/><rect x="10.88" y="23.94" width="2.18" height="2.18" fill="#9fd3a0"/><rect x="15.24" y="23.94" width="2.18" height="2.18" fill="#9fd3a0"/><rect x="37.00" y="23.94" width="2.18" height="2.18" fill="#9fd3a0"/><rect x="10.88" y="26.12" width="8.71" height="2.18" fill="#9fd3a0"/><rect x="37.00" y="26.12" width="4.35" height="2.18" fill="#9fd3a0"/><rect x="63.12" y="26.12" width="2.18" height="2.18" fill="#9fd3a0"/><rect x="10.88" y="28.30" width="2.18" height="2.18" fill="#9fd3a0"/><rect x="17.41" y="28.30" width="4.35" height="2.18" fill="#9fd3a0"/><rect x="67.47" y="28.30" width="2.18" height="2.18" fill="#9fd3a0"/><rect x="6.53" y="30.47" width="2.18" height="2.18" fill="#9fd3a0"/><rect x="10.88" y="30.47" width="4.35" height="2.18" fill="#9fd3a0"/><rect x="13.06" y="32.65" width="2.18" height="2.18" fill="#9fd3a0"/><rect x="102.30" y="34.83" width="2.18" height="2.18" fill="#9fd3a0"/><rect x="102.30" y="37.00" width="2.18" height="2.18" fill="#9fd3a0"/><rect x="0.00" y="41.36" width="2.18" height="2.18" fill="#9fd3a0"/><rect x="74.00" y="41.36" width="2.18" height="2.18" fill="#9fd3a0"/><rect x="80.53" y="41.36" width="2.18" height="2.18" fill="#9fd3a0"/><rect x="76.18" y="43.53" width="2.18" height="2.18" fill="#9fd3a0"/><rect x="80.53" y="43.53" width="2.18" height="2.18" fill="#9fd3a0"/><rect x="2.18" y="47.89" width="2.18" height="2.18" fill="#9fd3a0"/><rect x="76.18" y="47.89" width="4.35" height="2.18" fill="#9fd3a0"/><rect x="0.00" y="50.06" width="2.18" height="2.18" fill="#9fd3a0"/><rect x="78.36" y="50.06" width="2.18" height="2.18" fill="#9fd3a0"/><rect x="0.00" y="52.24" width="4.35" height="2.18" fill="#9fd3a0"/><rect x="76.18" y="52.24" width="6.53" height="2.18" fill="#9fd3a0"/><rect x="76.18" y="54.41" width="6.53" height="2.18" fill="#9fd3a0"/><rect x="74.00" y="56.59" width="2.18" height="2.18" fill="#9fd3a0"/><rect x="76.18" y="58.77" width="2.18" height="2.18" fill="#9fd3a0"/><rect x="19.59" y="63.12" width="4.35" height="2.18" fill="#9fd3a0"/><rect x="28.30" y="63.12" width="2.18" height="2.18" fill="#9fd3a0"/><rect x="23.94" y="65.30" width="6.53" height="2.18" fill="#9fd3a0"/><rect x="21.77" y="67.47" width="4.35" height="2.18" fill="#9fd3a0"/><rect x="28.30" y="67.47" width="2.18" height="2.18" fill="#9fd3a0"/><rect x="21.77" y="69.65" width="6.53" height="2.18" fill="#9fd3a0"/><rect x="13.06" y="74.00" width="2.18" height="2.18" fill="#9fd3a0"/><rect x="6.53" y="76.18" width="10.88" height="2.18" fill="#9fd3a0"/><rect x="8.71" y="78.36" width="4.35" height="2.18" fill="#9fd3a0"/><rect x="17.41" y="78.36" width="2.18" height="2.18" fill="#9fd3a0"/><rect x="10.88" y="80.53" width="8.71" height="2.18" fill="#9fd3a0"/><rect x="76.18" y="84.89" width="2.18" height="2.18" fill="#9fd3a0"/><rect x="0.00" y="87.06" width="2.18" height="2.18" fill="#9fd3a0"/><rect x="76.18" y="87.06" width="8.71" height="2.18" fill="#9fd3a0"/><rect x="91.42" y="87.06" width="2.18" height="2.18" fill="#9fd3a0"/><rect x="0.00" y="89.24" width="4.35" height="2.18" fill="#9fd3a0"/><rect x="76.18" y="89.24" width="19.59" height="2.18" fill="#9fd3a0"/><rect x="0.00" y="91.42" width="2.18" height="2.18" fill="#9fd3a0"/><rect x="74.00" y="91.42" width="21.77" height="2.18" fill="#9fd3a0"/><rect x="0.00" y="93.59" width="6.53" height="2.18" fill="#9fd3a0"/><rect x="76.18" y="93.59" width="19.59" height="2.18" fill="#9fd3a0"/><rect x="0.00" y="95.77" width="2.18" height="2.18" fill="#9fd3a0"/><rect x="76.18" y="95.77" width="8.71" height="2.18" fill="#9fd3a0"/><rect x="0.00" y="97.95" width="4.35" height="2.18" fill="#9fd3a0"/><rect x="84.89" y="97.95" width="2.18" height="2.18" fill="#9fd3a0"/><rect x="93.59" y="97.95" width="2.18" height="2.18" fill="#9fd3a0"/><rect x="15.24" y="100.12" width="2.18" height="2.18" fill="#9fd3a0"/><rect x="84.89" y="100.12" width="2.18" height="2.18" fill="#9fd3a0"/><rect x="4.35" y="102.30" width="6.53" height="2.18" fill="#9fd3a0"/><rect x="13.06" y="102.30" width="4.35" height="2.18" fill="#9fd3a0"/><rect x="80.53" y="102.30" width="2.18" height="2.18" fill="#9fd3a0"/><rect x="47.89" y="0.00" width="2.18" height="2.18" fill="#eaf08e"/><rect x="52.24" y="0.00" width="2.18" height="2.18" fill="#eaf08e"/><rect x="78.36" y="0.00" width="4.35" height="2.18" fill="#eaf08e"/><rect x="102.30" y="0.00" width="2.18" height="2.18" fill="#eaf08e"/><rect x="52.24" y="2.18" width="2.18" height="2.18" fill="#eaf08e"/><rect x="78.36" y="2.18" width="2.18" height="2.18" fill="#eaf08e"/><rect x="82.71" y="2.18" width="2.18" height="2.18" fill="#eaf08e"/><rect x="0.00" y="4.35" width="2.18" height="2.18" fill="#eaf08e"/><rect x="102.30" y="4.35" width="2.18" height="2.18" fill="#eaf08e"/><rect x="0.00" y="6.53" width="4.35" height="2.18" fill="#eaf08e"/><rect x="102.30" y="6.53" width="2.18" height="2.18" fill="#eaf08e"/><rect x="0.00" y="8.71" width="2.18" height="2.18" fill="#eaf08e"/><rect x="102.30" y="8.71" width="2.18" height="2.18" fill="#eaf08e"/><rect x="0.00" y="10.88" width="2.18" height="2.18" fill="#eaf08e"/><rect x="93.59" y="10.88" width="2.18" height="2.18" fill="#eaf08e"/><rect x="97.95" y="10.88" width="4.35" height="2.18" fill="#eaf08e"/><rect x="0.00" y="13.06" width="4.35" height="2.18" fill="#eaf08e"/><rect x="91.42" y="13.06" width="2.18" height="2.18" fill="#eaf08e"/><rect x="100.12" y="13.06" width="2.18" height="2.18" fill="#eaf08e"/><rect x="4.35" y="15.24" width="2.18" height="2.18" fill="#eaf08e"/><rect x="97.95" y="15.24" width="2.18" height="2.18" fill="#eaf08e"/><rect x="0.00" y="17.41" width="4.35" height="2.18" fill="#eaf08e"/><rect x="102.30" y="17.41" width="2.18" height="2.18" fill="#eaf08e"/><rect x="0.00" y="19.59" width="2.18" height="2.18" fill="#eaf08e"/><rect x="2.18" y="21.77" width="2.18" height="2.18" fill="#eaf08e"/><rect x="0.00" y="23.94" width="2.18" height="2.18" fill="#eaf08e"/><rect x="26.12" y="23.94" width="2.18" height="2.18" fill="#eaf08e"/><rect x="0.00" y="26.12" width="2.18" height="2.18" fill="#eaf08e"/><rect x="26.12" y="26.12" width="4.35" height="2.18" fill="#eaf08e"/><rect x="26.12" y="28.30" width="2.18" height="2.18" fill="#eaf08e"/><rect x="30.47" y="28.30" width="2.18" height="2.18" fill="#eaf08e"/><rect x="23.94" y="30.47" width="6.53" height="2.18" fill="#eaf08e"/><rect x="28.30" y="32.65" width="2.18" height="2.18" fill="#eaf08e"/><rect x="23.94" y="34.83" width="2.18" height="2.18" fill="#eaf08e"/><rect x="28.30" y="34.83" width="2.18" height="2.18" fill="#eaf08e"/><rect x="80.53" y="34.83" width="2.18" height="2.18" fill="#eaf08e"/><rect x="102.30" y="34.83" width="2.18" height="2.18" fill="#eaf08e"/><rect x="21.77" y="37.00" width="2.18" height="2.18" fill="#eaf08e"/><rect x="26.12" y="37.00" width="2.18" height="2.18" fill="#eaf08e"/><rect x="65.30" y="37.00" width="4.35" height="2.18" fill="#eaf08e"/><rect x="71.83" y="37.00" width="2.18" height="2.18" fill="#eaf08e"/><rect x="100.12" y="37.00" width="2.18" height="2.18" fill="#eaf08e"/><rect x="23.94" y="39.18" width="4.35" height="2.18" fill="#eaf08e"/><rect x="63.12" y="39.18" width="2.18" height="2.18" fill="#eaf08e"/><rect x="67.47" y="39.18" width="15.24" height="2.18" fill="#eaf08e"/><rect x="102.30" y="39.18" width="2.18" height="2.18" fill="#eaf08e"/><rect x="23.94" y="41.36" width="2.18" height="2.18" fill="#eaf08e"/><rect x="28.30" y="41.36" width="4.35" height="2.18" fill="#eaf08e"/><rect x="71.83" y="41.36" width="4.35" height="2.18" fill="#eaf08e"/><rect x="78.36" y="41.36" width="4.35" height="2.18" fill="#eaf08e"/><rect x="69.65" y="43.53" width="2.18" height="2.18" fill="#eaf08e"/><rect x="78.36" y="43.53" width="2.18" height="2.18" fill="#eaf08e"/><rect x="102.30" y="43.53" width="2.18" height="2.18" fill="#eaf08e"/><rect x="37.00" y="45.71" width="2.18" height="2.18" fill="#eaf08e"/><rect x="39.18" y="47.89" width="4.35" height="2.18" fill="#eaf08e"/><rect x="102.30" y="47.89" width="2.18" height="2.18" fill="#eaf08e"/><rect x="39.18" y="50.06" width="4.35" height="2.18" fill="#eaf08e"/><rect x="102.30" y="50.06" width="2.18" height="2.18" fill="#eaf08e"/><rect x="39.18" y="52.24" width="2.18" height="2.18" fill="#eaf08e"/><rect x="45.71" y="52.24" width="4.35" height="2.18" fill="#eaf08e"/><rect x="37.00" y="54.41" width="2.18" height="2.18" fill="#eaf08e"/><rect x="43.53" y="54.41" width="2.18" height="2.18" fill="#eaf08e"/><rect x="100.12" y="54.41" width="4.35" height="2.18" fill="#eaf08e"/><rect x="43.53" y="56.59" width="2.18" height="2.18" fill="#eaf08e"/><rect x="50.06" y="63.12" width="2.18" height="2.18" fill="#eaf08e"/><rect x="54.41" y="65.30" width="4.35" height="2.18" fill="#eaf08e"/><rect x="52.24" y="67.47" width="4.35" height="2.18" fill="#eaf08e"/><rect x="50.06" y="69.65" width="2.18" height="2.18" fill="#eaf08e"/><rect x="54.41" y="69.65" width="2.18" height="2.18" fill="#eaf08e"/><rect x="54.41" y="74.00" width="2.18" height="2.18" fill="#eaf08e"/><rect x="0.00" y="76.18" width="4.35" height="2.18" fill="#eaf08e"/><rect x="50.06" y="76.18" width="4.35" height="2.18" fill="#eaf08e"/><rect x="80.53" y="76.18" width="2.18" height="2.18" fill="#eaf08e"/><rect x="2.18" y="78.36" width="2.18" height="2.18" fill="#eaf08e"/><rect x="50.06" y="78.36" width="2.18" height="2.18" fill="#eaf08e"/><rect x="54.41" y="78.36" width="2.18" height="2.18" fill="#eaf08e"/><rect x="2.18" y="80.53" width="2.18" height="2.18" fill="#eaf08e"/><rect x="17.41" y="89.24" width="2.18" height="2.18" fill="#eaf08e"/><rect x="91.42" y="89.24" width="2.18" height="2.18" fill="#eaf08e"/><rect x="102.30" y="89.24" width="2.18" height="2.18" fill="#eaf08e"/><rect x="13.06" y="91.42" width="2.18" height="2.18" fill="#eaf08e"/><rect x="91.42" y="91.42" width="2.18" height="2.18" fill="#eaf08e"/><rect x="13.06" y="93.59" width="2.18" height="2.18" fill="#eaf08e"/><rect x="95.77" y="93.59" width="2.18" height="2.18" fill="#eaf08e"/><rect x="100.12" y="93.59" width="4.35" height="2.18" fill="#eaf08e"/><rect x="102.30" y="95.77" width="2.18" height="2.18" fill="#eaf08e"/><rect x="100.12" y="100.12" width="2.18" height="2.18" fill="#eaf08e"/><rect x="45.71" y="102.30" width="2.18" height="2.18" fill="#eaf08e"/><rect x="100.12" y="102.30" width="4.35" height="2.18" fill="#eaf08e"/></g></pattern><pattern id="psand" patternUnits="userSpaceOnUse" x="1801" y="175" width="104.48" height="104.48"><g shape-rendering="crispEdges"><rect width="104.48" height="104.48" fill="#e9d6a0"/><rect x="8.71" y="0.00" width="21.77" height="2.18" fill="#dfca92"/><rect x="32.65" y="0.00" width="2.18" height="2.18" fill="#dfca92"/><rect x="39.18" y="0.00" width="2.18" height="2.18" fill="#dfca92"/><rect x="60.94" y="0.00" width="30.47" height="2.18" fill="#dfca92"/><rect x="97.95" y="0.00" width="2.18" height="2.18" fill="#dfca92"/><rect x="8.71" y="2.18" width="2.18" height="2.18" fill="#dfca92"/><rect x="13.06" y="2.18" width="8.71" height="2.18" fill="#dfca92"/><rect x="23.94" y="2.18" width="6.53" height="2.18" fill="#dfca92"/><rect x="63.12" y="2.18" width="21.77" height="2.18" fill="#dfca92"/><rect x="87.06" y="2.18" width="2.18" height="2.18" fill="#dfca92"/><rect x="10.88" y="4.35" width="2.18" height="2.18" fill="#dfca92"/><rect x="19.59" y="4.35" width="4.35" height="2.18" fill="#dfca92"/><rect x="26.12" y="4.35" width="6.53" height="2.18" fill="#dfca92"/><rect x="34.83" y="4.35" width="4.35" height="2.18" fill="#dfca92"/><rect x="43.53" y="4.35" width="2.18" height="2.18" fill="#dfca92"/><rect x="63.12" y="4.35" width="13.06" height="2.18" fill="#dfca92"/><rect x="78.36" y="4.35" width="2.18" height="2.18" fill="#dfca92"/><rect x="82.71" y="4.35" width="6.53" height="2.18" fill="#dfca92"/><rect x="26.12" y="6.53" width="2.18" height="2.18" fill="#dfca92"/><rect x="32.65" y="6.53" width="6.53" height="2.18" fill="#dfca92"/><rect x="60.94" y="6.53" width="17.41" height="2.18" fill="#dfca92"/><rect x="80.53" y="6.53" width="2.18" height="2.18" fill="#dfca92"/><rect x="37.00" y="8.71" width="2.18" height="2.18" fill="#dfca92"/><rect x="60.94" y="8.71" width="13.06" height="2.18" fill="#dfca92"/><rect x="39.18" y="10.88" width="4.35" height="2.18" fill="#dfca92"/><rect x="60.94" y="10.88" width="8.71" height="2.18" fill="#dfca92"/><rect x="32.65" y="13.06" width="2.18" height="2.18" fill="#dfca92"/><rect x="37.00" y="13.06" width="6.53" height="2.18" fill="#dfca92"/><rect x="63.12" y="13.06" width="8.71" height="2.18" fill="#dfca92"/><rect x="28.30" y="15.24" width="2.18" height="2.18" fill="#dfca92"/><rect x="37.00" y="15.24" width="8.71" height="2.18" fill="#dfca92"/><rect x="60.94" y="15.24" width="10.88" height="2.18" fill="#dfca92"/><rect x="37.00" y="17.41" width="2.18" height="2.18" fill="#dfca92"/><rect x="43.53" y="17.41" width="2.18" height="2.18" fill="#dfca92"/><rect x="63.12" y="17.41" width="6.53" height="2.18" fill="#dfca92"/><rect x="71.83" y="17.41" width="2.18" height="2.18" fill="#dfca92"/><rect x="0.00" y="19.59" width="2.18" height="2.18" fill="#dfca92"/><rect x="23.94" y="19.59" width="2.18" height="2.18" fill="#dfca92"/><rect x="28.30" y="19.59" width="4.35" height="2.18" fill="#dfca92"/><rect x="34.83" y="19.59" width="4.35" height="2.18" fill="#dfca92"/><rect x="65.30" y="19.59" width="2.18" height="2.18" fill="#dfca92"/><rect x="69.65" y="19.59" width="2.18" height="2.18" fill="#dfca92"/><rect x="0.00" y="21.77" width="6.53" height="2.18" fill="#dfca92"/><rect x="15.24" y="21.77" width="4.35" height="2.18" fill="#dfca92"/><rect x="21.77" y="21.77" width="21.77" height="2.18" fill="#dfca92"/><rect x="102.30" y="21.77" width="2.18" height="2.18" fill="#dfca92"/><rect x="0.00" y="23.94" width="37.00" height="2.18" fill="#dfca92"/><rect x="39.18" y="23.94" width="4.35" height="2.18" fill="#dfca92"/><rect x="100.12" y="23.94" width="4.35" height="2.18" fill="#dfca92"/><rect x="0.00" y="26.12" width="41.36" height="2.18" fill="#dfca92"/><rect x="76.18" y="26.12" width="2.18" height="2.18" fill="#dfca92"/><rect x="80.53" y="26.12" width="2.18" height="2.18" fill="#dfca92"/><rect x="97.95" y="26.12" width="6.53" height="2.18" fill="#dfca92"/><rect x="0.00" y="28.30" width="41.36" height="2.18" fill="#dfca92"/><rect x="100.12" y="28.30" width="4.35" height="2.18" fill="#dfca92"/><rect x="0.00" y="30.47" width="10.88" height="2.18" fill="#dfca92"/><rect x="17.41" y="30.47" width="17.41" height="2.18" fill="#dfca92"/><rect x="39.18" y="30.47" width="2.18" height="2.18" fill="#dfca92"/><rect x="78.36" y="30.47" width="2.18" height="2.18" fill="#dfca92"/><rect x="100.12" y="30.47" width="4.35" height="2.18" fill="#dfca92"/><rect x="0.00" y="32.65" width="6.53" height="2.18" fill="#dfca92"/><rect x="8.71" y="32.65" width="2.18" height="2.18" fill="#dfca92"/><rect x="21.77" y="32.65" width="13.06" height="2.18" fill="#dfca92"/><rect x="74.00" y="32.65" width="2.18" height="2.18" fill="#dfca92"/><rect x="80.53" y="32.65" width="2.18" height="2.18" fill="#dfca92"/><rect x="102.30" y="32.65" width="2.18" height="2.18" fill="#dfca92"/><rect x="17.41" y="34.83" width="2.18" height="2.18" fill="#dfca92"/><rect x="21.77" y="34.83" width="8.71" height="2.18" fill="#dfca92"/><rect x="50.06" y="34.83" width="8.71" height="2.18" fill="#dfca92"/><rect x="76.18" y="34.83" width="8.71" height="2.18" fill="#dfca92"/><rect x="102.30" y="34.83" width="2.18" height="2.18" fill="#dfca92"/><rect x="21.77" y="37.00" width="10.88" height="2.18" fill="#dfca92"/><rect x="45.71" y="37.00" width="13.06" height="2.18" fill="#dfca92"/><rect x="60.94" y="37.00" width="4.35" height="2.18" fill="#dfca92"/><rect x="71.83" y="37.00" width="2.18" height="2.18" fill="#dfca92"/><rect x="78.36" y="37.00" width="4.35" height="2.18" fill="#dfca92"/><rect x="21.77" y="39.18" width="13.06" height="2.18" fill="#dfca92"/><rect x="47.89" y="39.18" width="15.24" height="2.18" fill="#dfca92"/><rect x="69.65" y="39.18" width="2.18" height="2.18" fill="#dfca92"/><rect x="76.18" y="39.18" width="2.18" height="2.18" fill="#dfca92"/><rect x="80.53" y="39.18" width="2.18" height="2.18" fill="#dfca92"/><rect x="21.77" y="41.36" width="10.88" height="2.18" fill="#dfca92"/><rect x="47.89" y="41.36" width="13.06" height="2.18" fill="#dfca92"/><rect x="69.65" y="41.36" width="2.18" height="2.18" fill="#dfca92"/><rect x="76.18" y="41.36" width="4.35" height="2.18" fill="#dfca92"/><rect x="82.71" y="41.36" width="2.18" height="2.18" fill="#dfca92"/><rect x="100.12" y="41.36" width="2.18" height="2.18" fill="#dfca92"/><rect x="21.77" y="43.53" width="13.06" height="2.18" fill="#dfca92"/><rect x="47.89" y="43.53" width="10.88" height="2.18" fill="#dfca92"/><rect x="63.12" y="43.53" width="2.18" height="2.18" fill="#dfca92"/><rect x="71.83" y="43.53" width="2.18" height="2.18" fill="#dfca92"/><rect x="78.36" y="43.53" width="6.53" height="2.18" fill="#dfca92"/><rect x="89.24" y="43.53" width="2.18" height="2.18" fill="#dfca92"/><rect x="95.77" y="43.53" width="2.18" height="2.18" fill="#dfca92"/><rect x="100.12" y="43.53" width="2.18" height="2.18" fill="#dfca92"/><rect x="19.59" y="45.71" width="13.06" height="2.18" fill="#dfca92"/><rect x="47.89" y="45.71" width="10.88" height="2.18" fill="#dfca92"/><rect x="74.00" y="45.71" width="10.88" height="2.18" fill="#dfca92"/><rect x="87.06" y="45.71" width="6.53" height="2.18" fill="#dfca92"/><rect x="100.12" y="45.71" width="4.35" height="2.18" fill="#dfca92"/><rect x="21.77" y="47.89" width="13.06" height="2.18" fill="#dfca92"/><rect x="45.71" y="47.89" width="13.06" height="2.18" fill="#dfca92"/><rect x="60.94" y="47.89" width="2.18" height="2.18" fill="#dfca92"/><rect x="74.00" y="47.89" width="30.47" height="2.18" fill="#dfca92"/><rect x="21.77" y="50.06" width="13.06" height="2.18" fill="#dfca92"/><rect x="45.71" y="50.06" width="15.24" height="2.18" fill="#dfca92"/><rect x="71.83" y="50.06" width="32.65" height="2.18" fill="#dfca92"/><rect x="21.77" y="52.24" width="10.88" height="2.18" fill="#dfca92"/><rect x="47.89" y="52.24" width="8.71" height="2.18" fill="#dfca92"/><rect x="71.83" y="52.24" width="32.65" height="2.18" fill="#dfca92"/><rect x="21.77" y="54.41" width="10.88" height="2.18" fill="#dfca92"/><rect x="47.89" y="54.41" width="6.53" height="2.18" fill="#dfca92"/><rect x="56.59" y="54.41" width="2.18" height="2.18" fill="#dfca92"/><rect x="71.83" y="54.41" width="32.65" height="2.18" fill="#dfca92"/><rect x="23.94" y="56.59" width="8.71" height="2.18" fill="#dfca92"/><rect x="45.71" y="56.59" width="2.18" height="2.18" fill="#dfca92"/><rect x="50.06" y="56.59" width="8.71" height="2.18" fill="#dfca92"/><rect x="71.83" y="56.59" width="32.65" height="2.18" fill="#dfca92"/><rect x="0.00" y="58.77" width="2.18" height="2.18" fill="#dfca92"/><rect x="4.35" y="58.77" width="2.18" height="2.18" fill="#dfca92"/><rect x="19.59" y="58.77" width="10.88" height="2.18" fill="#dfca92"/><rect x="47.89" y="58.77" width="2.18" height="2.18" fill="#dfca92"/><rect x="52.24" y="58.77" width="6.53" height="2.18" fill="#dfca92"/><rect x="60.94" y="58.77" width="6.53" height="2.18" fill="#dfca92"/><rect x="69.65" y="58.77" width="6.53" height="2.18" fill="#dfca92"/><rect x="78.36" y="58.77" width="2.18" height="2.18" fill="#dfca92"/><rect x="82.71" y="58.77" width="21.77" height="2.18" fill="#dfca92"/><rect x="2.18" y="60.94" width="2.18" height="2.18" fill="#dfca92"/><rect x="6.53" y="60.94" width="4.35" height="2.18" fill="#dfca92"/><rect x="19.59" y="60.94" width="10.88" height="2.18" fill="#dfca92"/><rect x="32.65" y="60.94" width="2.18" height="2.18" fill="#dfca92"/><rect x="52.24" y="60.94" width="2.18" height="2.18" fill="#dfca92"/><rect x="58.77" y="60.94" width="10.88" height="2.18" fill="#dfca92"/><rect x="71.83" y="60.94" width="2.18" height="2.18" fill="#dfca92"/><rect x="82.71" y="60.94" width="2.18" height="2.18" fill="#dfca92"/><rect x="87.06" y="60.94" width="17.41" height="2.18" fill="#dfca92"/><rect x="0.00" y="63.12" width="6.53" height="2.18" fill="#dfca92"/><rect x="10.88" y="63.12" width="4.35" height="2.18" fill="#dfca92"/><rect x="19.59" y="63.12" width="2.18" height="2.18" fill="#dfca92"/><rect x="23.94" y="63.12" width="6.53" height="2.18" fill="#dfca92"/><rect x="50.06" y="63.12" width="6.53" height="2.18" fill="#dfca92"/><rect x="60.94" y="63.12" width="13.06" height="2.18" fill="#dfca92"/><rect x="84.89" y="63.12" width="19.59" height="2.18" fill="#dfca92"/><rect x="0.00" y="65.30" width="13.06" height="2.18" fill="#dfca92"/><rect x="17.41" y="65.30" width="2.18" height="2.18" fill="#dfca92"/><rect x="23.94" y="65.30" width="10.88" height="2.18" fill="#dfca92"/><rect x="58.77" y="65.30" width="13.06" height="2.18" fill="#dfca92"/><rect x="84.89" y="65.30" width="19.59" height="2.18" fill="#dfca92"/><rect x="0.00" y="67.47" width="10.88" height="2.18" fill="#dfca92"/><rect x="13.06" y="67.47" width="8.71" height="2.18" fill="#dfca92"/><rect x="23.94" y="67.47" width="8.71" height="2.18" fill="#dfca92"/><rect x="52.24" y="67.47" width="2.18" height="2.18" fill="#dfca92"/><rect x="60.94" y="67.47" width="10.88" height="2.18" fill="#dfca92"/><rect x="87.06" y="67.47" width="17.41" height="2.18" fill="#dfca92"/><rect x="0.00" y="69.65" width="6.53" height="2.18" fill="#dfca92"/><rect x="10.88" y="69.65" width="2.18" height="2.18" fill="#dfca92"/><rect x="19.59" y="69.65" width="8.71" height="2.18" fill="#dfca92"/><rect x="30.47" y="69.65" width="2.18" height="2.18" fill="#dfca92"/><rect x="50.06" y="69.65" width="4.35" height="2.18" fill="#dfca92"/><rect x="56.59" y="69.65" width="13.06" height="2.18" fill="#dfca92"/><rect x="84.89" y="69.65" width="4.35" height="2.18" fill="#dfca92"/><rect x="91.42" y="69.65" width="13.06" height="2.18" fill="#dfca92"/><rect x="0.00" y="71.83" width="2.18" height="2.18" fill="#dfca92"/><rect x="8.71" y="71.83" width="8.71" height="2.18" fill="#dfca92"/><rect x="47.89" y="71.83" width="10.88" height="2.18" fill="#dfca92"/><rect x="67.47" y="71.83" width="2.18" height="2.18" fill="#dfca92"/><rect x="93.59" y="71.83" width="10.88" height="2.18" fill="#dfca92"/><rect x="6.53" y="74.00" width="2.18" height="2.18" fill="#dfca92"/><rect x="15.24" y="74.00" width="4.35" height="2.18" fill="#dfca92"/><rect x="47.89" y="74.00" width="17.41" height="2.18" fill="#dfca92"/><rect x="100.12" y="74.00" width="4.35" height="2.18" fill="#dfca92"/><rect x="47.89" y="76.18" width="13.06" height="2.18" fill="#dfca92"/><rect x="100.12" y="76.18" width="4.35" height="2.18" fill="#dfca92"/><rect x="45.71" y="78.36" width="17.41" height="2.18" fill="#dfca92"/><rect x="102.30" y="78.36" width="2.18" height="2.18" fill="#dfca92"/><rect x="2.18" y="80.53" width="2.18" height="2.18" fill="#dfca92"/><rect x="21.77" y="80.53" width="2.18" height="2.18" fill="#dfca92"/><rect x="43.53" y="80.53" width="17.41" height="2.18" fill="#dfca92"/><rect x="100.12" y="80.53" width="2.18" height="2.18" fill="#dfca92"/><rect x="34.83" y="82.71" width="2.18" height="2.18" fill="#dfca92"/><rect x="45.71" y="82.71" width="15.24" height="2.18" fill="#dfca92"/><rect x="0.00" y="84.89" width="6.53" height="2.18" fill="#dfca92"/><rect x="17.41" y="84.89" width="4.35" height="2.18" fill="#dfca92"/><rect x="39.18" y="84.89" width="2.18" height="2.18" fill="#dfca92"/><rect x="43.53" y="84.89" width="15.24" height="2.18" fill="#dfca92"/><rect x="100.12" y="84.89" width="2.18" height="2.18" fill="#dfca92"/><rect x="0.00" y="87.06" width="13.06" height="2.18" fill="#dfca92"/><rect x="15.24" y="87.06" width="2.18" height="2.18" fill="#dfca92"/><rect x="30.47" y="87.06" width="2.18" height="2.18" fill="#dfca92"/><rect x="37.00" y="87.06" width="2.18" height="2.18" fill="#dfca92"/><rect x="41.36" y="87.06" width="2.18" height="2.18" fill="#dfca92"/><rect x="45.71" y="87.06" width="15.24" height="2.18" fill="#dfca92"/><rect x="74.00" y="87.06" width="2.18" height="2.18" fill="#dfca92"/><rect x="95.77" y="87.06" width="4.35" height="2.18" fill="#dfca92"/><rect x="102.30" y="87.06" width="2.18" height="2.18" fill="#dfca92"/><rect x="0.00" y="89.24" width="13.06" height="2.18" fill="#dfca92"/><rect x="43.53" y="89.24" width="15.24" height="2.18" fill="#dfca92"/><rect x="76.18" y="89.24" width="8.71" height="2.18" fill="#dfca92"/><rect x="89.24" y="89.24" width="2.18" height="2.18" fill="#dfca92"/><rect x="93.59" y="89.24" width="6.53" height="2.18" fill="#dfca92"/><rect x="102.30" y="89.24" width="2.18" height="2.18" fill="#dfca92"/><rect x="0.00" y="91.42" width="10.88" height="2.18" fill="#dfca92"/><rect x="17.41" y="91.42" width="4.35" height="2.18" fill="#dfca92"/><rect x="45.71" y="91.42" width="13.06" height="2.18" fill="#dfca92"/><rect x="74.00" y="91.42" width="4.35" height="2.18" fill="#dfca92"/><rect x="80.53" y="91.42" width="8.71" height="2.18" fill="#dfca92"/><rect x="93.59" y="91.42" width="2.18" height="2.18" fill="#dfca92"/><rect x="102.30" y="91.42" width="2.18" height="2.18" fill="#dfca92"/><rect x="0.00" y="93.59" width="10.88" height="2.18" fill="#dfca92"/><rect x="15.24" y="93.59" width="2.18" height="2.18" fill="#dfca92"/><rect x="19.59" y="93.59" width="6.53" height="2.18" fill="#dfca92"/><rect x="30.47" y="93.59" width="4.35" height="2.18" fill="#dfca92"/><rect x="37.00" y="93.59" width="21.77" height="2.18" fill="#dfca92"/><rect x="76.18" y="93.59" width="4.35" height="2.18" fill="#dfca92"/><rect x="82.71" y="93.59" width="6.53" height="2.18" fill="#dfca92"/><rect x="91.42" y="93.59" width="2.18" height="2.18" fill="#dfca92"/><rect x="95.77" y="93.59" width="2.18" height="2.18" fill="#dfca92"/><rect x="100.12" y="93.59" width="4.35" height="2.18" fill="#dfca92"/><rect x="0.00" y="95.77" width="10.88" height="2.18" fill="#dfca92"/><rect x="37.00" y="95.77" width="21.77" height="2.18" fill="#dfca92"/><rect x="84.89" y="95.77" width="2.18" height="2.18" fill="#dfca92"/><rect x="100.12" y="95.77" width="2.18" height="2.18" fill="#dfca92"/><rect x="2.18" y="97.95" width="4.35" height="2.18" fill="#dfca92"/><rect x="37.00" y="97.95" width="19.59" height="2.18" fill="#dfca92"/><rect x="67.47" y="97.95" width="2.18" height="2.18" fill="#dfca92"/><rect x="76.18" y="97.95" width="2.18" height="2.18" fill="#dfca92"/><rect x="32.65" y="100.12" width="13.06" height="2.18" fill="#dfca92"/><rect x="47.89" y="100.12" width="2.18" height="2.18" fill="#dfca92"/><rect x="58.77" y="100.12" width="4.35" height="2.18" fill="#dfca92"/><rect x="34.83" y="102.30" width="13.06" height="2.18" fill="#dfca92"/><rect x="63.12" y="102.30" width="2.18" height="2.18" fill="#dfca92"/><rect x="17.41" y="0.00" width="8.71" height="2.18" fill="#d6c08a"/><rect x="19.59" y="2.18" width="10.88" height="2.18" fill="#d6c08a"/><rect x="63.12" y="2.18" width="4.35" height="2.18" fill="#d6c08a"/><rect x="102.30" y="2.18" width="2.18" height="2.18" fill="#d6c08a"/><rect x="10.88" y="4.35" width="2.18" height="2.18" fill="#d6c08a"/><rect x="19.59" y="4.35" width="4.35" height="2.18" fill="#d6c08a"/><rect x="26.12" y="4.35" width="2.18" height="2.18" fill="#d6c08a"/><rect x="65.30" y="4.35" width="2.18" height="2.18" fill="#d6c08a"/><rect x="13.06" y="6.53" width="2.18" height="2.18" fill="#d6c08a"/><rect x="10.88" y="8.71" width="4.35" height="2.18" fill="#d6c08a"/><rect x="17.41" y="8.71" width="2.18" height="2.18" fill="#d6c08a"/><rect x="97.95" y="8.71" width="6.53" height="2.18" fill="#d6c08a"/><rect x="13.06" y="10.88" width="2.18" height="2.18" fill="#d6c08a"/><rect x="17.41" y="10.88" width="2.18" height="2.18" fill="#d6c08a"/><rect x="52.24" y="10.88" width="4.35" height="2.18" fill="#d6c08a"/><rect x="97.95" y="10.88" width="2.18" height="2.18" fill="#d6c08a"/><rect x="10.88" y="13.06" width="6.53" height="2.18" fill="#d6c08a"/><rect x="54.41" y="13.06" width="4.35" height="2.18" fill="#d6c08a"/><rect x="91.42" y="13.06" width="4.35" height="2.18" fill="#d6c08a"/><rect x="102.30" y="13.06" width="2.18" height="2.18" fill="#d6c08a"/><rect x="13.06" y="15.24" width="2.18" height="2.18" fill="#d6c08a"/><rect x="50.06" y="15.24" width="2.18" height="2.18" fill="#d6c08a"/><rect x="56.59" y="15.24" width="2.18" height="2.18" fill="#d6c08a"/><rect x="91.42" y="15.24" width="2.18" height="2.18" fill="#d6c08a"/><rect x="100.12" y="15.24" width="2.18" height="2.18" fill="#d6c08a"/><rect x="52.24" y="17.41" width="2.18" height="2.18" fill="#d6c08a"/><rect x="91.42" y="17.41" width="2.18" height="2.18" fill="#d6c08a"/><rect x="10.88" y="19.59" width="2.18" height="2.18" fill="#d6c08a"/><rect x="19.59" y="19.59" width="2.18" height="2.18" fill="#d6c08a"/><rect x="26.12" y="19.59" width="2.18" height="2.18" fill="#d6c08a"/><rect x="54.41" y="19.59" width="6.53" height="2.18" fill="#d6c08a"/><rect x="21.77" y="21.77" width="2.18" height="2.18" fill="#d6c08a"/><rect x="26.12" y="21.77" width="2.18" height="2.18" fill="#d6c08a"/><rect x="50.06" y="21.77" width="2.18" height="2.18" fill="#d6c08a"/><rect x="54.41" y="21.77" width="2.18" height="2.18" fill="#d6c08a"/><rect x="23.94" y="23.94" width="2.18" height="2.18" fill="#d6c08a"/><rect x="50.06" y="23.94" width="8.71" height="2.18" fill="#d6c08a"/><rect x="21.77" y="26.12" width="2.18" height="2.18" fill="#d6c08a"/><rect x="26.12" y="26.12" width="4.35" height="2.18" fill="#d6c08a"/><rect x="50.06" y="26.12" width="4.35" height="2.18" fill="#d6c08a"/><rect x="56.59" y="26.12" width="2.18" height="2.18" fill="#d6c08a"/><rect x="19.59" y="28.30" width="2.18" height="2.18" fill="#d6c08a"/><rect x="26.12" y="28.30" width="2.18" height="2.18" fill="#d6c08a"/><rect x="56.59" y="28.30" width="4.35" height="2.18" fill="#d6c08a"/><rect x="26.12" y="30.47" width="2.18" height="2.18" fill="#d6c08a"/><rect x="93.59" y="32.65" width="2.18" height="2.18" fill="#d6c08a"/><rect x="89.24" y="34.83" width="2.18" height="2.18" fill="#d6c08a"/><rect x="93.59" y="34.83" width="2.18" height="2.18" fill="#d6c08a"/><rect x="84.89" y="37.00" width="4.35" height="2.18" fill="#d6c08a"/><rect x="91.42" y="37.00" width="2.18" height="2.18" fill="#d6c08a"/><rect x="95.77" y="37.00" width="4.35" height="2.18" fill="#d6c08a"/><rect x="80.53" y="39.18" width="4.35" height="2.18" fill="#d6c08a"/><rect x="87.06" y="39.18" width="6.53" height="2.18" fill="#d6c08a"/><rect x="95.77" y="39.18" width="2.18" height="2.18" fill="#d6c08a"/><rect x="84.89" y="41.36" width="2.18" height="2.18" fill="#d6c08a"/><rect x="91.42" y="41.36" width="2.18" height="2.18" fill="#d6c08a"/><rect x="95.77" y="41.36" width="2.18" height="2.18" fill="#d6c08a"/><rect x="80.53" y="43.53" width="2.18" height="2.18" fill="#d6c08a"/><rect x="78.36" y="45.71" width="2.18" height="2.18" fill="#d6c08a"/><rect x="102.30" y="45.71" width="2.18" height="2.18" fill="#d6c08a"/><rect x="52.24" y="47.89" width="2.18" height="2.18" fill="#d6c08a"/><rect x="76.18" y="47.89" width="4.35" height="2.18" fill="#d6c08a"/><rect x="102.30" y="47.89" width="2.18" height="2.18" fill="#d6c08a"/><rect x="52.24" y="50.06" width="4.35" height="2.18" fill="#d6c08a"/><rect x="76.18" y="50.06" width="2.18" height="2.18" fill="#d6c08a"/><rect x="50.06" y="52.24" width="8.71" height="2.18" fill="#d6c08a"/><rect x="76.18" y="52.24" width="2.18" height="2.18" fill="#d6c08a"/><rect x="52.24" y="54.41" width="6.53" height="2.18" fill="#d6c08a"/><rect x="78.36" y="54.41" width="2.18" height="2.18" fill="#d6c08a"/><rect x="80.53" y="56.59" width="2.18" height="2.18" fill="#d6c08a"/><rect x="102.30" y="63.12" width="2.18" height="2.18" fill="#d6c08a"/><rect x="65.30" y="67.47" width="2.18" height="2.18" fill="#d6c08a"/><rect x="65.30" y="80.53" width="2.18" height="2.18" fill="#d6c08a"/><rect x="67.47" y="82.71" width="2.18" height="2.18" fill="#d6c08a"/><rect x="65.30" y="97.95" width="2.18" height="2.18" fill="#d6c08a"/><rect x="65.30" y="100.12" width="2.18" height="2.18" fill="#d6c08a"/><rect x="71.83" y="100.12" width="2.18" height="2.18" fill="#d6c08a"/><rect x="8.71" y="102.30" width="2.18" height="2.18" fill="#d6c08a"/><rect x="13.06" y="102.30" width="2.18" height="2.18" fill="#d6c08a"/><rect x="39.18" y="102.30" width="2.18" height="2.18" fill="#d6c08a"/><rect x="63.12" y="102.30" width="4.35" height="2.18" fill="#d6c08a"/><rect x="71.83" y="2.18" width="2.18" height="2.18" fill="#f1e2b2"/><rect x="63.12" y="4.35" width="2.18" height="2.18" fill="#f1e2b2"/><rect x="71.83" y="4.35" width="2.18" height="2.18" fill="#f1e2b2"/><rect x="63.12" y="6.53" width="6.53" height="2.18" fill="#f1e2b2"/><rect x="28.30" y="8.71" width="2.18" height="2.18" fill="#f1e2b2"/><rect x="65.30" y="8.71" width="4.35" height="2.18" fill="#f1e2b2"/><rect x="65.30" y="10.88" width="2.18" height="2.18" fill="#f1e2b2"/><rect x="26.12" y="13.06" width="2.18" height="2.18" fill="#f1e2b2"/><rect x="67.47" y="13.06" width="2.18" height="2.18" fill="#f1e2b2"/><rect x="26.12" y="15.24" width="4.35" height="2.18" fill="#f1e2b2"/><rect x="65.30" y="15.24" width="2.18" height="2.18" fill="#f1e2b2"/><rect x="65.30" y="17.41" width="2.18" height="2.18" fill="#f1e2b2"/><rect x="78.36" y="21.77" width="2.18" height="2.18" fill="#f1e2b2"/><rect x="76.18" y="26.12" width="6.53" height="2.18" fill="#f1e2b2"/><rect x="69.65" y="28.30" width="6.53" height="2.18" fill="#f1e2b2"/><rect x="65.30" y="30.47" width="2.18" height="2.18" fill="#f1e2b2"/><rect x="76.18" y="30.47" width="2.18" height="2.18" fill="#f1e2b2"/><rect x="69.65" y="32.65" width="2.18" height="2.18" fill="#f1e2b2"/><rect x="23.94" y="37.00" width="4.35" height="2.18" fill="#f1e2b2"/><rect x="28.30" y="39.18" width="2.18" height="2.18" fill="#f1e2b2"/><rect x="69.65" y="39.18" width="2.18" height="2.18" fill="#f1e2b2"/><rect x="26.12" y="41.36" width="2.18" height="2.18" fill="#f1e2b2"/><rect x="2.18" y="65.30" width="2.18" height="2.18" fill="#f1e2b2"/></g></pattern><filter id="blur4"><feGaussianBlur stdDeviation="5"/></filter></defs><rect x="1299" y="175" width="621" height="288" fill="#383838"/><rect x="1299" y="384" width="14.4" height="70" fill="#cbc7a8"/><rect x="1302" y="390" width="6" height="55" fill="#b9b8a4" opacity="0.6"/><rect x="1383" y="175" width="209" height="209" fill="url(#pgrass)"/><rect x="1383" y="454" width="209" height="9" fill="url(#pgrass)"/><path d="M1422.0 250.5 L1422.0 253.5 L1422.0 256.5 L1422.0 259.5 L1423.5 262.5 L1423.5 265.5 L1428.0 268.5 L1426.5 271.5 L1423.5 274.5 L1426.5 277.5 L1425.0 280.5 L1428.0 283.5 L1426.5 286.5 L1428.0 289.5 L1426.5 292.5 L1425.0 295.5 L1428.0 298.5 L1426.5 301.5 L1426.5 304.5 L1423.5 307.5 L1423.5 310.5 L1426.5 313.5 L1423.5 316.5 L1426.5 319.5 L1425.0 324.0 L1428.0 325.5 L1431.0 328.5 L1428.0 333.0 L1432.5 334.5 L1432.5 339.0 L1431.0 343.5 L1432.5 345.0 L1437.0 346.5 L1435.5 351.0 L1440.0 352.5 L1441.5 355.5 L1444.5 355.5 L1443.0 360.0 L1447.5 363.0 L1450.5 364.5 L1453.5 363.0 L1456.5 360.0 L1459.5 361.5 L1462.5 360.0 L1465.5 360.0 L1468.5 360.0 L1473.0 360.0 L1476.0 361.5 L1479.0 358.5 L1482.0 363.0 L1485.0 361.5 L1488.0 361.5 L1491.0 363.0 L1494.0 361.5 L1497.0 361.5 L1500.0 363.0 L1503.0 364.5 L1507.5 361.5 L1509.0 366.0 L1513.5 361.5 L1516.5 366.0 L1519.5 364.5 L1521.0 358.5 L1525.5 360.0 L1527.0 357.0 L1530.0 357.0 L1531.5 352.5 L1534.5 351.0 L1537.5 349.5 L1542.0 351.0 L1543.5 346.5 L1546.5 346.5 L1549.5 345.0 L1552.5 343.5 L1552.5 339.0 L1555.5 337.5 L1558.5 336.0 L1561.5 334.5 L1561.5 330.0 L1566.0 330.0 L1567.5 328.5 L1570.5 325.5 L1569.0 322.5 L1573.5 319.5 L1570.5 316.5 L1570.5 313.5 L1572.0 310.5 L1573.5 307.5 L1570.5 304.5 L1573.5 301.5 L1572.0 298.5 L1570.5 295.5 L1570.5 292.5 L1570.5 289.5 L1569.0 286.5 L1569.0 283.5 L1572.0 280.5 L1572.0 277.5 L1567.5 274.5 L1566.0 271.5 L1570.5 268.5 L1567.5 265.5 L1566.0 262.5 L1564.5 259.5 L1566.0 256.5 L1566.0 253.5 L1564.5 250.5 L1563.0 247.5 L1560.0 246.0 L1561.5 241.5 L1557.0 241.5 L1557.0 237.0 L1557.0 234.0 L1552.5 232.5 L1552.5 228.0 L1552.5 225.0 L1549.5 223.5 L1548.0 220.5 L1543.5 219.0 L1543.5 216.0 L1540.5 213.0 L1540.5 208.5 L1537.5 210.0 L1534.5 208.5 L1531.5 205.5 L1528.5 205.5 L1525.5 204.0 L1522.5 205.5 L1519.5 204.0 L1516.5 202.5 L1513.5 202.5 L1510.5 202.5 L1507.5 201.0 L1504.5 201.0 L1501.5 199.5 L1500.0 195.0 L1497.0 195.0 L1492.5 195.0 L1489.5 195.0 L1488.0 196.5 L1485.0 198.0 L1482.0 198.0 L1477.5 196.5 L1474.5 198.0 L1473.0 201.0 L1468.5 199.5 L1465.5 201.0 L1462.5 202.5 L1461.0 202.5 L1458.0 204.0 L1455.0 205.5 L1452.0 205.5 L1449.0 208.5 L1446.0 208.5 L1443.0 208.5 L1438.5 210.0 L1440.0 213.0 L1435.5 214.5 L1435.5 219.0 L1435.5 222.0 L1435.5 225.0 L1432.5 226.5 L1432.5 231.0 L1429.5 232.5 L1429.5 235.5 L1426.5 238.5 L1426.5 241.5 L1423.5 243.0 L1425.0 247.5Z" fill="#0f7d83"/><path d="M1413.0 244.5 L1413.0 241.5 L1416.0 240.0 L1416.0 235.5 L1419.0 234.0 L1419.0 231.0 L1419.0 228.0 L1422.0 225.0 L1420.5 222.0 L1423.5 220.5 L1423.5 216.0 L1425.0 214.5 L1428.0 211.5 L1431.0 210.0 L1429.5 205.5 L1431.0 202.5 L1432.5 201.0 L1437.0 201.0 L1438.5 198.0 L1441.5 196.5 L1444.5 196.5 L1446.0 192.0 L1450.5 193.5 L1452.0 190.5 L1455.0 189.0 L1458.0 187.5 L1462.5 187.5 L1465.5 189.0 L1468.5 186.0 L1471.5 187.5 L1474.5 187.5 L1477.5 186.0 L1482.0 187.5 L1485.0 184.5 L1488.0 184.5 L1491.0 186.0 L1494.0 187.5 L1497.0 186.0 L1500.0 186.0 L1503.0 187.5 L1506.0 186.0 L1509.0 186.0 L1513.5 187.5 L1515.0 187.5 L1519.5 187.5 L1521.0 190.5 L1524.0 190.5 L1527.0 193.5 L1530.0 195.0 L1533.0 193.5 L1534.5 198.0 L1539.0 196.5 L1540.5 199.5 L1542.0 202.5 L1546.5 202.5 L1548.0 205.5 L1552.5 207.0 L1552.5 210.0 L1555.5 213.0 L1557.0 214.5 L1558.5 217.5 L1561.5 219.0 L1563.0 223.5 L1564.5 225.0 L1566.0 228.0 L1569.0 231.0 L1569.0 234.0 L1570.5 235.5 L1570.5 241.5 L1569.0 244.5 L1564.5 243.0 L1564.5 238.5 L1561.5 237.0 L1560.0 232.5 L1557.0 231.0 L1554.0 229.5 L1552.5 226.5 L1551.0 223.5 L1546.5 223.5 L1546.5 219.0 L1543.5 219.0 L1540.5 217.5 L1537.5 216.0 L1536.0 211.5 L1531.5 213.0 L1530.0 211.5 L1527.0 208.5 L1525.5 205.5 L1521.0 207.0 L1518.0 204.0 L1516.5 202.5 L1513.5 201.0 L1510.5 201.0 L1507.5 201.0 L1503.0 202.5 L1500.0 202.5 L1497.0 202.5 L1494.0 199.5 L1491.0 199.5 L1488.0 202.5 L1485.0 202.5 L1482.0 202.5 L1479.0 204.0 L1476.0 202.5 L1473.0 202.5 L1470.0 205.5 L1467.0 207.0 L1464.0 205.5 L1461.0 207.0 L1458.0 207.0 L1453.5 208.5 L1452.0 210.0 L1449.0 213.0 L1446.0 214.5 L1443.0 216.0 L1441.5 220.5 L1437.0 219.0 L1435.5 222.0 L1434.0 223.5 L1432.5 226.5 L1432.5 231.0 L1431.0 232.5 L1429.5 235.5 L1426.5 237.0 L1426.5 241.5 L1425.0 243.0 L1422.0 246.0 L1417.5 246.0Z" fill="#c4a57f"/><path d="M1420 238 Q1440 200 1480 194 Q1530 192 1562 228" fill="none" stroke="#dcc7a0" stroke-width="3"/><path d="M1430 240 Q1445 212 1488 206 Q1530 206 1556 236" fill="none" stroke="#a88a68" stroke-width="2" opacity="0.7"/><rect x="1562.40" y="225.68" width="2.17" height="4.34" fill="#8c7052"/><rect x="1423.52" y="221.34" width="2.17" height="4.34" fill="#8c7052"/><rect x="1547.21" y="210.49" width="2.17" height="2.17" fill="#d9c29c"/><rect x="1553.72" y="214.83" width="2.17" height="2.17" fill="#8c7052"/><rect x="1545.04" y="208.32" width="2.17" height="2.17" fill="#7d8f5c"/><rect x="1430.03" y="214.83" width="2.17" height="4.34" fill="#e3d0ac"/><rect x="1436.54" y="212.66" width="2.17" height="2.17" fill="#8c7052"/><rect x="1419.18" y="232.19" width="2.17" height="2.17" fill="#8c7052"/><rect x="1421.35" y="230.02" width="2.17" height="2.17" fill="#a88a68"/><rect x="1505.98" y="188.79" width="2.17" height="4.34" fill="#a88a68"/><rect x="1456.07" y="201.81" width="2.17" height="2.17" fill="#7d8f5c"/><rect x="1469.09" y="190.96" width="2.17" height="2.17" fill="#d9c29c"/><rect x="1525.51" y="201.81" width="2.17" height="4.34" fill="#e3d0ac"/><rect x="1514.66" y="195.30" width="2.17" height="4.34" fill="#d9c29c"/><rect x="1564.57" y="232.19" width="2.17" height="2.17" fill="#8c7052"/><rect x="1566.74" y="238.70" width="2.17" height="4.34" fill="#8c7052"/><rect x="1417.01" y="236.53" width="2.17" height="2.17" fill="#d9c29c"/><rect x="1451.73" y="203.98" width="2.17" height="2.17" fill="#e3d0ac"/><rect x="1519.00" y="190.96" width="2.17" height="2.17" fill="#a88a68"/><rect x="1534.19" y="197.47" width="2.17" height="4.34" fill="#a88a68"/><rect x="1488.62" y="190.96" width="2.17" height="4.34" fill="#a88a68"/><rect x="1475.60" y="190.96" width="2.17" height="4.34" fill="#e3d0ac"/><rect x="1427.86" y="217.00" width="2.17" height="4.34" fill="#d9c29c"/><rect x="1555.89" y="214.83" width="2.17" height="4.34" fill="#7d8f5c"/><rect x="1419.18" y="234.36" width="2.17" height="4.34" fill="#8c7052"/><rect x="1417.01" y="243.04" width="2.17" height="2.17" fill="#e3d0ac"/><rect x="1423.52" y="223.51" width="2.17" height="4.34" fill="#8c7052"/><rect x="1427.86" y="217.00" width="2.17" height="2.17" fill="#7d8f5c"/><rect x="1560.23" y="225.68" width="2.17" height="4.34" fill="#a88a68"/><rect x="1434.37" y="212.66" width="2.17" height="4.34" fill="#d9c29c"/><rect x="1427.86" y="217.00" width="2.17" height="4.34" fill="#7d8f5c"/><rect x="1560.23" y="223.51" width="2.17" height="4.34" fill="#7d8f5c"/><rect x="1432.20" y="212.66" width="2.17" height="4.34" fill="#8c7052"/><rect x="1488.62" y="190.96" width="2.17" height="4.34" fill="#a88a68"/><rect x="1516.83" y="195.30" width="2.17" height="4.34" fill="#8c7052"/><rect x="1419.18" y="234.36" width="2.17" height="4.34" fill="#a88a68"/><rect x="1540.70" y="201.81" width="2.17" height="4.34" fill="#e3d0ac"/><rect x="1438.71" y="210.49" width="2.17" height="2.17" fill="#d9c29c"/><rect x="1555.89" y="221.34" width="2.17" height="2.17" fill="#e3d0ac"/><rect x="1427.86" y="221.34" width="2.17" height="2.17" fill="#8c7052"/><rect x="1427.86" y="221.34" width="2.17" height="4.34" fill="#d9c29c"/><rect x="1527.68" y="197.47" width="2.17" height="2.17" fill="#e3d0ac"/><rect x="1425.69" y="217.00" width="2.17" height="4.34" fill="#e3d0ac"/><rect x="1447.39" y="206.15" width="2.17" height="4.34" fill="#e3d0ac"/><rect x="1417.01" y="240.87" width="2.17" height="4.34" fill="#d9c29c"/><rect x="1521.17" y="195.30" width="2.17" height="4.34" fill="#d9c29c"/><rect x="1553.72" y="219.17" width="2.17" height="2.17" fill="#a88a68"/><rect x="1553.72" y="217.00" width="2.17" height="2.17" fill="#8c7052"/><rect x="1555.89" y="221.34" width="2.17" height="2.17" fill="#d9c29c"/><rect x="1486.45" y="193.13" width="2.17" height="2.17" fill="#d9c29c"/><rect x="1421.35" y="223.51" width="2.17" height="2.17" fill="#7d8f5c"/><rect x="1421.35" y="232.19" width="2.17" height="4.34" fill="#d9c29c"/><rect x="1460.41" y="197.47" width="2.17" height="2.17" fill="#a88a68"/><rect x="1419.18" y="232.19" width="2.17" height="2.17" fill="#d9c29c"/><rect x="1464.75" y="197.47" width="2.17" height="2.17" fill="#a88a68"/><rect x="1482.11" y="188.79" width="2.17" height="4.34" fill="#a88a68"/><rect x="1421.35" y="227.85" width="2.17" height="4.34" fill="#a88a68"/><rect x="1551.55" y="212.66" width="2.17" height="2.17" fill="#8c7052"/><rect x="1438.71" y="208.32" width="2.17" height="2.17" fill="#d9c29c"/><rect x="1558.06" y="221.34" width="2.17" height="4.34" fill="#e3d0ac"/><rect x="1462.58" y="195.30" width="2.17" height="2.17" fill="#e3d0ac"/><rect x="1451.73" y="199.64" width="2.17" height="2.17" fill="#d9c29c"/><rect x="1564.57" y="234.36" width="2.17" height="2.17" fill="#e3d0ac"/><rect x="1564.57" y="230.02" width="2.17" height="4.34" fill="#a88a68"/><rect x="1492.96" y="193.13" width="2.17" height="4.34" fill="#e3d0ac"/><rect x="1538.53" y="201.81" width="2.17" height="4.34" fill="#d9c29c"/><rect x="1499.47" y="188.79" width="2.17" height="2.17" fill="#a88a68"/><rect x="1540.70" y="206.15" width="2.17" height="4.34" fill="#8c7052"/><rect x="1564.57" y="227.85" width="2.17" height="2.17" fill="#7d8f5c"/><rect x="1549.38" y="206.15" width="2.17" height="2.17" fill="#8c7052"/><path d="M1435.5 250.5 L1437.0 247.5 L1437.0 243.0 L1440.0 241.5 L1438.5 237.0 L1441.5 235.5 L1443.0 232.5 L1441.5 228.0 L1444.5 226.5 L1447.5 225.0 L1449.0 222.0 L1452.0 222.0 L1456.5 222.0 L1458.0 219.0 L1461.0 219.0 L1464.0 216.0 L1467.0 214.5 L1470.0 213.0 L1473.0 213.0 L1476.0 214.5 L1479.0 213.0 L1482.0 213.0 L1485.0 211.5 L1488.0 213.0 L1491.0 210.0 L1494.0 210.0 L1497.0 211.5 L1500.0 211.5 L1503.0 210.0 L1506.0 208.5 L1509.0 210.0 L1512.0 210.0 L1515.0 211.5 L1518.0 213.0 L1521.0 211.5 L1524.0 214.5 L1527.0 214.5 L1531.5 213.0 L1533.0 216.0 L1534.5 217.5 L1539.0 217.5 L1540.5 220.5 L1542.0 223.5 L1545.0 223.5 L1546.5 226.5 L1551.0 226.5 L1551.0 229.5 L1551.0 234.0 L1555.5 235.5 L1557.0 238.5 L1557.0 241.5 L1557.0 244.5 L1557.0 250.5 L1554.0 247.5 L1552.5 246.0 L1549.5 243.0 L1546.5 243.0 L1543.5 241.5 L1540.5 240.0 L1536.0 241.5 L1534.5 238.5 L1530.0 240.0 L1528.5 237.0 L1525.5 235.5 L1521.0 238.5 L1518.0 235.5 L1515.0 234.0 L1512.0 235.5 L1509.0 235.5 L1506.0 231.0 L1503.0 231.0 L1500.0 234.0 L1497.0 231.0 L1494.0 231.0 L1491.0 234.0 L1488.0 232.5 L1485.0 235.5 L1482.0 234.0 L1479.0 234.0 L1476.0 234.0 L1471.5 234.0 L1470.0 237.0 L1465.5 235.5 L1462.5 234.0 L1459.5 235.5 L1458.0 237.0 L1455.0 240.0 L1450.5 238.5 L1449.0 241.5 L1447.5 246.0 L1443.0 244.5 L1441.5 247.5 L1438.5 249.0Z" fill="#5a9b90"/><path d="M1444.5 234.0 L1447.5 234.0 L1450.5 235.5 L1453.5 232.5 L1458.0 231.0 L1461.0 231.0 L1464.0 229.5 L1467.0 231.0 L1470.0 231.0 L1473.0 231.0 L1476.0 228.0 L1479.0 228.0 L1482.0 226.5 L1485.0 229.5 L1488.0 229.5 L1491.0 226.5 L1494.0 231.0 L1497.0 231.0 L1500.0 229.5 L1503.0 229.5 L1506.0 226.5 L1509.0 226.5 L1512.0 229.5 L1516.5 226.5 L1519.5 228.0 L1522.5 228.0 L1525.5 228.0 L1528.5 232.5 L1531.5 232.5 L1533.0 235.5 L1537.5 235.5 L1539.0 237.0 L1543.5 237.0 L1545.0 240.0 L1549.5 240.0 L1552.5 240.0 L1552.5 243.0 L1554.0 246.0 L1557.0 249.0 L1558.5 250.5 L1561.5 253.5 L1561.5 256.5 L1560.0 259.5 L1561.5 262.5 L1557.0 265.5 L1558.5 268.5 L1555.5 271.5 L1557.0 274.5 L1554.0 277.5 L1554.0 282.0 L1558.5 283.5 L1558.5 286.5 L1555.5 291.0 L1558.5 294.0 L1557.0 297.0 L1561.5 300.0 L1563.0 301.5 L1561.5 306.0 L1563.0 307.5 L1561.5 312.0 L1558.5 315.0 L1555.5 316.5 L1551.0 316.5 L1549.5 319.5 L1548.0 324.0 L1545.0 324.0 L1543.5 327.0 L1540.5 328.5 L1536.0 327.0 L1536.0 331.5 L1533.0 331.5 L1530.0 334.5 L1527.0 336.0 L1524.0 334.5 L1521.0 337.5 L1518.0 336.0 L1515.0 339.0 L1512.0 337.5 L1509.0 339.0 L1506.0 339.0 L1503.0 336.0 L1498.5 337.5 L1495.5 339.0 L1492.5 336.0 L1489.5 339.0 L1486.5 337.5 L1483.5 334.5 L1480.5 336.0 L1476.0 337.5 L1473.0 333.0 L1470.0 336.0 L1467.0 336.0 L1464.0 333.0 L1459.5 334.5 L1458.0 333.0 L1455.0 331.5 L1452.0 330.0 L1452.0 325.5 L1447.5 325.5 L1446.0 321.0 L1443.0 319.5 L1443.0 316.5 L1446.0 313.5 L1443.0 310.5 L1443.0 307.5 L1444.5 304.5 L1440.0 301.5 L1440.0 298.5 L1443.0 294.0 L1441.5 292.5 L1438.5 289.5 L1438.5 286.5 L1440.0 283.5 L1441.5 279.0 L1437.0 277.5 L1440.0 273.0 L1440.0 271.5 L1438.5 268.5 L1437.0 265.5 L1435.5 262.5 L1434.0 259.5 L1438.5 255.0 L1434.0 252.0 L1438.5 250.5 L1437.0 246.0 L1441.5 244.5 L1441.5 240.0 L1441.5 237.0Z" fill="#383838"/><path d="M1665.0 186.0 L1665.0 190.5 L1665.0 193.5 L1666.5 196.5 L1671.0 199.5 L1671.0 202.5 L1674.0 205.5 L1674.0 208.5 L1674.0 211.5 L1678.5 213.0 L1678.5 217.5 L1681.5 219.0 L1681.5 222.0 L1684.5 223.5 L1686.0 226.5 L1690.5 226.5 L1693.5 226.5 L1696.5 228.0 L1699.5 229.5 L1701.0 232.5 L1704.0 234.0 L1705.5 235.5 L1710.0 237.0 L1713.0 237.0 L1716.0 240.0 L1719.0 240.0 L1723.5 240.0 L1725.0 240.0 L1723.5 243.0 L1719.0 243.0 L1716.0 244.5 L1713.0 246.0 L1710.0 247.5 L1707.0 249.0 L1704.0 250.5 L1702.5 250.5 L1698.0 253.5 L1698.0 255.0 L1695.0 258.0 L1695.0 261.0 L1695.0 264.0 L1693.5 267.0 L1693.5 270.0 L1690.5 273.0 L1690.5 276.0 L1689.0 279.0 L1687.5 282.0 L1684.5 283.5 L1684.5 286.5 L1681.5 289.5 L1680.0 292.5 L1678.5 295.5 L1675.5 297.0 L1672.5 297.0 L1669.5 300.0 L1665.0 300.0 L1662.0 301.5 L1659.0 300.0 L1654.5 300.0 L1653.0 297.0 L1650.0 294.0 L1645.5 295.5 L1644.0 294.0 L1641.0 291.0 L1635.0 292.5 L1633.5 289.5 L1635.0 286.5 L1632.0 283.5 L1630.5 280.5 L1626.0 279.0 L1626.0 276.0 L1626.0 271.5 L1626.0 268.5 L1624.5 265.5 L1621.5 262.5 L1623.0 259.5 L1620.0 256.5 L1620.0 253.5 L1621.5 250.5 L1624.5 252.0 L1627.5 249.0 L1629.0 247.5 L1630.5 244.5 L1632.0 241.5 L1633.5 238.5 L1633.5 235.5 L1632.0 232.5 L1635.0 229.5 L1633.5 226.5 L1633.5 222.0 L1636.5 220.5 L1641.0 220.5 L1642.5 217.5 L1645.5 217.5 L1647.0 214.5 L1651.5 216.0 L1654.5 214.5 L1654.5 211.5 L1654.5 207.0 L1657.5 205.5 L1657.5 202.5 L1657.5 198.0 L1659.0 195.0 L1663.5 193.5 L1660.5 189.0Z" fill="#0f7d83"/><path d="M1628 272 Q1645 300 1680 290 L1676 298 Q1650 304 1630 285Z" fill="#5d9c92"/><path d="M1651.5 225.0 L1654.5 228.0 L1657.5 229.5 L1660.5 226.5 L1663.5 229.5 L1666.5 229.5 L1669.5 231.0 L1674.0 229.5 L1677.0 232.5 L1678.5 235.5 L1681.5 238.5 L1684.5 238.5 L1687.5 241.5 L1689.0 246.0 L1687.5 249.0 L1689.0 252.0 L1689.0 256.5 L1684.5 258.0 L1686.0 262.5 L1681.5 264.0 L1680.0 267.0 L1680.0 271.5 L1675.5 270.0 L1674.0 271.5 L1669.5 271.5 L1668.0 276.0 L1665.0 276.0 L1662.0 276.0 L1659.0 277.5 L1656.0 277.5 L1653.0 276.0 L1650.0 273.0 L1647.0 273.0 L1644.0 270.0 L1639.5 270.0 L1639.5 267.0 L1638.0 264.0 L1638.0 261.0 L1633.5 259.5 L1633.5 256.5 L1632.0 253.5 L1632.0 250.5 L1633.5 247.5 L1636.5 246.0 L1636.5 241.5 L1639.5 240.0 L1641.0 237.0 L1641.0 234.0 L1644.0 232.5 L1648.5 231.0 L1648.5 228.0Z" fill="#c9e58a"/><path d="M1634 258 Q1642 282 1662 281 Q1684 276 1690 256" fill="none" stroke="#b0926c" stroke-width="3.5"/><rect x="1650" y="240" width="6" height="5" fill="#a9d28f"/><rect x="1662" y="252" width="5" height="8" fill="#a9d28f"/><rect x="1592" y="314.6" width="70.4" height="69.6" fill="#6db8a2"/><rect x="1592" y="384" width="139.5" height="79" fill="url(#pgrass)"/><g shape-rendering="crispEdges"><rect x="1652.76" y="403.53" width="2.17" height="2.17" fill="#dcc596"/><rect x="1657.10" y="405.70" width="2.17" height="2.17" fill="#d0b892"/><rect x="1663.61" y="405.70" width="2.17" height="2.17" fill="#d0b892"/><rect x="1667.95" y="405.70" width="2.17" height="2.17" fill="#d0b892"/><rect x="1665.78" y="407.87" width="2.17" height="2.17" fill="#d7bf92"/><rect x="1667.95" y="407.87" width="2.17" height="2.17" fill="#e9d8aa"/><rect x="1672.29" y="407.87" width="2.17" height="2.17" fill="#e6d2a2"/><rect x="1654.93" y="410.04" width="2.17" height="2.17" fill="#d7bf92"/><rect x="1652.76" y="412.21" width="2.17" height="2.17" fill="#cdb48a"/><rect x="1654.93" y="412.21" width="2.17" height="2.17" fill="#d7bf92"/><rect x="1657.10" y="412.21" width="2.17" height="2.17" fill="#d0b892"/><rect x="1661.44" y="412.21" width="2.17" height="2.17" fill="#e6d2a2"/><rect x="1665.78" y="412.21" width="2.17" height="2.17" fill="#d7bf92"/><rect x="1672.29" y="412.21" width="2.17" height="2.17" fill="#d7bf92"/><rect x="1650.59" y="414.38" width="2.17" height="2.17" fill="#cdb48a"/><rect x="1652.76" y="414.38" width="2.17" height="2.17" fill="#dcc596"/><rect x="1657.10" y="414.38" width="2.17" height="2.17" fill="#cdb48a"/><rect x="1659.27" y="414.38" width="2.17" height="2.17" fill="#e6d2a2"/><rect x="1661.44" y="414.38" width="2.17" height="2.17" fill="#cdb48a"/><rect x="1667.95" y="414.38" width="2.17" height="2.17" fill="#e9d8aa"/><rect x="1672.29" y="414.38" width="2.17" height="2.17" fill="#d0b892"/><rect x="1650.59" y="416.55" width="2.17" height="2.17" fill="#d0b892"/><rect x="1654.93" y="416.55" width="2.17" height="2.17" fill="#d0b892"/><rect x="1657.10" y="416.55" width="2.17" height="2.17" fill="#d0b892"/><rect x="1659.27" y="416.55" width="2.17" height="2.17" fill="#dcc596"/><rect x="1665.78" y="416.55" width="2.17" height="2.17" fill="#cdb48a"/><rect x="1667.95" y="416.55" width="2.17" height="2.17" fill="#e9d8aa"/><rect x="1670.12" y="416.55" width="2.17" height="2.17" fill="#cdb48a"/><rect x="1646.25" y="418.72" width="2.17" height="2.17" fill="#cdb48a"/><rect x="1648.42" y="418.72" width="2.17" height="2.17" fill="#dcc596"/><rect x="1650.59" y="418.72" width="2.17" height="2.17" fill="#dcc596"/><rect x="1654.93" y="418.72" width="2.17" height="2.17" fill="#e6d2a2"/><rect x="1657.10" y="418.72" width="2.17" height="2.17" fill="#d7bf92"/><rect x="1661.44" y="418.72" width="2.17" height="2.17" fill="#e9d8aa"/><rect x="1663.61" y="418.72" width="2.17" height="2.17" fill="#e6d2a2"/><rect x="1665.78" y="418.72" width="2.17" height="2.17" fill="#d0b892"/><rect x="1667.95" y="418.72" width="2.17" height="2.17" fill="#d7bf92"/><rect x="1670.12" y="418.72" width="2.17" height="2.17" fill="#cdb48a"/><rect x="1674.46" y="418.72" width="2.17" height="2.17" fill="#d7bf92"/><rect x="1676.63" y="418.72" width="2.17" height="2.17" fill="#dcc596"/><rect x="1678.80" y="418.72" width="2.17" height="2.17" fill="#e9d8aa"/><rect x="1644.08" y="420.89" width="2.17" height="2.17" fill="#e6d2a2"/><rect x="1648.42" y="420.89" width="2.17" height="2.17" fill="#d0b892"/><rect x="1650.59" y="420.89" width="2.17" height="2.17" fill="#dcc596"/><rect x="1652.76" y="420.89" width="2.17" height="2.17" fill="#e9d8aa"/><rect x="1654.93" y="420.89" width="2.17" height="2.17" fill="#e6d2a2"/><rect x="1657.10" y="420.89" width="2.17" height="2.17" fill="#cdb48a"/><rect x="1663.61" y="420.89" width="2.17" height="2.17" fill="#e9d8aa"/><rect x="1667.95" y="420.89" width="2.17" height="2.17" fill="#dcc596"/><rect x="1670.12" y="420.89" width="2.17" height="2.17" fill="#e6d2a2"/><rect x="1674.46" y="420.89" width="2.17" height="2.17" fill="#e9d8aa"/><rect x="1680.97" y="420.89" width="2.17" height="2.17" fill="#d0b892"/><rect x="1683.14" y="420.89" width="2.17" height="2.17" fill="#e6d2a2"/><rect x="1639.74" y="423.06" width="2.17" height="2.17" fill="#dcc596"/><rect x="1641.91" y="423.06" width="2.17" height="2.17" fill="#e9d8aa"/><rect x="1652.76" y="423.06" width="2.17" height="2.17" fill="#cdb48a"/><rect x="1657.10" y="423.06" width="2.17" height="2.17" fill="#e6d2a2"/><rect x="1661.44" y="423.06" width="2.17" height="2.17" fill="#dcc596"/><rect x="1663.61" y="423.06" width="2.17" height="2.17" fill="#e9d8aa"/><rect x="1665.78" y="423.06" width="2.17" height="2.17" fill="#dcc596"/><rect x="1670.12" y="423.06" width="2.17" height="2.17" fill="#d7bf92"/><rect x="1676.63" y="423.06" width="2.17" height="2.17" fill="#d0b892"/><rect x="1678.80" y="423.06" width="2.17" height="2.17" fill="#dcc596"/><rect x="1683.14" y="423.06" width="2.17" height="2.17" fill="#e6d2a2"/><rect x="1637.57" y="425.23" width="2.17" height="2.17" fill="#dcc596"/><rect x="1644.08" y="425.23" width="2.17" height="2.17" fill="#e6d2a2"/><rect x="1648.42" y="425.23" width="2.17" height="2.17" fill="#dcc596"/><rect x="1650.59" y="425.23" width="2.17" height="2.17" fill="#dcc596"/><rect x="1652.76" y="425.23" width="2.17" height="2.17" fill="#d7bf92"/><rect x="1654.93" y="425.23" width="2.17" height="2.17" fill="#d7bf92"/><rect x="1657.10" y="425.23" width="2.17" height="2.17" fill="#d0b892"/><rect x="1659.27" y="425.23" width="2.17" height="2.17" fill="#e9d8aa"/><rect x="1661.44" y="425.23" width="2.17" height="2.17" fill="#cdb48a"/><rect x="1663.61" y="425.23" width="2.17" height="2.17" fill="#e9d8aa"/><rect x="1665.78" y="425.23" width="2.17" height="2.17" fill="#d7bf92"/><rect x="1667.95" y="425.23" width="2.17" height="2.17" fill="#cdb48a"/><rect x="1670.12" y="425.23" width="2.17" height="2.17" fill="#d7bf92"/><rect x="1674.46" y="425.23" width="2.17" height="2.17" fill="#e6d2a2"/><rect x="1676.63" y="425.23" width="2.17" height="2.17" fill="#e6d2a2"/><rect x="1639.74" y="427.40" width="2.17" height="2.17" fill="#dcc596"/><rect x="1644.08" y="427.40" width="2.17" height="2.17" fill="#dcc596"/><rect x="1646.25" y="427.40" width="2.17" height="2.17" fill="#d0b892"/><rect x="1648.42" y="427.40" width="2.17" height="2.17" fill="#d7bf92"/><rect x="1650.59" y="427.40" width="2.17" height="2.17" fill="#cdb48a"/><rect x="1652.76" y="427.40" width="2.17" height="2.17" fill="#e9d8aa"/><rect x="1654.93" y="427.40" width="2.17" height="2.17" fill="#cdb48a"/><rect x="1657.10" y="427.40" width="2.17" height="2.17" fill="#e6d2a2"/><rect x="1659.27" y="427.40" width="2.17" height="2.17" fill="#e9d8aa"/><rect x="1661.44" y="427.40" width="2.17" height="2.17" fill="#e6d2a2"/><rect x="1663.61" y="427.40" width="2.17" height="2.17" fill="#dcc596"/><rect x="1665.78" y="427.40" width="2.17" height="2.17" fill="#d7bf92"/><rect x="1667.95" y="427.40" width="2.17" height="2.17" fill="#cdb48a"/><rect x="1670.12" y="427.40" width="2.17" height="2.17" fill="#dcc596"/><rect x="1676.63" y="427.40" width="2.17" height="2.17" fill="#e9d8aa"/><rect x="1678.80" y="427.40" width="2.17" height="2.17" fill="#dcc596"/><rect x="1683.14" y="427.40" width="2.17" height="2.17" fill="#d7bf92"/><rect x="1685.31" y="427.40" width="2.17" height="2.17" fill="#dcc596"/><rect x="1639.74" y="429.57" width="2.17" height="2.17" fill="#e9d8aa"/><rect x="1641.91" y="429.57" width="2.17" height="2.17" fill="#d0b892"/><rect x="1644.08" y="429.57" width="2.17" height="2.17" fill="#d0b892"/><rect x="1648.42" y="429.57" width="2.17" height="2.17" fill="#d7bf92"/><rect x="1652.76" y="429.57" width="2.17" height="2.17" fill="#dcc596"/><rect x="1659.27" y="429.57" width="2.17" height="2.17" fill="#e9d8aa"/><rect x="1661.44" y="429.57" width="2.17" height="2.17" fill="#d7bf92"/><rect x="1663.61" y="429.57" width="2.17" height="2.17" fill="#dcc596"/><rect x="1665.78" y="429.57" width="2.17" height="2.17" fill="#cdb48a"/><rect x="1667.95" y="429.57" width="2.17" height="2.17" fill="#dcc596"/><rect x="1670.12" y="429.57" width="2.17" height="2.17" fill="#d0b892"/><rect x="1674.46" y="429.57" width="2.17" height="2.17" fill="#e6d2a2"/><rect x="1676.63" y="429.57" width="2.17" height="2.17" fill="#d7bf92"/><rect x="1680.97" y="429.57" width="2.17" height="2.17" fill="#d7bf92"/><rect x="1683.14" y="429.57" width="2.17" height="2.17" fill="#e9d8aa"/><rect x="1685.31" y="429.57" width="2.17" height="2.17" fill="#e6d2a2"/><rect x="1687.48" y="429.57" width="2.17" height="2.17" fill="#e9d8aa"/><rect x="1635.40" y="431.74" width="2.17" height="2.17" fill="#cdb48a"/><rect x="1637.57" y="431.74" width="2.17" height="2.17" fill="#e9d8aa"/><rect x="1641.91" y="431.74" width="2.17" height="2.17" fill="#d0b892"/><rect x="1644.08" y="431.74" width="2.17" height="2.17" fill="#e6d2a2"/><rect x="1648.42" y="431.74" width="2.17" height="2.17" fill="#dcc596"/><rect x="1650.59" y="431.74" width="2.17" height="2.17" fill="#e6d2a2"/><rect x="1652.76" y="431.74" width="2.17" height="2.17" fill="#e9d8aa"/><rect x="1654.93" y="431.74" width="2.17" height="2.17" fill="#e9d8aa"/><rect x="1657.10" y="431.74" width="2.17" height="2.17" fill="#d7bf92"/><rect x="1659.27" y="431.74" width="2.17" height="2.17" fill="#d7bf92"/><rect x="1661.44" y="431.74" width="2.17" height="2.17" fill="#e9d8aa"/><rect x="1663.61" y="431.74" width="2.17" height="2.17" fill="#cdb48a"/><rect x="1665.78" y="431.74" width="2.17" height="2.17" fill="#d7bf92"/><rect x="1667.95" y="431.74" width="2.17" height="2.17" fill="#d0b892"/><rect x="1672.29" y="431.74" width="2.17" height="2.17" fill="#dcc596"/><rect x="1674.46" y="431.74" width="2.17" height="2.17" fill="#dcc596"/><rect x="1676.63" y="431.74" width="2.17" height="2.17" fill="#cdb48a"/><rect x="1678.80" y="431.74" width="2.17" height="2.17" fill="#d0b892"/><rect x="1680.97" y="431.74" width="2.17" height="2.17" fill="#d0b892"/><rect x="1685.31" y="431.74" width="2.17" height="2.17" fill="#cdb48a"/><rect x="1689.65" y="431.74" width="2.17" height="2.17" fill="#e9d8aa"/><rect x="1637.57" y="433.91" width="2.17" height="2.17" fill="#e9d8aa"/><rect x="1646.25" y="433.91" width="2.17" height="2.17" fill="#d7bf92"/><rect x="1648.42" y="433.91" width="2.17" height="2.17" fill="#e6d2a2"/><rect x="1650.59" y="433.91" width="2.17" height="2.17" fill="#d7bf92"/><rect x="1652.76" y="433.91" width="2.17" height="2.17" fill="#e9d8aa"/><rect x="1654.93" y="433.91" width="2.17" height="2.17" fill="#e6d2a2"/><rect x="1657.10" y="433.91" width="2.17" height="2.17" fill="#cdb48a"/><rect x="1659.27" y="433.91" width="2.17" height="2.17" fill="#e9d8aa"/><rect x="1661.44" y="433.91" width="2.17" height="2.17" fill="#e6d2a2"/><rect x="1663.61" y="433.91" width="2.17" height="2.17" fill="#cdb48a"/><rect x="1665.78" y="433.91" width="2.17" height="2.17" fill="#e6d2a2"/><rect x="1667.95" y="433.91" width="2.17" height="2.17" fill="#e6d2a2"/><rect x="1670.12" y="433.91" width="2.17" height="2.17" fill="#d7bf92"/><rect x="1674.46" y="433.91" width="2.17" height="2.17" fill="#d7bf92"/><rect x="1678.80" y="433.91" width="2.17" height="2.17" fill="#d0b892"/><rect x="1683.14" y="433.91" width="2.17" height="2.17" fill="#e9d8aa"/><rect x="1687.48" y="433.91" width="2.17" height="2.17" fill="#d0b892"/><rect x="1693.99" y="433.91" width="2.17" height="2.17" fill="#d0b892"/><rect x="1641.91" y="436.08" width="2.17" height="2.17" fill="#e9d8aa"/><rect x="1644.08" y="436.08" width="2.17" height="2.17" fill="#e6d2a2"/><rect x="1646.25" y="436.08" width="2.17" height="2.17" fill="#dcc596"/><rect x="1648.42" y="436.08" width="2.17" height="2.17" fill="#d7bf92"/><rect x="1650.59" y="436.08" width="2.17" height="2.17" fill="#d0b892"/><rect x="1652.76" y="436.08" width="2.17" height="2.17" fill="#e9d8aa"/><rect x="1654.93" y="436.08" width="2.17" height="2.17" fill="#e9d8aa"/><rect x="1657.10" y="436.08" width="2.17" height="2.17" fill="#cdb48a"/><rect x="1659.27" y="436.08" width="2.17" height="2.17" fill="#cdb48a"/><rect x="1661.44" y="436.08" width="2.17" height="2.17" fill="#e6d2a2"/><rect x="1663.61" y="436.08" width="2.17" height="2.17" fill="#cdb48a"/><rect x="1665.78" y="436.08" width="2.17" height="2.17" fill="#cdb48a"/><rect x="1667.95" y="436.08" width="2.17" height="2.17" fill="#cdb48a"/><rect x="1670.12" y="436.08" width="2.17" height="2.17" fill="#e6d2a2"/><rect x="1674.46" y="436.08" width="2.17" height="2.17" fill="#e9d8aa"/><rect x="1676.63" y="436.08" width="2.17" height="2.17" fill="#cdb48a"/><rect x="1678.80" y="436.08" width="2.17" height="2.17" fill="#d0b892"/><rect x="1680.97" y="436.08" width="2.17" height="2.17" fill="#e9d8aa"/><rect x="1683.14" y="436.08" width="2.17" height="2.17" fill="#e9d8aa"/><rect x="1687.48" y="436.08" width="2.17" height="2.17" fill="#e6d2a2"/><rect x="1689.65" y="436.08" width="2.17" height="2.17" fill="#d7bf92"/><rect x="1691.82" y="436.08" width="2.17" height="2.17" fill="#e6d2a2"/><rect x="1641.91" y="438.25" width="2.17" height="2.17" fill="#e9d8aa"/><rect x="1648.42" y="438.25" width="2.17" height="2.17" fill="#e6d2a2"/><rect x="1650.59" y="438.25" width="2.17" height="2.17" fill="#d0b892"/><rect x="1652.76" y="438.25" width="2.17" height="2.17" fill="#d7bf92"/><rect x="1654.93" y="438.25" width="2.17" height="2.17" fill="#e9d8aa"/><rect x="1657.10" y="438.25" width="2.17" height="2.17" fill="#dcc596"/><rect x="1661.44" y="438.25" width="2.17" height="2.17" fill="#d0b892"/><rect x="1663.61" y="438.25" width="2.17" height="2.17" fill="#d7bf92"/><rect x="1665.78" y="438.25" width="2.17" height="2.17" fill="#e9d8aa"/><rect x="1667.95" y="438.25" width="2.17" height="2.17" fill="#cdb48a"/><rect x="1670.12" y="438.25" width="2.17" height="2.17" fill="#cdb48a"/><rect x="1672.29" y="438.25" width="2.17" height="2.17" fill="#d7bf92"/><rect x="1674.46" y="438.25" width="2.17" height="2.17" fill="#cdb48a"/><rect x="1676.63" y="438.25" width="2.17" height="2.17" fill="#dcc596"/><rect x="1678.80" y="438.25" width="2.17" height="2.17" fill="#d0b892"/><rect x="1680.97" y="438.25" width="2.17" height="2.17" fill="#d0b892"/><rect x="1683.14" y="438.25" width="2.17" height="2.17" fill="#d0b892"/><rect x="1687.48" y="438.25" width="2.17" height="2.17" fill="#d0b892"/><rect x="1628.89" y="440.42" width="2.17" height="2.17" fill="#e9d8aa"/><rect x="1633.23" y="440.42" width="2.17" height="2.17" fill="#cdb48a"/><rect x="1644.08" y="440.42" width="2.17" height="2.17" fill="#cdb48a"/><rect x="1646.25" y="440.42" width="2.17" height="2.17" fill="#d0b892"/><rect x="1648.42" y="440.42" width="2.17" height="2.17" fill="#e6d2a2"/><rect x="1650.59" y="440.42" width="2.17" height="2.17" fill="#d0b892"/><rect x="1652.76" y="440.42" width="2.17" height="2.17" fill="#d0b892"/><rect x="1654.93" y="440.42" width="2.17" height="2.17" fill="#dcc596"/><rect x="1657.10" y="440.42" width="2.17" height="2.17" fill="#d0b892"/><rect x="1659.27" y="440.42" width="2.17" height="2.17" fill="#dcc596"/><rect x="1661.44" y="440.42" width="2.17" height="2.17" fill="#cdb48a"/><rect x="1663.61" y="440.42" width="2.17" height="2.17" fill="#e9d8aa"/><rect x="1665.78" y="440.42" width="2.17" height="2.17" fill="#dcc596"/><rect x="1667.95" y="440.42" width="2.17" height="2.17" fill="#d0b892"/><rect x="1670.12" y="440.42" width="2.17" height="2.17" fill="#d7bf92"/><rect x="1672.29" y="440.42" width="2.17" height="2.17" fill="#d0b892"/><rect x="1674.46" y="440.42" width="2.17" height="2.17" fill="#e9d8aa"/><rect x="1678.80" y="440.42" width="2.17" height="2.17" fill="#d0b892"/><rect x="1680.97" y="440.42" width="2.17" height="2.17" fill="#dcc596"/><rect x="1683.14" y="440.42" width="2.17" height="2.17" fill="#e6d2a2"/><rect x="1689.65" y="440.42" width="2.17" height="2.17" fill="#e6d2a2"/><rect x="1626.72" y="442.59" width="2.17" height="2.17" fill="#e9d8aa"/><rect x="1637.57" y="442.59" width="2.17" height="2.17" fill="#cdb48a"/><rect x="1639.74" y="442.59" width="2.17" height="2.17" fill="#d7bf92"/><rect x="1641.91" y="442.59" width="2.17" height="2.17" fill="#dcc596"/><rect x="1644.08" y="442.59" width="2.17" height="2.17" fill="#cdb48a"/><rect x="1646.25" y="442.59" width="2.17" height="2.17" fill="#dcc596"/><rect x="1648.42" y="442.59" width="2.17" height="2.17" fill="#e6d2a2"/><rect x="1650.59" y="442.59" width="2.17" height="2.17" fill="#dcc596"/><rect x="1654.93" y="442.59" width="2.17" height="2.17" fill="#e6d2a2"/><rect x="1657.10" y="442.59" width="2.17" height="2.17" fill="#e6d2a2"/><rect x="1659.27" y="442.59" width="2.17" height="2.17" fill="#dcc596"/><rect x="1661.44" y="442.59" width="2.17" height="2.17" fill="#d0b892"/><rect x="1663.61" y="442.59" width="2.17" height="2.17" fill="#d0b892"/><rect x="1665.78" y="442.59" width="2.17" height="2.17" fill="#e9d8aa"/><rect x="1670.12" y="442.59" width="2.17" height="2.17" fill="#cdb48a"/><rect x="1672.29" y="442.59" width="2.17" height="2.17" fill="#cdb48a"/><rect x="1676.63" y="442.59" width="2.17" height="2.17" fill="#e6d2a2"/><rect x="1683.14" y="442.59" width="2.17" height="2.17" fill="#cdb48a"/><rect x="1687.48" y="442.59" width="2.17" height="2.17" fill="#cdb48a"/><rect x="1689.65" y="442.59" width="2.17" height="2.17" fill="#d0b892"/><rect x="1693.99" y="442.59" width="2.17" height="2.17" fill="#e9d8aa"/><rect x="1696.16" y="442.59" width="2.17" height="2.17" fill="#e9d8aa"/><rect x="1628.89" y="444.76" width="2.17" height="2.17" fill="#d0b892"/><rect x="1631.06" y="444.76" width="2.17" height="2.17" fill="#e9d8aa"/><rect x="1633.23" y="444.76" width="2.17" height="2.17" fill="#dcc596"/><rect x="1637.57" y="444.76" width="2.17" height="2.17" fill="#e9d8aa"/><rect x="1639.74" y="444.76" width="2.17" height="2.17" fill="#e9d8aa"/><rect x="1641.91" y="444.76" width="2.17" height="2.17" fill="#d0b892"/><rect x="1644.08" y="444.76" width="2.17" height="2.17" fill="#d0b892"/><rect x="1646.25" y="444.76" width="2.17" height="2.17" fill="#cdb48a"/><rect x="1648.42" y="444.76" width="2.17" height="2.17" fill="#d0b892"/><rect x="1652.76" y="444.76" width="2.17" height="2.17" fill="#e6d2a2"/><rect x="1654.93" y="444.76" width="2.17" height="2.17" fill="#e6d2a2"/><rect x="1657.10" y="444.76" width="2.17" height="2.17" fill="#cdb48a"/><rect x="1659.27" y="444.76" width="2.17" height="2.17" fill="#d7bf92"/><rect x="1661.44" y="444.76" width="2.17" height="2.17" fill="#e9d8aa"/><rect x="1663.61" y="444.76" width="2.17" height="2.17" fill="#d0b892"/><rect x="1665.78" y="444.76" width="2.17" height="2.17" fill="#e9d8aa"/><rect x="1667.95" y="444.76" width="2.17" height="2.17" fill="#e9d8aa"/><rect x="1670.12" y="444.76" width="2.17" height="2.17" fill="#cdb48a"/><rect x="1674.46" y="444.76" width="2.17" height="2.17" fill="#cdb48a"/><rect x="1676.63" y="444.76" width="2.17" height="2.17" fill="#dcc596"/><rect x="1678.80" y="444.76" width="2.17" height="2.17" fill="#d0b892"/><rect x="1680.97" y="444.76" width="2.17" height="2.17" fill="#d7bf92"/><rect x="1687.48" y="444.76" width="2.17" height="2.17" fill="#d0b892"/><rect x="1622.38" y="446.93" width="2.17" height="2.17" fill="#d0b892"/><rect x="1628.89" y="446.93" width="2.17" height="2.17" fill="#dcc596"/><rect x="1631.06" y="446.93" width="2.17" height="2.17" fill="#d7bf92"/><rect x="1633.23" y="446.93" width="2.17" height="2.17" fill="#dcc596"/><rect x="1635.40" y="446.93" width="2.17" height="2.17" fill="#d7bf92"/><rect x="1637.57" y="446.93" width="2.17" height="2.17" fill="#cdb48a"/><rect x="1639.74" y="446.93" width="2.17" height="2.17" fill="#d7bf92"/><rect x="1644.08" y="446.93" width="2.17" height="2.17" fill="#cdb48a"/><rect x="1646.25" y="446.93" width="2.17" height="2.17" fill="#dcc596"/><rect x="1650.59" y="446.93" width="2.17" height="2.17" fill="#d0b892"/><rect x="1652.76" y="446.93" width="2.17" height="2.17" fill="#e9d8aa"/><rect x="1654.93" y="446.93" width="2.17" height="2.17" fill="#d7bf92"/><rect x="1657.10" y="446.93" width="2.17" height="2.17" fill="#d7bf92"/><rect x="1659.27" y="446.93" width="2.17" height="2.17" fill="#cdb48a"/><rect x="1661.44" y="446.93" width="2.17" height="2.17" fill="#dcc596"/><rect x="1663.61" y="446.93" width="2.17" height="2.17" fill="#e9d8aa"/><rect x="1670.12" y="446.93" width="2.17" height="2.17" fill="#e9d8aa"/><rect x="1672.29" y="446.93" width="2.17" height="2.17" fill="#d7bf92"/><rect x="1674.46" y="446.93" width="2.17" height="2.17" fill="#d0b892"/><rect x="1676.63" y="446.93" width="2.17" height="2.17" fill="#e6d2a2"/><rect x="1678.80" y="446.93" width="2.17" height="2.17" fill="#e6d2a2"/><rect x="1683.14" y="446.93" width="2.17" height="2.17" fill="#d0b892"/><rect x="1685.31" y="446.93" width="2.17" height="2.17" fill="#e6d2a2"/><rect x="1687.48" y="446.93" width="2.17" height="2.17" fill="#dcc596"/><rect x="1689.65" y="446.93" width="2.17" height="2.17" fill="#d7bf92"/><rect x="1693.99" y="446.93" width="2.17" height="2.17" fill="#dcc596"/><rect x="1696.16" y="446.93" width="2.17" height="2.17" fill="#dcc596"/><rect x="1633.23" y="449.10" width="2.17" height="2.17" fill="#cdb48a"/><rect x="1635.40" y="449.10" width="2.17" height="2.17" fill="#dcc596"/><rect x="1637.57" y="449.10" width="2.17" height="2.17" fill="#d0b892"/><rect x="1639.74" y="449.10" width="2.17" height="2.17" fill="#e6d2a2"/><rect x="1641.91" y="449.10" width="2.17" height="2.17" fill="#e9d8aa"/><rect x="1644.08" y="449.10" width="2.17" height="2.17" fill="#d0b892"/><rect x="1646.25" y="449.10" width="2.17" height="2.17" fill="#d0b892"/><rect x="1654.93" y="449.10" width="2.17" height="2.17" fill="#d7bf92"/><rect x="1657.10" y="449.10" width="2.17" height="2.17" fill="#cdb48a"/><rect x="1659.27" y="449.10" width="2.17" height="2.17" fill="#d0b892"/><rect x="1661.44" y="449.10" width="2.17" height="2.17" fill="#d7bf92"/><rect x="1665.78" y="449.10" width="2.17" height="2.17" fill="#dcc596"/><rect x="1667.95" y="449.10" width="2.17" height="2.17" fill="#e6d2a2"/><rect x="1670.12" y="449.10" width="2.17" height="2.17" fill="#d0b892"/><rect x="1672.29" y="449.10" width="2.17" height="2.17" fill="#e6d2a2"/><rect x="1676.63" y="449.10" width="2.17" height="2.17" fill="#e9d8aa"/><rect x="1678.80" y="449.10" width="2.17" height="2.17" fill="#e9d8aa"/><rect x="1680.97" y="449.10" width="2.17" height="2.17" fill="#d7bf92"/><rect x="1683.14" y="449.10" width="2.17" height="2.17" fill="#e6d2a2"/><rect x="1691.82" y="449.10" width="2.17" height="2.17" fill="#d0b892"/><rect x="1702.67" y="449.10" width="2.17" height="2.17" fill="#e9d8aa"/><rect x="1704.84" y="449.10" width="2.17" height="2.17" fill="#d7bf92"/><rect x="1615.87" y="451.27" width="2.17" height="2.17" fill="#d0b892"/><rect x="1624.55" y="451.27" width="2.17" height="2.17" fill="#d0b892"/><rect x="1628.89" y="451.27" width="2.17" height="2.17" fill="#dcc596"/><rect x="1631.06" y="451.27" width="2.17" height="2.17" fill="#e6d2a2"/><rect x="1641.91" y="451.27" width="2.17" height="2.17" fill="#d0b892"/><rect x="1644.08" y="451.27" width="2.17" height="2.17" fill="#d7bf92"/><rect x="1646.25" y="451.27" width="2.17" height="2.17" fill="#d0b892"/><rect x="1648.42" y="451.27" width="2.17" height="2.17" fill="#d0b892"/><rect x="1650.59" y="451.27" width="2.17" height="2.17" fill="#e9d8aa"/><rect x="1652.76" y="451.27" width="2.17" height="2.17" fill="#e9d8aa"/><rect x="1654.93" y="451.27" width="2.17" height="2.17" fill="#dcc596"/><rect x="1657.10" y="451.27" width="2.17" height="2.17" fill="#dcc596"/><rect x="1659.27" y="451.27" width="2.17" height="2.17" fill="#d0b892"/><rect x="1661.44" y="451.27" width="2.17" height="2.17" fill="#e9d8aa"/><rect x="1663.61" y="451.27" width="2.17" height="2.17" fill="#e9d8aa"/><rect x="1665.78" y="451.27" width="2.17" height="2.17" fill="#d7bf92"/><rect x="1667.95" y="451.27" width="2.17" height="2.17" fill="#d0b892"/><rect x="1670.12" y="451.27" width="2.17" height="2.17" fill="#e6d2a2"/><rect x="1672.29" y="451.27" width="2.17" height="2.17" fill="#cdb48a"/><rect x="1676.63" y="451.27" width="2.17" height="2.17" fill="#cdb48a"/><rect x="1678.80" y="451.27" width="2.17" height="2.17" fill="#cdb48a"/><rect x="1680.97" y="451.27" width="2.17" height="2.17" fill="#d0b892"/><rect x="1687.48" y="451.27" width="2.17" height="2.17" fill="#e9d8aa"/><rect x="1689.65" y="451.27" width="2.17" height="2.17" fill="#d0b892"/><rect x="1691.82" y="451.27" width="2.17" height="2.17" fill="#e9d8aa"/><rect x="1702.67" y="451.27" width="2.17" height="2.17" fill="#dcc596"/><rect x="1626.72" y="453.44" width="2.17" height="2.17" fill="#d0b892"/><rect x="1628.89" y="453.44" width="2.17" height="2.17" fill="#cdb48a"/><rect x="1631.06" y="453.44" width="2.17" height="2.17" fill="#e6d2a2"/><rect x="1635.40" y="453.44" width="2.17" height="2.17" fill="#dcc596"/><rect x="1637.57" y="453.44" width="2.17" height="2.17" fill="#dcc596"/><rect x="1641.91" y="453.44" width="2.17" height="2.17" fill="#e6d2a2"/><rect x="1644.08" y="453.44" width="2.17" height="2.17" fill="#e9d8aa"/><rect x="1646.25" y="453.44" width="2.17" height="2.17" fill="#cdb48a"/><rect x="1648.42" y="453.44" width="2.17" height="2.17" fill="#dcc596"/><rect x="1650.59" y="453.44" width="2.17" height="2.17" fill="#dcc596"/><rect x="1652.76" y="453.44" width="2.17" height="2.17" fill="#dcc596"/><rect x="1654.93" y="453.44" width="2.17" height="2.17" fill="#d7bf92"/><rect x="1657.10" y="453.44" width="2.17" height="2.17" fill="#d7bf92"/><rect x="1659.27" y="453.44" width="2.17" height="2.17" fill="#cdb48a"/><rect x="1661.44" y="453.44" width="2.17" height="2.17" fill="#d0b892"/><rect x="1663.61" y="453.44" width="2.17" height="2.17" fill="#d0b892"/><rect x="1665.78" y="453.44" width="2.17" height="2.17" fill="#dcc596"/><rect x="1667.95" y="453.44" width="2.17" height="2.17" fill="#cdb48a"/><rect x="1670.12" y="453.44" width="2.17" height="2.17" fill="#e9d8aa"/><rect x="1672.29" y="453.44" width="2.17" height="2.17" fill="#d7bf92"/><rect x="1674.46" y="453.44" width="2.17" height="2.17" fill="#e9d8aa"/><rect x="1676.63" y="453.44" width="2.17" height="2.17" fill="#d7bf92"/><rect x="1678.80" y="453.44" width="2.17" height="2.17" fill="#e9d8aa"/><rect x="1680.97" y="453.44" width="2.17" height="2.17" fill="#dcc596"/><rect x="1687.48" y="453.44" width="2.17" height="2.17" fill="#e9d8aa"/><rect x="1691.82" y="453.44" width="2.17" height="2.17" fill="#d7bf92"/><rect x="1693.99" y="453.44" width="2.17" height="2.17" fill="#dcc596"/><rect x="1707.01" y="453.44" width="2.17" height="2.17" fill="#d7bf92"/><rect x="1709.18" y="453.44" width="2.17" height="2.17" fill="#cdb48a"/><rect x="1624.55" y="455.61" width="2.17" height="2.17" fill="#dcc596"/><rect x="1626.72" y="455.61" width="2.17" height="2.17" fill="#d7bf92"/><rect x="1628.89" y="455.61" width="2.17" height="2.17" fill="#d0b892"/><rect x="1635.40" y="455.61" width="2.17" height="2.17" fill="#dcc596"/><rect x="1637.57" y="455.61" width="2.17" height="2.17" fill="#d0b892"/><rect x="1639.74" y="455.61" width="2.17" height="2.17" fill="#d0b892"/><rect x="1646.25" y="455.61" width="2.17" height="2.17" fill="#e6d2a2"/><rect x="1648.42" y="455.61" width="2.17" height="2.17" fill="#e9d8aa"/><rect x="1650.59" y="455.61" width="2.17" height="2.17" fill="#d7bf92"/><rect x="1652.76" y="455.61" width="2.17" height="2.17" fill="#e9d8aa"/><rect x="1654.93" y="455.61" width="2.17" height="2.17" fill="#e9d8aa"/><rect x="1657.10" y="455.61" width="2.17" height="2.17" fill="#e6d2a2"/><rect x="1659.27" y="455.61" width="2.17" height="2.17" fill="#cdb48a"/><rect x="1661.44" y="455.61" width="2.17" height="2.17" fill="#e6d2a2"/><rect x="1663.61" y="455.61" width="2.17" height="2.17" fill="#dcc596"/><rect x="1665.78" y="455.61" width="2.17" height="2.17" fill="#d0b892"/><rect x="1667.95" y="455.61" width="2.17" height="2.17" fill="#e6d2a2"/><rect x="1670.12" y="455.61" width="2.17" height="2.17" fill="#cdb48a"/><rect x="1672.29" y="455.61" width="2.17" height="2.17" fill="#e6d2a2"/><rect x="1674.46" y="455.61" width="2.17" height="2.17" fill="#e9d8aa"/><rect x="1678.80" y="455.61" width="2.17" height="2.17" fill="#e9d8aa"/><rect x="1683.14" y="455.61" width="2.17" height="2.17" fill="#e9d8aa"/><rect x="1693.99" y="455.61" width="2.17" height="2.17" fill="#d0b892"/><rect x="1696.16" y="455.61" width="2.17" height="2.17" fill="#e6d2a2"/><rect x="1704.84" y="455.61" width="2.17" height="2.17" fill="#dcc596"/><rect x="1709.18" y="455.61" width="2.17" height="2.17" fill="#cdb48a"/><rect x="1622.38" y="457.78" width="2.17" height="2.17" fill="#d7bf92"/><rect x="1624.55" y="457.78" width="2.17" height="2.17" fill="#dcc596"/><rect x="1628.89" y="457.78" width="2.17" height="2.17" fill="#cdb48a"/><rect x="1633.23" y="457.78" width="2.17" height="2.17" fill="#e9d8aa"/><rect x="1635.40" y="457.78" width="2.17" height="2.17" fill="#cdb48a"/><rect x="1637.57" y="457.78" width="2.17" height="2.17" fill="#dcc596"/><rect x="1644.08" y="457.78" width="2.17" height="2.17" fill="#e9d8aa"/><rect x="1646.25" y="457.78" width="2.17" height="2.17" fill="#e6d2a2"/><rect x="1648.42" y="457.78" width="2.17" height="2.17" fill="#d7bf92"/><rect x="1654.93" y="457.78" width="2.17" height="2.17" fill="#dcc596"/><rect x="1657.10" y="457.78" width="2.17" height="2.17" fill="#d0b892"/><rect x="1659.27" y="457.78" width="2.17" height="2.17" fill="#e9d8aa"/><rect x="1661.44" y="457.78" width="2.17" height="2.17" fill="#dcc596"/><rect x="1663.61" y="457.78" width="2.17" height="2.17" fill="#d7bf92"/><rect x="1665.78" y="457.78" width="2.17" height="2.17" fill="#cdb48a"/><rect x="1667.95" y="457.78" width="2.17" height="2.17" fill="#cdb48a"/><rect x="1670.12" y="457.78" width="2.17" height="2.17" fill="#e6d2a2"/><rect x="1672.29" y="457.78" width="2.17" height="2.17" fill="#cdb48a"/><rect x="1674.46" y="457.78" width="2.17" height="2.17" fill="#d0b892"/><rect x="1676.63" y="457.78" width="2.17" height="2.17" fill="#d7bf92"/><rect x="1678.80" y="457.78" width="2.17" height="2.17" fill="#d7bf92"/><rect x="1680.97" y="457.78" width="2.17" height="2.17" fill="#e6d2a2"/><rect x="1691.82" y="457.78" width="2.17" height="2.17" fill="#e6d2a2"/><rect x="1693.99" y="457.78" width="2.17" height="2.17" fill="#e6d2a2"/><rect x="1696.16" y="457.78" width="2.17" height="2.17" fill="#d7bf92"/><rect x="1702.67" y="457.78" width="2.17" height="2.17" fill="#e6d2a2"/><rect x="1707.01" y="457.78" width="2.17" height="2.17" fill="#cdb48a"/><rect x="1626.72" y="459.95" width="2.17" height="2.17" fill="#e9d8aa"/><rect x="1633.23" y="459.95" width="2.17" height="2.17" fill="#d7bf92"/><rect x="1637.57" y="459.95" width="2.17" height="2.17" fill="#e9d8aa"/><rect x="1639.74" y="459.95" width="2.17" height="2.17" fill="#dcc596"/><rect x="1641.91" y="459.95" width="2.17" height="2.17" fill="#d0b892"/><rect x="1644.08" y="459.95" width="2.17" height="2.17" fill="#e6d2a2"/><rect x="1646.25" y="459.95" width="2.17" height="2.17" fill="#e9d8aa"/><rect x="1648.42" y="459.95" width="2.17" height="2.17" fill="#d0b892"/><rect x="1650.59" y="459.95" width="2.17" height="2.17" fill="#cdb48a"/><rect x="1652.76" y="459.95" width="2.17" height="2.17" fill="#cdb48a"/><rect x="1654.93" y="459.95" width="2.17" height="2.17" fill="#d0b892"/><rect x="1657.10" y="459.95" width="2.17" height="2.17" fill="#cdb48a"/><rect x="1659.27" y="459.95" width="2.17" height="2.17" fill="#e6d2a2"/><rect x="1661.44" y="459.95" width="2.17" height="2.17" fill="#dcc596"/><rect x="1663.61" y="459.95" width="2.17" height="2.17" fill="#dcc596"/><rect x="1667.95" y="459.95" width="2.17" height="2.17" fill="#e9d8aa"/><rect x="1672.29" y="459.95" width="2.17" height="2.17" fill="#e6d2a2"/><rect x="1676.63" y="459.95" width="2.17" height="2.17" fill="#dcc596"/><rect x="1678.80" y="459.95" width="2.17" height="2.17" fill="#d7bf92"/><rect x="1680.97" y="459.95" width="2.17" height="2.17" fill="#dcc596"/><rect x="1683.14" y="459.95" width="2.17" height="2.17" fill="#e9d8aa"/><rect x="1687.48" y="459.95" width="2.17" height="2.17" fill="#e9d8aa"/><rect x="1691.82" y="459.95" width="2.17" height="2.17" fill="#e6d2a2"/><rect x="1693.99" y="459.95" width="2.17" height="2.17" fill="#d0b892"/><rect x="1696.16" y="459.95" width="2.17" height="2.17" fill="#cdb48a"/><rect x="1698.33" y="459.95" width="2.17" height="2.17" fill="#e6d2a2"/><rect x="1702.67" y="459.95" width="2.17" height="2.17" fill="#cdb48a"/><rect x="1618.04" y="462.12" width="2.17" height="2.17" fill="#e6d2a2"/><rect x="1628.89" y="462.12" width="2.17" height="2.17" fill="#e9d8aa"/><rect x="1631.06" y="462.12" width="2.17" height="2.17" fill="#d0b892"/><rect x="1633.23" y="462.12" width="2.17" height="2.17" fill="#d0b892"/><rect x="1635.40" y="462.12" width="2.17" height="2.17" fill="#d0b892"/><rect x="1637.57" y="462.12" width="2.17" height="2.17" fill="#e6d2a2"/><rect x="1639.74" y="462.12" width="2.17" height="2.17" fill="#e6d2a2"/><rect x="1641.91" y="462.12" width="2.17" height="2.17" fill="#e6d2a2"/><rect x="1644.08" y="462.12" width="2.17" height="2.17" fill="#cdb48a"/><rect x="1646.25" y="462.12" width="2.17" height="2.17" fill="#cdb48a"/><rect x="1648.42" y="462.12" width="2.17" height="2.17" fill="#e9d8aa"/><rect x="1650.59" y="462.12" width="2.17" height="2.17" fill="#e9d8aa"/><rect x="1652.76" y="462.12" width="2.17" height="2.17" fill="#cdb48a"/><rect x="1654.93" y="462.12" width="2.17" height="2.17" fill="#dcc596"/><rect x="1657.10" y="462.12" width="2.17" height="2.17" fill="#d7bf92"/><rect x="1659.27" y="462.12" width="2.17" height="2.17" fill="#cdb48a"/><rect x="1661.44" y="462.12" width="2.17" height="2.17" fill="#d0b892"/><rect x="1663.61" y="462.12" width="2.17" height="2.17" fill="#d7bf92"/><rect x="1667.95" y="462.12" width="2.17" height="2.17" fill="#cdb48a"/><rect x="1670.12" y="462.12" width="2.17" height="2.17" fill="#d7bf92"/><rect x="1672.29" y="462.12" width="2.17" height="2.17" fill="#e9d8aa"/><rect x="1676.63" y="462.12" width="2.17" height="2.17" fill="#d7bf92"/><rect x="1678.80" y="462.12" width="2.17" height="2.17" fill="#dcc596"/><rect x="1680.97" y="462.12" width="2.17" height="2.17" fill="#d7bf92"/><rect x="1683.14" y="462.12" width="2.17" height="2.17" fill="#d7bf92"/><rect x="1685.31" y="462.12" width="2.17" height="2.17" fill="#d7bf92"/><rect x="1689.65" y="462.12" width="2.17" height="2.17" fill="#d0b892"/><rect x="1698.33" y="462.12" width="2.17" height="2.17" fill="#e6d2a2"/></g><rect x="1801" y="175" width="114" height="209" fill="url(#psand)"/><path d="M1852 180 Q1818 235 1830 292 Q1848 348 1918 352" fill="none" stroke="#bfae80" stroke-width="14" opacity="0.42" filter="url(#blur4)"/><path d="M1848 182 Q1885 176 1918 192" fill="none" stroke="#c9b686" stroke-width="10" opacity="0.45" filter="url(#blur4)"/><rect x="1801" y="454" width="114" height="9" fill="url(#psand)"/><path d="M1313.4 175V463M1383.1 175V463M1452.7 175V463M1522.4 175V463M1592.0 175V463M1661.7 175V463M1731.3 175V463M1801.0 175V463M1870.6 175V463M1299 175.3H1920M1299 245.0H1920M1299 314.6H1920M1299 384.2H1920M1299 453.9H1920" stroke="#c8c8c8" stroke-opacity="0.45" stroke-width="1"/><rect x="1383" y="175.5" width="209" height="208.5" fill="none" stroke="#ffffff" stroke-width="1.5"/></svg>
<div class="a" style="left:1294px;top:464px;width:626px;height:5px;background:#333333;"></div>
<div class="a" style="left:1294px;top:469px;width:626px;height:1px;background:#505050;"></div>
<div class="a" style="left:1916px;top:175px;width:4px;height:288px;background:#2a2a2a;"></div>
<div class="a" style="left:1298px;top:472px;width:148px;height:19px;background:#515151;border-radius:3px;border-bottom:1px solid #2a2a2a"></div>
<div class="t" style="left:1301px;top:475px;font-size:12px;color:#c4c4c4;font-weight:400;letter-spacing:0.3px;">Default Brush</div>
<svg class="i" style="left:1432px;top:478px;" width="8" height="5" viewBox="0 0 8 5"><path d="M0 0H8L4 5Z" fill="#c4c4c4"/></svg>
<div class="a" style="left:1445px;top:472px;width:0;height:19px;border-left:1px dashed #c8c8c8"></div>
<div class="a" style="left:1885px;top:473px;width:30px;height:17px;background:#46607c;border-radius:3px"></div>
<svg class="i" style="left:1892px;top:474px;" width="16" height="15" viewBox="0 0 16 15"><circle cx="6" cy="6" r="3" fill="none" stroke="#d8d8d8" stroke-width="2.2" stroke-dasharray="2 1.2"/><path d="M14 5L7 12L6 14L8 13L15 6Z" fill="#d8d8d8"/></svg>
<div class="t" style="left:1298px;top:498px;font-size:12px;color:#7e7e7e;font-weight:400;letter-spacing:0.3px;">Script</div>
<div class="a" style="left:1450px;top:496px;width:465px;height:17px;background:#2f2f2f;border-radius:3px"></div>
<svg class="i" style="left:1454px;top:499px;" width="9" height="11" viewBox="0 0 9 11"><path d="M0.5 0.5H6L8.5 3V10.5H0.5Z" fill="#8a8a8a"/><rect x="2" y="4" width="5" height="4" fill="#5a9a5a"/></svg>
<div class="t" style="left:1465px;top:499px;font-size:12px;color:#7e7e7e;font-weight:400;letter-spacing:0.3px;">GridBrush</div>
<svg class="i" style="left:1901px;top:499px;" width="11" height="11" viewBox="0 0 11 11"><circle cx="5.5" cy="5.5" r="4.5" fill="none" stroke="#7e7e7e" stroke-width="1"/><circle cx="5.5" cy="5.5" r="1.8" fill="#7e7e7e"/></svg>
<div class="t" style="left:1298px;top:518px;font-size:12px;color:#c4c4c4;font-weight:400;letter-spacing:0.26px;">Flood Fill Contiguous Only</div>
<div class="a" style="left:1450px;top:517px;width:13px;height:14px;background:#2a2a2a;border-radius:2px"></div>
<svg class="i" style="left:1451px;top:519px;" width="11" height="10" viewBox="0 0 11 10"><path d="M1.5 5L4.5 8L9.5 2" fill="none" stroke="#e0e0e0" stroke-width="1.4"/></svg>
<div class="t" style="left:1298px;top:538px;font-size:12px;color:#c4c4c4;font-weight:400;letter-spacing:0.26px;">Lock Z Position</div>
<div class="a" style="left:1450px;top:537px;width:13px;height:14px;background:#2a2a2a;border-radius:2px"></div>
<svg class="i" style="left:1451px;top:539px;" width="11" height="10" viewBox="0 0 11 10"><path d="M1.5 5L4.5 8L9.5 2" fill="none" stroke="#e0e0e0" stroke-width="1.4"/></svg>
<div class="t" style="left:1298px;top:558px;font-size:12px;color:#7e7e7e;font-weight:400;letter-spacing:0.3px;">Z Position</div>
<div class="a" style="left:1450px;top:556px;width:234px;height:17px;background:#2f2f2f;border-radius:3px"></div>
<div class="t" style="left:1453px;top:559px;font-size:12px;color:#7e7e7e;font-weight:400;letter-spacing:0px;">0</div>
<div class="a" style="left:1689px;top:556px;width:226px;height:17px;background:#424242;border-radius:3px"></div>
<div class="t" style="left:1786px;top:559px;font-size:12px;color:#7e7e7e;font-weight:400;letter-spacing:0.3px;">Reset</div>
<div class="panel" style="left:0;top:634px;width:756px;height:384px;"><div class="tabstrip"></div></div>
<div class="a" style="left:0px;top:634px;width:85px;height:19px;background:#3c3c3c;border-radius:4px 4px 0 0"></div>
<svg class="i" style="left:8px;top:638px;" width="11" height="11" viewBox="0 0 11 11"><rect x="0.5" y="0.5" width="10" height="10" fill="#c4c4c4"/><path d="M2.5 3H8.5M2.5 5.5H8.5M2.5 8H6.5" stroke="#3c3c3c" stroke-width="1"/></svg>
<div class="t" style="left:23px;top:639px;font-size:12px;color:#c4c4c4;font-weight:400;letter-spacing:0.3px;">Console</div>
<svg class="i" style="left:94px;top:640px;" width="15" height="9" viewBox="0 0 15 9"><rect x="0.5" y="0.5" width="14" height="8" rx="4" fill="#c4c4c4"/><path d="M3 4.5H6M4.5 3V6" stroke="#282828" stroke-width="1"/><circle cx="10" cy="3.5" r="0.9" fill="#282828"/><circle cx="11.5" cy="5.5" r="0.9" fill="#282828"/></svg>
<div class="t" style="left:111px;top:639px;font-size:12px;color:#c4c4c4;font-weight:400;letter-spacing:0.3px;">Game</div>
<svg class="i" style="left:742px;top:638px;" width="3" height="11" viewBox="0 0 3 11"><rect width="2.5" height="2.5" fill="#c4c4c4"/><rect y="4" width="2.5" height="2.5" fill="#c4c4c4"/><rect y="8" width="2.5" height="2.5" fill="#c4c4c4"/></svg>
<div class="a" style="left:0px;top:653px;width:756px;height:20px;background:#3c3c3c;"></div>
<div class="a" style="left:0px;top:672px;width:756px;height:1px;background:#2a2a2a;"></div>
<div class="a" style="left:40px;top:653px;width:1px;height:19px;background:#2a2a2a;"></div>
<div class="a" style="left:57px;top:653px;width:1px;height:19px;background:#2a2a2a;"></div>
<div class="a" style="left:117px;top:653px;width:1px;height:19px;background:#2a2a2a;"></div>
<div class="a" style="left:193px;top:653px;width:1px;height:19px;background:#2a2a2a;"></div>
<div class="a" style="left:246px;top:653px;width:1px;height:19px;background:#2a2a2a;"></div>
<div class="t" style="left:4px;top:657px;font-size:12px;color:#c4c4c4;font-weight:400;letter-spacing:0.3px;">Clear</div>
<svg class="i" style="left:44px;top:660px;" width="8" height="5" viewBox="0 0 8 5"><path d="M0 0H8L4 5Z" fill="#c4c4c4"/></svg>
<div class="t" style="left:63px;top:657px;font-size:12px;color:#c4c4c4;font-weight:400;letter-spacing:0.3px;">Collapse</div>
<div class="t" style="left:123px;top:657px;font-size:12px;color:#c4c4c4;font-weight:400;letter-spacing:0.3px;">Error Pause</div>
<div class="t" style="left:197px;top:657px;font-size:12px;color:#c4c4c4;font-weight:400;letter-spacing:0.3px;">Editor</div>
<svg class="i" style="left:232px;top:660px;" width="8" height="5" viewBox="0 0 8 5"><path d="M0 0H8L4 5Z" fill="#c4c4c4"/></svg>
<div class="a" style="left:352px;top:655px;width:299px;height:16px;background:#2a2a2a;border-radius:3px;border:1px solid #232323"></div>
<svg class="i" style="left:357px;top:659px;" width="8" height="8" viewBox="0 0 8 8"><circle cx="3.2" cy="3.2" r="2.3" fill="none" stroke="#c4c4c4" stroke-width="1.1"/><path d="M4.8 4.8L7 7" stroke="#c4c4c4" stroke-width="1.3"/></svg>
<div class="a" style="left:653px;top:653px;width:34px;height:19px;background:#4e4e4e;"></div>
<div class="a" style="left:652px;top:653px;width:1px;height:19px;background:#2a2a2a;"></div>
<div class="a" style="left:688px;top:653px;width:34px;height:19px;background:#4e4e4e;"></div>
<div class="a" style="left:687px;top:653px;width:1px;height:19px;background:#2a2a2a;"></div>
<div class="a" style="left:722px;top:653px;width:34px;height:19px;background:#4e4e4e;"></div>
<div class="a" style="left:721px;top:653px;width:1px;height:19px;background:#2a2a2a;"></div>
<svg class="i" style="left:660px;top:656px;" width="14" height="14" viewBox="0 0 14 14"><circle cx="6.5" cy="6.5" r="6.3" fill="#7a7a7a"/><path d="M9 11L12.5 13.5L11.5 9Z" fill="#7a7a7a"/><rect x="5.8" y="2.5" width="1.4" height="5.5" fill="#4e4e4e"/><rect x="5.8" y="9.2" width="1.4" height="1.4" fill="#4e4e4e"/></svg>
<div class="t" style="left:676px;top:657px;font-size:12px;color:#9a9a9a;font-weight:400;letter-spacing:0px;">0</div>
<svg class="i" style="left:693px;top:655px;" width="14" height="13" viewBox="0 0 14 13"><path d="M7 0.5L13.5 12.5H0.5Z" fill="#7a7a7a"/><rect x="6.2" y="4" width="1.6" height="4.5" fill="#4e4e4e"/><rect x="6.2" y="9.5" width="1.6" height="1.6" fill="#4e4e4e"/></svg>
<div class="t" style="left:710px;top:657px;font-size:12px;color:#9a9a9a;font-weight:400;letter-spacing:0px;">0</div>
<svg class="i" style="left:727px;top:655px;" width="14" height="14" viewBox="0 0 14 14"><polygon points="4.2,0.5 9.8,0.5 13.5,4.2 13.5,9.8 9.8,13.5 4.2,13.5 0.5,9.8 0.5,4.2" fill="#d0d0d0"/><rect x="6.2" y="3" width="1.6" height="5" fill="#4e4e4e"/><rect x="6.2" y="9.5" width="1.6" height="1.6" fill="#4e4e4e"/></svg>
<div class="t" style="left:744px;top:657px;font-size:12px;color:#9a9a9a;font-weight:400;letter-spacing:0px;">0</div>
<div class="a" style="left:0px;top:914px;width:756px;height:1px;background:#282828;"></div>
<div class="panel" style="left:758px;top:634px;width:534px;height:384px;"><div class="tabstrip"></div></div>
<div class="a" style="left:758px;top:634px;width:81px;height:19px;background:#3c3c3c;border-radius:4px 4px 0 0"></div>
<svg class="i" style="left:765px;top:638px;" width="13" height="12" viewBox="0 0 13 12"><path d="M0.5 1.5A1 1 0 0 1 1.5 0.5H5L6.5 2.5H11.5A1 1 0 0 1 12.5 3.5V10.5A1 1 0 0 1 11.5 11.5H1.5A1 1 0 0 1 0.5 10.5Z" fill="#c4c4c4"/></svg>
<div class="t" style="left:782px;top:639px;font-size:12px;color:#c4c4c4;font-weight:400;letter-spacing:0.3px;">Project</div>
<svg class="i" style="left:1258px;top:638px;" width="9" height="10" viewBox="0 0 9 10"><path d="M2 4.5V2.5A2 2 0 0 1 6 2.5" fill="none" stroke="#c4c4c4" stroke-width="1.1"/><rect x="0.5" y="5" width="8" height="4.5" fill="none" stroke="#c4c4c4" stroke-width="1.1"/></svg>
<svg class="i" style="left:1278px;top:638px;" width="3" height="11" viewBox="0 0 3 11"><rect width="2.5" height="2.5" fill="#c4c4c4"/><rect y="4" width="2.5" height="2.5" fill="#c4c4c4"/><rect y="8" width="2.5" height="2.5" fill="#c4c4c4"/></svg>
<div class="a" style="left:758px;top:653px;width:534px;height:20px;background:#3c3c3c;"></div>
<div class="a" style="left:758px;top:672px;width:534px;height:1px;background:#2a2a2a;"></div>
<svg class="i" style="left:765px;top:657px;" width="12" height="12" viewBox="0 0 12 12"><path d="M6 0V12M0 6H12" stroke="#c4c4c4" stroke-width="2"/></svg>
<svg class="i" style="left:783px;top:661px;" width="8" height="5" viewBox="0 0 8 5"><path d="M0 0H8L4 5Z" fill="#c4c4c4"/></svg>
<div class="a" style="left:829px;top:655px;width:300px;height:16px;background:#2a2a2a;border-radius:3px 0 0 3px;border-top:1px solid #1c1c1c"></div>
<svg class="i" style="left:835px;top:659px;" width="8" height="8" viewBox="0 0 8 8"><circle cx="3.2" cy="3.2" r="2.3" fill="none" stroke="#c4c4c4" stroke-width="1.1"/><path d="M4.8 4.8L7 7" stroke="#c4c4c4" stroke-width="1.3"/></svg>
<div class="a" style="left:1129px;top:655px;width:17px;height:16px;background:#383838;border-radius:0 3px 3px 0"></div>
<svg class="i" style="left:1131px;top:656px;" width="13" height="13" viewBox="0 0 13 13"><rect x="4.5" y="0.5" width="8" height="8" fill="none" stroke="#c4c4c4" stroke-width="1.1"/><rect x="0.5" y="8.5" width="4" height="4" fill="none" stroke="#c4c4c4" stroke-width="1.1"/><path d="M4.5 8.5L10 3M7 3H10V6" fill="none" stroke="#c4c4c4" stroke-width="1.1"/></svg>
<div class="a" style="left:1149px;top:653px;width:1px;height:19px;background:#2a2a2a;"></div>
<div class="a" style="left:1175px;top:653px;width:1px;height:19px;background:#2a2a2a;"></div>
<div class="a" style="left:1201px;top:653px;width:1px;height:19px;background:#2a2a2a;"></div>
<div class="a" style="left:1227px;top:653px;width:1px;height:19px;background:#2a2a2a;"></div>
<div class="a" style="left:1253px;top:653px;width:1px;height:19px;background:#2a2a2a;"></div>
<svg class="i" style="left:1155px;top:655px;" width="14" height="14" viewBox="0 0 14 14"><rect x="2" y="0.5" width="5" height="5" fill="#c4c4c4"/><circle cx="4" cy="10" r="3.5" fill="#c4c4c4"/><path d="M9.5 4L13.5 11H5.5Z" fill="#c4c4c4"/></svg>
<svg class="i" style="left:1181px;top:656px;" width="13" height="13" viewBox="0 0 13 13"><path d="M6.5 0.5H12.5V6.5L6 13L0 7Z" fill="#c4c4c4"/><circle cx="10" cy="3" r="1.2" fill="#3c3c3c"/></svg>
<svg class="i" style="left:1207px;top:655px;" width="14" height="14" viewBox="0 0 14 14"><polygon points="4.2,0.5 9.8,0.5 13.5,4.2 13.5,9.8 9.8,13.5 4.2,13.5 0.5,9.8 0.5,4.2" fill="#d0d0d0"/><rect x="6.2" y="3" width="1.6" height="5" fill="#3c3c3c"/><rect x="6.2" y="9.5" width="1.6" height="1.6" fill="#3c3c3c"/></svg>
<svg class="i" style="left:1233px;top:656px;" width="13" height="13" viewBox="0 0 13 13"><path d="M6.5 0.5L8.3 4.5L12.5 4.8L9.3 7.6L10.3 12L6.5 9.7L2.7 12L3.7 7.6L0.5 4.8L4.7 4.5Z" fill="#8a8a8a"/></svg>
<svg class="i" style="left:1258px;top:656px;" width="16" height="13" viewBox="0 0 16 13"><path d="M1 7Q8 0 15 7Q8 12 1 7Z" fill="none" stroke="#c4c4c4" stroke-width="1.2"/><path d="M2 12L14 2" stroke="#c4c4c4" stroke-width="1.3"/></svg>
<div class="t" style="left:1274px;top:657px;font-size:12px;color:#c4c4c4;font-weight:400;letter-spacing:0px;">21</div>
<div class="a" style="left:1053px;top:673px;width:1px;height:345px;background:#232323;"></div>
<div class="a" style="left:758px;top:817px;width:295px;height:16px;background:#4d4d4d;"></div>
<svg class="i" style="left:762px;top:678px;" width="9" height="8" viewBox="0 0 9 8"><path d="M0 0H9L4.5 8Z" fill="#7a7a7a"/></svg>
<svg class="i" style="left:776px;top:675px;" width="13" height="12" viewBox="0 0 13 12"><path d="M6.5 0.5L8.3 4.5L12.5 4.8L9.3 7.6L10.3 12L6.5 9.7L2.7 12L3.7 7.6L0.5 4.8L4.7 4.5Z" fill="#c4c4c4"/></svg>
<div class="t" style="left:793px;top:675px;font-size:13px;color:#d2d2d2;font-weight:700;letter-spacing:0.1px;">Favorites</div>
<svg class="i" style="left:790px;top:691px;" width="12" height="12" viewBox="0 0 12 12"><circle cx="5" cy="5" r="4.2" fill="none" stroke="#c4c4c4" stroke-width="1.2"/><path d="M8 8L11.5 11.5" stroke="#c4c4c4" stroke-width="1.4"/></svg>
<div class="t" style="left:806px;top:692px;font-size:12px;color:#c4c4c4;font-weight:400;letter-spacing:0.25px;">All Materials</div>
<svg class="i" style="left:790px;top:707px;" width="12" height="12" viewBox="0 0 12 12"><circle cx="5" cy="5" r="4.2" fill="none" stroke="#c4c4c4" stroke-width="1.2"/><path d="M8 8L11.5 11.5" stroke="#c4c4c4" stroke-width="1.4"/></svg>
<div class="t" style="left:806px;top:708px;font-size:12px;color:#c4c4c4;font-weight:400;letter-spacing:0.25px;">All Models</div>
<svg class="i" style="left:790px;top:723px;" width="12" height="12" viewBox="0 0 12 12"><circle cx="5" cy="5" r="4.2" fill="none" stroke="#c4c4c4" stroke-width="1.2"/><path d="M8 8L11.5 11.5" stroke="#c4c4c4" stroke-width="1.4"/></svg>
<div class="t" style="left:806px;top:724px;font-size:12px;color:#c4c4c4;font-weight:400;letter-spacing:0.25px;">All Prefabs</div>
<svg class="i" style="left:762px;top:758px;" width="9" height="8" viewBox="0 0 9 8"><path d="M0 0H9L4.5 8Z" fill="#7a7a7a"/></svg>
<svg class="i" style="left:775px;top:755px;" width="15" height="12" viewBox="0 0 15 12"><path d="M0.5 1.5A1 1 0 0 1 1.5 0.5H5L6.5 2.5H11.5V4.5H3.5L0.5 11.5Z" fill="#c4c4c4"/><path d="M3.5 5.5H14L11.5 11.5H1Z" fill="#c4c4c4"/></svg>
<div class="t" style="left:793px;top:755px;font-size:13px;color:#d2d2d2;font-weight:700;letter-spacing:0.1px;">Assets</div>
<svg class="i" style="left:790px;top:772px;" width="13" height="12" viewBox="0 0 13 12"><path d="M0.5 1.5A1 1 0 0 1 1.5 0.5H5L6.5 2.5H11.5A1 1 0 0 1 12.5 3.5V10.5A1 1 0 0 1 11.5 11.5H1.5A1 1 0 0 1 0.5 10.5Z" fill="#c4c4c4"/></svg>
<div class="t" style="left:806px;top:771px;font-size:12px;color:#c4c4c4;font-weight:400;letter-spacing:0.25px;">Palettes</div>
<svg class="i" style="left:790px;top:788px;" width="13" height="12" viewBox="0 0 13 12"><path d="M0.5 1.5A1 1 0 0 1 1.5 0.5H5L6.5 2.5H11.5A1 1 0 0 1 12.5 3.5V10.5A1 1 0 0 1 11.5 11.5H1.5A1 1 0 0 1 0.5 10.5Z" fill="#c4c4c4"/></svg>
<div class="t" style="left:806px;top:787px;font-size:12px;color:#c4c4c4;font-weight:400;letter-spacing:0.25px;">Scenes</div>
<svg class="i" style="left:777px;top:806px;" width="9" height="8" viewBox="0 0 9 8"><path d="M0 0H9L4.5 8Z" fill="#7a7a7a"/></svg>
<svg class="i" style="left:790px;top:803px;" width="15" height="12" viewBox="0 0 15 12"><path d="M0.5 1.5A1 1 0 0 1 1.5 0.5H5L6.5 2.5H11.5V4.5H3.5L0.5 11.5Z" fill="#c4c4c4"/><path d="M3.5 5.5H14L11.5 11.5H1Z" fill="#c4c4c4"/></svg>
<div class="t" style="left:806px;top:803px;font-size:12px;color:#c4c4c4;font-weight:400;letter-spacing:0.25px;">Tiles</div>
<svg class="i" style="left:804px;top:820px;" width="13" height="12" viewBox="0 0 13 12"><path d="M0.5 1.5A1 1 0 0 1 1.5 0.5H5L6.5 2.5H11.5A1 1 0 0 1 12.5 3.5V10.5A1 1 0 0 1 11.5 11.5H1.5A1 1 0 0 1 0.5 10.5Z" fill="#c4c4c4"/></svg>
<div class="t" style="left:820px;top:819px;font-size:12px;color:#c4c4c4;font-weight:400;letter-spacing:0.25px;">Avalon</div>
<svg class="i" style="left:804px;top:836px;" width="13" height="12" viewBox="0 0 13 12"><path d="M0.5 1.5A1 1 0 0 1 1.5 0.5H5L6.5 2.5H11.5A1 1 0 0 1 12.5 3.5V10.5A1 1 0 0 1 11.5 11.5H1.5A1 1 0 0 1 0.5 10.5Z" fill="#c4c4c4"/></svg>
<div class="t" style="left:820px;top:835px;font-size:12px;color:#c4c4c4;font-weight:400;letter-spacing:0.25px;">Ground</div>
<svg class="i" style="left:763px;top:853px;" width="8" height="9" viewBox="0 0 8 9"><path d="M0 0V9L8 4.5Z" fill="#7a7a7a"/></svg>
<svg class="i" style="left:775px;top:852px;" width="13" height="12" viewBox="0 0 13 12"><path d="M0.5 1.5A1 1 0 0 1 1.5 0.5H5L6.5 2.5H11.5A1 1 0 0 1 12.5 3.5V10.5A1 1 0 0 1 11.5 11.5H1.5A1 1 0 0 1 0.5 10.5Z" fill="#c4c4c4"/></svg>
<div class="t" style="left:793px;top:851px;font-size:13px;color:#d2d2d2;font-weight:700;letter-spacing:0.1px;">Packages</div>
<div class="a" style="left:1054px;top:673px;width:238px;height:345px;background:#333333;"></div>
<div class="a" style="left:1054px;top:673px;width:238px;height:21px;background:#3e3e3e;"></div>
<div class="a" style="left:1054px;top:693px;width:238px;height:1px;background:#2c2c2c;"></div>
<div class="t" style="left:1058px;top:678px;font-size:12px;color:#a8a8a8;font-weight:400;letter-spacing:0.35px;">Assets</div>
<svg class="i" style="left:1106px;top:680px;" width="6" height="9" viewBox="0 0 6 9"><path d="M1 0.5L5 4.5L1 8.5" fill="none" stroke="#a8a8a8" stroke-width="1.1"/></svg>
<div class="t" style="left:1115px;top:678px;font-size:12px;color:#a8a8a8;font-weight:400;letter-spacing:0.35px;">Tiles</div>
<svg class="i" style="left:1150px;top:680px;" width="6" height="9" viewBox="0 0 6 9"><path d="M1 0.5L5 4.5L1 8.5" fill="none" stroke="#a8a8a8" stroke-width="1.1"/></svg>
<div class="t" style="left:1160px;top:678px;font-size:12px;color:#d2d2d2;font-weight:700;letter-spacing:0.1px;">Avalon</div>
<svg class="i" style="left:1057px;top:699px;" width="8" height="9" viewBox="0 0 8 9"><path d="M0 0V9L8 4.5Z" fill="#6a6a6a"/></svg>
<div class="t" style="left:1088px;top:698px;font-size:12.5px;color:#c4c4c4;font-weight:400;letter-spacing:0.35px;">Cliff_tileset</div>
<svg class="i" style="left:1057px;top:715px;" width="8" height="9" viewBox="0 0 8 9"><path d="M0 0V9L8 4.5Z" fill="#6a6a6a"/></svg>
<div class="t" style="left:1088px;top:714px;font-size:12.5px;color:#c4c4c4;font-weight:400;letter-spacing:0.3px;">Extra_Unfinished4</div>
<svg class="i" style="left:1057px;top:731px;" width="8" height="9" viewBox="0 0 8 9"><path d="M0 0V9L8 4.5Z" fill="#6a6a6a"/></svg>
<div class="t" style="left:1088px;top:730px;font-size:12.5px;color:#c4c4c4;font-weight:400;letter-spacing:0.95px;">graphics-tiles-waterflow</div>
<svg class="i" style="left:1057px;top:747px;" width="8" height="9" viewBox="0 0 8 9"><path d="M0 0V9L8 4.5Z" fill="#6a6a6a"/></svg>
<div class="t" style="left:1088px;top:746px;font-size:12.5px;color:#c4c4c4;font-weight:400;letter-spacing:0.6px;">ground_tiles</div>
<svg class="i" style="left:1057px;top:763px;" width="8" height="9" viewBox="0 0 8 9"><path d="M0 0V9L8 4.5Z" fill="#6a6a6a"/></svg>
<div class="t" style="left:1088px;top:762px;font-size:12.5px;color:#c4c4c4;font-weight:400;letter-spacing:0.6px;">object- layer</div>
<svg class="i" style="left:1070px;top:696px;" width="15" height="14" viewBox="0 0 15 14"><rect x="1" y="0" width="4" height="3" fill="#e6e88a"/><rect x="2" y="3" width="3" height="3" fill="#9fd06a"/><rect x="6" y="2" width="3" height="2" fill="#c8b070"/><rect x="10" y="3" width="4" height="2" fill="#e0d080"/><rect x="1" y="7" width="5" height="2" fill="#b0d060"/><rect x="7" y="7" width="6" height="3" fill="#d8d890"/><rect x="2" y="11" width="11" height="2" fill="#a0c860"/></svg>
<svg class="i" style="left:1070px;top:712px;" width="15" height="12" viewBox="0 0 15 12"><rect x="0" y="0" width="15" height="12" fill="#f2f2f2"/><rect x="2" y="2" width="4" height="3" fill="#c0a070"/><rect x="6" y="4" width="5" height="3" fill="#203050"/><rect x="11" y="8" width="2" height="2" fill="#d03020"/><rect x="2" y="7" width="2" height="2" fill="#70b0a0"/></svg>
<svg class="i" style="left:1070px;top:728px;" width="15" height="14" viewBox="0 0 15 14"><rect x="0" y="0" width="14" height="13" fill="#6cc0b0"/><rect x="14" y="0" width="1.5" height="14" fill="#000"/></svg>
<svg class="i" style="left:1071px;top:744px;" width="14" height="14" viewBox="0 0 14 14"><rect x="0" y="0" width="3" height="3" fill="#e8e0a0"/><rect x="4" y="1" width="4" height="2" fill="#50a0b0"/><rect x="9" y="0" width="4" height="3" fill="#e0d090"/><rect x="0" y="5" width="3" height="2" fill="#e0d8a0"/><rect x="5" y="5" width="4" height="3" fill="#80c0c0"/><rect x="10" y="5" width="3" height="2" fill="#40a0b0"/><rect x="0" y="10" width="4" height="3" fill="#e8e0b0"/><rect x="6" y="10" width="6" height="3" fill="#d0c8a0"/></svg>
<svg class="i" style="left:1071px;top:761px;" width="14" height="10" viewBox="0 0 14 10"><rect x="1" y="2" width="3" height="2" fill="#90c060"/><rect x="4" y="4" width="4" height="3" fill="#70a050"/><rect x="8" y="1" width="3" height="2" fill="#b0d070"/><rect x="10" y="5" width="3" height="3" fill="#6070a0"/><rect x="2" y="6" width="2" height="2" fill="#c04040"/></svg>
<div class="a" style="left:1054px;top:997px;width:238px;height:21px;background:#3e3e3e;"></div>
<svg class="i" style="left:1059px;top:1002px;" width="13" height="11" viewBox="0 0 13 11"><path d="M0.5 1.5A1 1 0 0 1 1.5 0.5H5L6.5 2.5H11.5A1 1 0 0 1 12.5 3.5V10.5A1 1 0 0 1 11.5 11.5H1.5A1 1 0 0 1 0.5 10.5Z" fill="#c4c4c4"/></svg>
<div class="t" style="left:1075px;top:1002px;font-size:12px;color:#c4c4c4;font-weight:400;letter-spacing:0.3px;">Assets/Tiles/Avalon</div>
<div class="a" style="left:1226px;top:1007px;width:50px;height:2px;background:#5a5a5a;"></div>
<svg class="i" style="left:1220px;top:1002px;" width="11" height="11" viewBox="0 0 11 11"><circle cx="5.5" cy="5.5" r="5" fill="#9a9a9a"/></svg>
<div class="a" style="left:0px;top:1018px;width:1920px;height:22px;background:#191919;"></div>
<div class="a" style="left:1814px;top:1020px;width:1px;height:20px;background:#262626;"></div>
<div class="a" style="left:1841px;top:1020px;width:1px;height:20px;background:#262626;"></div>
<div class="a" style="left:1867px;top:1020px;width:1px;height:20px;background:#262626;"></div>
<div class="a" style="left:1893px;top:1020px;width:1px;height:20px;background:#262626;"></div>
<svg class="i" style="left:1820px;top:1023px;" width="15" height="15" viewBox="0 0 15 15"><path d="M4 3.5Q7.5 1 11 3.5L12 6H3Z" fill="#cfcfcf"/><ellipse cx="7.5" cy="9" rx="4.6" ry="5" fill="#cfcfcf"/><path d="M2.5 4L1 2M12.5 4L14 2M2.8 8H0.5M12.2 8H14.5M3 12L1 14M12 12L14 14" stroke="#cfcfcf" stroke-width="1.3"/><path d="M1 1L14 14" stroke="#191919" stroke-width="2.2"/><path d="M0.5 0.5L14.5 14.5" stroke="#cfcfcf" stroke-width="0.9"/></svg>
<svg class="i" style="left:1846px;top:1023px;" width="15" height="15" viewBox="0 0 15 15"><ellipse cx="7.5" cy="3.5" rx="6.3" ry="2.8" fill="#cfcfcf"/><path d="M1.2 5.5Q7.5 9.5 13.8 5.5V8.2Q7.5 12.2 1.2 8.2Z" fill="#cfcfcf"/><path d="M1.2 10Q7.5 14 13.8 10V12Q7.5 16 1.2 12Z" fill="#cfcfcf"/><path d="M1 1L14 14" stroke="#191919" stroke-width="2.2"/><path d="M0.5 0.5L14.5 14.5" stroke="#cfcfcf" stroke-width="0.9"/></svg>
<svg class="i" style="left:1873px;top:1023px;" width="15" height="15" viewBox="0 0 15 15"><path d="M2 5A6 6 0 0 1 12 3M13 10A6 6 0 0 1 3 12" fill="none" stroke="#cfcfcf" stroke-width="1.3"/><path d="M12.5 0.5V4H9ZM2.5 14.5V11H6Z" fill="#cfcfcf"/><circle cx="7.5" cy="6.5" r="2.8" fill="#cfcfcf"/><rect x="6" y="9" width="3" height="2.5" fill="#cfcfcf"/><path d="M1 1L14 14" stroke="#191919" stroke-width="2.2"/><path d="M0.5 0.5L14.5 14.5" stroke="#cfcfcf" stroke-width="0.9"/></svg>
<svg class="i" style="left:1899px;top:1023px;" width="15" height="15" viewBox="0 0 15 15"><circle cx="7.5" cy="7.5" r="6.6" fill="none" stroke="#cfcfcf" stroke-width="1.1"/><path d="M4.3 7.6L6.6 9.9L10.8 5.6" fill="none" stroke="#cfcfcf" stroke-width="1.4"/></svg>
<div class="a" style="left:0px;top:1040px;width:1920px;height:40px;background:#1c1c1c;"></div>
<svg class="i" style="left:16px;top:1052px;" width="16" height="16" viewBox="0 0 16 16"><path d="M0 2.2L6.6 1.3V7.6H0ZM7.4 1.2L16 0V7.6H7.4ZM0 8.4H6.6V14.7L0 13.8ZM7.4 8.4H16V16L7.4 14.8Z" fill="#fff"/></svg>
<div class="a" style="left:48px;top:1040px;width:288px;height:40px;background:#333333;border:1px solid #555"></div>
<svg class="i" style="left:60px;top:1050px;" width="18" height="18" viewBox="0 0 18 18"><circle cx="11" cy="7" r="5.6" fill="none" stroke="#ddd" stroke-width="1.4"/><path d="M7 11L1 17" stroke="#ddd" stroke-width="1.6"/></svg>
<div class="t" style="left:88px;top:1053px;font-size:14px;color:#d6d6d6;font-weight:400;letter-spacing:0.05px;">Escriu aquí per cercar</div>
<svg class="i" style="left:352px;top:1052px;" width="16" height="16" viewBox="0 0 16 16"><circle cx="8" cy="8" r="6.6" fill="none" stroke="#fff" stroke-width="2"/></svg>
<svg class="i" style="left:399px;top:1051px;" width="18" height="18" viewBox="0 0 18 18"><rect x="1" y="4" width="11" height="10" fill="none" stroke="#fff" stroke-width="1.4"/><path d="M1 1.5H12M1 16.5H12M15 1V4M15 7V11M15 14V17" stroke="#fff" stroke-width="1.4"/></svg>
<svg class="i" style="left:447px;top:1048px;" width="24" height="24" viewBox="0 0 24 24"><rect width="24" height="24" rx="2" fill="#f07a2a"/><path d="M6 6Q12 3 18 6Q21 9 18 12Q21 15 18 18Q12 21 6 18Q3 15 6 12Q3 9 6 6Z" fill="none" stroke="#fff" stroke-width="2.6"/></svg>
<svg class="i" style="left:497px;top:1050px;" width="22" height="19" viewBox="0 0 22 19"><path d="M0 2H8L10 4H22V17H0Z" fill="#f4c34c"/><rect x="0" y="6" width="22" height="11" fill="#ffd865"/><path d="M5 12H17V18H14V15H8V18H5Z" fill="#2d8be0"/></svg>
<div class="a" style="left:488px;top:1077px;width:40px;height:3px;background:#76b9ed;"></div>
<svg class="i" style="left:545px;top:1048px;" width="24" height="24" viewBox="0 0 24 24"><circle cx="12" cy="12" r="12" fill="#db4437"/><path d="M12 12 L1.6080000000000005 18.0 A12 12 0 0 0 15.6 23.52Z" fill="#0f9d58"/><path d="M12 12 L15.6 23.52 A12 12 0 0 0 23.4 8.4 L24 6.0Z" fill="#f4b400"/><circle cx="12" cy="12" r="5.5200000000000005" fill="#fff"/><circle cx="12" cy="12" r="4.32" fill="#4285f4"/></svg>
<svg class="i" style="left:594px;top:1048px;" width="24" height="24" viewBox="0 0 24 24"><path d="M17 1L23 4V20L17 23L6 13L2 16L0 14V10L2 8L6 11ZM17 7L10 12L17 17Z" fill="#1f9cf0"/><path d="M17 1L23 4V20L17 23Z" fill="#0065a9" opacity="0.5"/></svg>
<svg class="i" style="left:643px;top:1048px;" width="26" height="26" viewBox="0 0 26 26"><circle cx="12" cy="12" r="12" fill="#db4437"/><path d="M12 12 L1.6080000000000005 18.0 A12 12 0 0 0 15.6 23.52Z" fill="#0f9d58"/><path d="M12 12 L15.6 23.52 A12 12 0 0 0 23.4 8.4 L24 6.0Z" fill="#f4b400"/><circle cx="12" cy="12" r="5.5200000000000005" fill="#fff"/><circle cx="12" cy="12" r="4.32" fill="#4285f4"/><circle cx="19" cy="19" r="6.5" fill="#7b2fc0"/><text x="19" y="22" font-size="8" fill="#fff" text-anchor="middle" font-family="Liberation Sans">J</text></svg>
<div class="a" style="left:635px;top:1077px;width:40px;height:3px;background:#76b9ed;"></div>
<div class="a" style="left:680px;top:1040px;width:48px;height:40px;background:#454545;"></div>
<svg class="i" style="left:692px;top:1048px;" width="24" height="24" viewBox="0 0 24 24"><polygon points="12,1 22,6.5 22,17.5 12,23 2,17.5 2,6.5" fill="#101010"/><path d="M12 5L17.5 8.2V14.8L12 18L6.5 14.8V8.2Z" fill="none" stroke="#fff" stroke-width="2"/><path d="M12 11.5V18M12 11.5L17.5 8.2M12 11.5L6.5 8.2" stroke="#fff" stroke-width="2"/></svg>
<div class="a" style="left:680px;top:1077px;width:48px;height:3px;background:#76b9ed;"></div>
<svg class="i" style="left:742px;top:1048px;" width="23" height="22" viewBox="0 0 23 22"><rect x="0.5" y="0.5" width="22" height="21" fill="#001e36" stroke="#31a8ff"/><text x="11.5" y="15" font-size="11" font-weight="700" fill="#31a8ff" text-anchor="middle" font-family="Liberation Sans">Ps</text></svg>
<div class="a" style="left:733px;top:1077px;width:40px;height:3px;background:#76b9ed;"></div>
<svg class="i" style="left:790px;top:1048px;" width="26" height="26" viewBox="0 0 26 26"><circle cx="12" cy="12" r="12" fill="#db4437"/><path d="M12 12 L1.6080000000000005 18.0 A12 12 0 0 0 15.6 23.52Z" fill="#0f9d58"/><path d="M12 12 L15.6 23.52 A12 12 0 0 0 23.4 8.4 L24 6.0Z" fill="#f4b400"/><circle cx="12" cy="12" r="5.5200000000000005" fill="#fff"/><circle cx="12" cy="12" r="4.32" fill="#4285f4"/><circle cx="19" cy="19" r="6.5" fill="#e8d8c8"/><path d="M13 17Q19 10 25 17Q22 15 19 16Q15 15 13 17Z" fill="#222"/></svg>
<div class="a" style="left:782px;top:1077px;width:40px;height:3px;background:#76b9ed;"></div>
<svg class="i" style="left:1478px;top:1049px;" width="24" height="22" viewBox="0 0 24 22"><circle cx="10" cy="10" r="9.5" fill="#f5a623"/><path d="M8 18Q4 18 4 15Q4 12 8 12.5Q9 9.5 13 9.5Q17.5 9.5 18 13.5Q21.5 13.5 21.5 16Q21.5 18.5 18.5 18.5Z" fill="#cfe4f7"/></svg>
<div class="t" style="left:1508px;top:1053px;font-size:14px;color:#e6e6e6;font-weight:400;letter-spacing:0.1px;">20°C</div>
<div class="t" style="left:1546px;top:1053px;font-size:14px;color:#e6e6e6;font-weight:400;letter-spacing:-0.05px;">Mayorm. soleado</div>
<svg class="i" style="left:1677px;top:1055px;" width="12" height="8" viewBox="0 0 12 8"><path d="M1 7L6 1.5L11 7" fill="none" stroke="#fff" stroke-width="1.3"/></svg>
<svg class="i" style="left:1699px;top:1052px;" width="16" height="14" viewBox="0 0 16 14"><rect x="4.5" y="5" width="10" height="7" fill="none" stroke="#fff" stroke-width="1.1"/><rect x="6" y="6.5" width="7" height="4" fill="#fff"/><path d="M1 2V6M3 2V6M0 6H4L2 9V12" stroke="#fff" stroke-width="1"/></svg>
<svg class="i" style="left:1724px;top:1051px;" width="16" height="16" viewBox="0 0 16 16"><path d="M2 14A12 12 0 0 1 14 2M4.5 14A9.5 9.5 0 0 1 14 4.5M7 14A7 7 0 0 1 14 7M9.5 14A4.5 4.5 0 0 1 14 9.5" fill="none" stroke="#fff" stroke-width="1"/><circle cx="13" cy="13" r="1.5" fill="#fff"/></svg>
<svg class="i" style="left:1747px;top:1051px;" width="16" height="16" viewBox="0 0 16 16"><path d="M1 5.5H4L8 2V14L4 10.5H1Z" fill="none" stroke="#fff" stroke-width="1.1"/><path d="M10.5 6L14.5 10M14.5 6L10.5 10" stroke="#fff" stroke-width="1.1"/></svg>
<div class="t" style="left:1774px;top:1053px;font-size:12px;color:#e6e6e6;font-weight:400;letter-spacing:0.1px;">CAT</div>
<div class="t" style="left:1821px;top:1045px;font-size:11.5px;color:#e6e6e6;font-weight:400;letter-spacing:0px;">16:43</div>
<div class="t" style="left:1810px;top:1063px;font-size:11.5px;color:#e6e6e6;font-weight:400;letter-spacing:-0.1px;">18/1/2024</div>
<svg class="i" style="left:1879px;top:1052px;" width="16" height="17" viewBox="0 0 16 17"><path d="M0 0H16V12H10L7 15.5V12H0Z" fill="#fff"/><path d="M3 3.5H13M3 6H13M3 8.5H10" stroke="#1c1c1c" stroke-width="1"/></svg>
<div class="a" style="left:1915px;top:1042px;width:1px;height:38px;background:#555;"></div>
<svg class="i" style="left:0;top:0;pointer-events:none" width="1920" height="1080" viewBox="0 0 1920 1080"><path d="M1417 246 L556 317.5" stroke="#fff" stroke-width="2.2" stroke-linecap="round"/><path d="M540 318 L559 310.8 L559 322Z" fill="#fff"/><path d="M1449 159 L1485 129" stroke="#fff" stroke-width="2.6" stroke-linecap="round"/><path d="M1496 120 L1477.8 129.2 L1483.9 135.6Z" fill="#fff" stroke="#fff" stroke-width="1.5" stroke-linejoin="round"/></svg>
</body></html>
